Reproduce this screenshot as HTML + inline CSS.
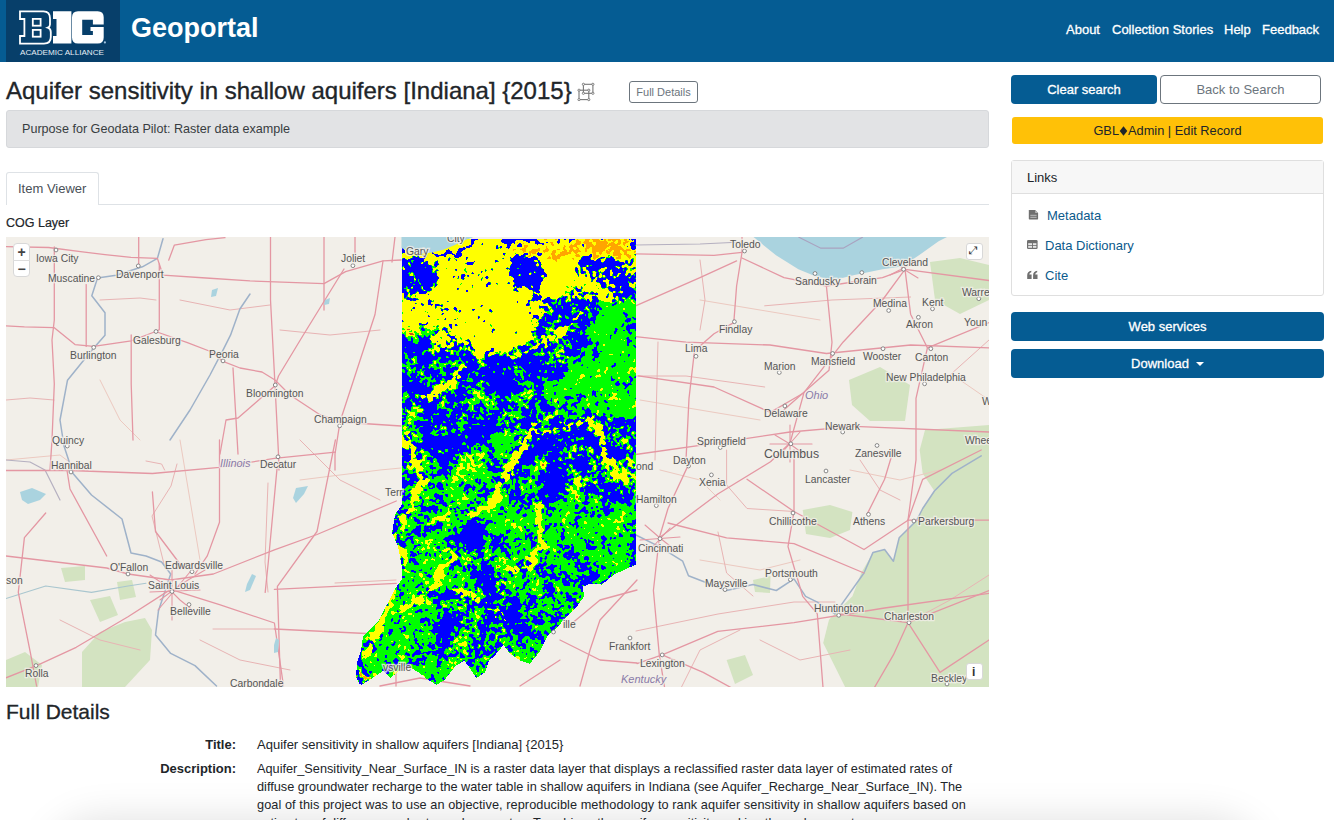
<!DOCTYPE html>
<html><head><meta charset="utf-8">
<style>
*{box-sizing:border-box;margin:0;padding:0}
html,body{width:1334px;height:820px;overflow:hidden;background:#fff}
body{font-family:"Liberation Sans",sans-serif;color:#212529;position:relative}
.abs{position:absolute;white-space:nowrap}
#hdr{position:absolute;left:0;top:0;width:1334px;height:62px;background:#055c93}
#logo{position:absolute;left:6px;top:0;width:114px;height:62px;background:#073f6a}
#brand{left:131px;top:13px;font-size:27px;font-weight:bold;color:#fff}
.nav{top:22px;font-size:13px;color:#fff}
#title{left:6px;top:77px;font-size:24px;color:#212529;-webkit-text-stroke:0.35px #212529}
#fdbtn{position:absolute;left:629px;top:81px;width:69px;height:22px;border:1px solid #6c757d;border-radius:3px;font-size:11px;color:#6c757d;text-align:center;line-height:20px}
#alert{position:absolute;left:6px;top:110px;width:983px;height:38px;background:#e2e3e5;border:1px solid #d6d8db;border-radius:3px}
#alert span{position:absolute;left:15px;top:11px;font-size:12.6px;color:#383d41}
#tab{position:absolute;left:6px;top:172px;width:93px;height:33px;border:1px solid #dee2e6;border-bottom:none;border-radius:3px 3px 0 0;background:#fff}
#tab span{position:absolute;left:11px;top:8px;font-size:13px;color:#495057}
#tabline{position:absolute;left:6px;top:204px;width:983px;height:1px;background:#dee2e6}
#cog{left:6px;top:216px;font-size:12.5px;color:#212529}
#map{position:absolute;left:6px;top:237px;width:983px;height:450px;background:#f2efe9;overflow:hidden}
#fd{left:6px;top:700px;font-size:21px;color:#212529;-webkit-text-stroke:0.3px #212529}
.dt{font-size:13px;font-weight:bold;text-align:right}
.dd{font-size:13px;color:#212529}
.btn{position:absolute;border-radius:4px;font-size:13px;text-align:center}
.blue{background:#055c93;color:#fff}
#links{position:absolute;left:1011px;top:160px;width:313px;height:136px;border:1px solid #dfdfdf;border-radius:3px}
#linksh{position:absolute;left:0;top:0;width:311px;height:33px;background:#f7f7f7;border-bottom:1px solid #dfdfdf}
.lnk{font-size:13px;color:#0b5a8c}
.mctl{position:absolute;background:#fff;border:1px solid #d8d8d8;border-radius:3px}
#fade{position:absolute;left:70px;top:842px;width:1170px;height:60px;border-radius:30px;background:#ddd;box-shadow:0 0 40px 22px rgba(0,0,0,.13)}
.med{-webkit-text-stroke:0.3px currentColor}
</style></head>
<body>
<div id="hdr">
  <div id="logo"></div>
  <svg style="position:absolute;left:0;top:0" width="130" height="62" viewBox="0 0 130 62">
    <path d="M20,11.4H43.5Q50,11.4 50,18.5V24.5Q50,26.8 47.8,27.6Q50.8,28.6 50.8,32V37Q50.8,43.6 44,43.6H20V36H24.4V19H20Z" fill="#073f6a" stroke="#fff" stroke-width="1.8"/>
    <rect x="32.8" y="18.9" width="7.8" height="6.8" fill="#073f6a" stroke="#fff" stroke-width="1.8"/>
    <rect x="32.8" y="29.9" width="7.8" height="6.8" fill="#073f6a" stroke="#fff" stroke-width="1.8"/>
    <path d="M53,11.2H71.4V43.6H53V36H56.5V19H53Z" fill="#fff"/>
    <path d="M78,11.2H97.7Q103.7,11.2 103.7,17.2V37.4Q103.7,43.4 97.7,43.4H78Q72,43.4 72,37.4V17.2Q72,11.2 78,11.2ZM82.2,19.7V35H92.9V31H90.5V27H103.7V24.6H92.9V19.7Z" fill="#fff" fill-rule="evenodd"/>
    <circle cx="104.9" cy="42.4" r="1.1" fill="#9fc3e0"/>
    <text x="20" y="54.6" font-size="7.4" fill="#e6eef5" textLength="84" lengthAdjust="spacingAndGlyphs" font-family="Liberation Sans, sans-serif">ACADEMIC ALLIANCE</text>
  </svg>
  <div class="abs" id="brand">Geoportal</div>
  <div class="abs nav med" style="left:1066px">About</div>
  <div class="abs nav med" style="left:1112px">Collection Stories</div>
  <div class="abs nav med" style="left:1224px">Help</div>
  <div class="abs nav med" style="left:1262px">Feedback</div>
</div>
<div class="abs" id="title">Aquifer sensitivity in shallow aquifers [Indiana] {2015}</div>
<svg style="position:absolute;left:576px;top:81px" width="20" height="22" viewBox="576 81 20 22">
  <g fill="none" stroke="#777" stroke-width="1.1">
    <rect x="583.4" y="84.3" width="9.5" height="9"/>
    <rect x="579" y="90.2" width="9.8" height="9.4"/>
  </g>
  <g fill="#fff" stroke="#777" stroke-width="0.9">
    <circle cx="583.4" cy="84.3" r="1.1"/><circle cx="592.9" cy="84.3" r="1.1"/><circle cx="592.9" cy="93.3" r="1.1"/><circle cx="583.4" cy="93.3" r="1.1"/>
    <circle cx="579" cy="90.2" r="1.1"/><circle cx="588.8" cy="90.2" r="1.1"/><circle cx="579" cy="99.6" r="1.1"/><circle cx="588.8" cy="99.6" r="1.1"/>
  </g>
</svg>
<div id="fdbtn">Full Details</div>
<div id="alert"><span>Purpose for Geodata Pilot: Raster data example</span></div>
<div id="tabline"></div>
<div id="tab"><span>Item Viewer</span></div>
<div class="abs" id="cog" style="-webkit-text-stroke:0.2px #212529">COG Layer</div>
<div id="map"><svg width="983" height="450" viewBox="6 237 983 450" style="position:absolute;left:0;top:0"><rect x="6" y="237" width="983" height="450" fill="#f2efe9"/><polygon points="846.6,690.0 834.9,666.6 823.2,643.0 829.0,619.7 852.4,596.3 861.2,573.0 873.0,552.4 884.6,549.5 893.4,561.2 899.2,537.8 916.8,520.2 922.7,508.5 934.4,491.0 922.7,473.4 919.7,450.0 925.0,430.0 989.0,425.0 989.0,690.0" fill="#d3e3c1"/><polygon points="802.7,510.0 830.0,505.0 852.4,512.0 850.0,530.0 830.0,538.0 806.0,534.0" fill="#d3e3c1"/><polygon points="753.0,580.0 770.5,576.0 770.0,593.0 755.0,592.0" fill="#d3e3c1"/><polygon points="726.6,660.0 745.0,655.0 753.0,675.0 735.0,684.0" fill="#d3e3c1"/><polygon points="849.0,380.0 880.0,367.0 910.0,385.0 905.0,421.0 870.0,421.0 852.0,405.0" fill="#d3e3c1"/><polygon points="930.0,262.0 960.0,258.0 989.0,265.0 989.0,300.0 960.0,314.0 935.0,300.0" fill="#d3e3c1"/><polygon points="6.0,660.0 25.0,652.0 42.0,665.0 38.0,687.0 6.0,687.0" fill="#d3e3c1"/><polygon points="82.0,652.0 100.0,632.0 125.0,622.0 145.0,618.0 152.0,630.0 150.0,660.0 125.0,687.0 82.0,687.0" fill="#d3e3c1"/><polygon points="90.0,600.0 110.0,596.0 118.0,615.0 100.0,622.0" fill="#d3e3c1"/><polygon points="61.0,568.0 85.0,566.0 85.0,580.0 65.0,582.0" fill="#d3e3c1"/><polygon points="117.0,582.0 132.0,580.0 136.0,597.0 120.0,600.0" fill="#d3e3c1"/><g fill="none" stroke-linejoin="round" stroke-linecap="round"><polyline points="6.0,460.0 60.0,455.0 80.0,470.0" stroke="#ecc9c0" stroke-width="1"/><polyline points="100.0,380.0 120.0,420.0 140.0,440.0" stroke="#ecc9c0" stroke-width="1"/><polyline points="180.0,440.0 190.0,500.0 200.0,560.0" stroke="#ecc9c0" stroke-width="1"/><polyline points="300.0,480.0 380.0,470.0 401.0,468.0" stroke="#ecc9c0" stroke-width="1"/><polyline points="640.0,400.0 700.0,410.0 760.0,420.0" stroke="#ecc9c0" stroke-width="1"/><polyline points="700.0,300.0 760.0,310.0 820.0,320.0" stroke="#ecc9c0" stroke-width="1"/><polyline points="660.0,470.0 700.0,480.0 720.0,500.0" stroke="#ecc9c0" stroke-width="1"/><polyline points="850.0,470.0 900.0,480.0 940.0,470.0" stroke="#ecc9c0" stroke-width="1"/><polyline points="700.0,560.0 760.0,570.0 800.0,560.0" stroke="#ecc9c0" stroke-width="1"/><polyline points="960.0,380.0 989.0,400.0" stroke="#ecc9c0" stroke-width="1"/><polyline points="635.6,376.0 686.0,376.0 764.7,387.0" stroke="#e8b4b4" stroke-width="1"/><polyline points="658.0,342.0 655.0,460.0" stroke="#e8b4b4" stroke-width="1"/><polyline points="764.7,305.8 832.0,300.0 910.6,297.0" stroke="#e8b4b4" stroke-width="1"/><polyline points="950.0,375.0 989.0,340.0" stroke="#e8b4b4" stroke-width="1"/><polyline points="726.6,450.0 726.6,485.0 747.0,508.5 794.0,511.5" stroke="#e8b4b4" stroke-width="1"/><polyline points="636.0,631.0 718.0,614.0 794.0,602.0 835.0,602.0" stroke="#e8b4b4" stroke-width="1"/><polyline points="718.0,532.0 726.6,573.0 753.0,596.0" stroke="#e8b4b4" stroke-width="1"/><polyline points="908.0,622.7 950.0,600.0 989.0,575.0" stroke="#e8b4b4" stroke-width="1"/><polyline points="146.0,461.0 161.6,464.0 164.6,470.0" stroke="#e8b4b4" stroke-width="1"/><polyline points="177.0,464.0 171.0,486.0 152.0,516.0 165.0,568.0" stroke="#e8b4b4" stroke-width="1"/><polyline points="268.0,483.0 265.0,562.0 268.0,592.0" stroke="#e8b4b4" stroke-width="1"/><polyline points="213.0,629.0 274.0,629.0" stroke="#e8b4b4" stroke-width="1"/><polyline points="335.0,583.0 396.0,580.0" stroke="#e8b4b4" stroke-width="1"/><polyline points="6.0,400.0 30.0,398.0 54.0,400.0" stroke="#e8b4b4" stroke-width="1"/><polyline points="100.0,300.0 140.0,298.0 156.0,300.0" stroke="#e8b4b4" stroke-width="1"/><polyline points="180.0,300.0 230.0,310.0 270.0,305.0" stroke="#e8b4b4" stroke-width="1"/><polyline points="280.0,330.0 330.0,335.0 380.0,330.0" stroke="#e8b4b4" stroke-width="1"/><polyline points="300.0,440.0 340.0,480.0 380.0,500.0" stroke="#e8b4b4" stroke-width="1"/><polyline points="60.0,620.0 100.0,640.0 140.0,650.0" stroke="#e8b4b4" stroke-width="1"/><polyline points="200.0,640.0 240.0,660.0 290.0,670.0" stroke="#e8b4b4" stroke-width="1"/><polyline points="700.0,260.0 705.0,300.0 700.0,330.0" stroke="#e8b4b4" stroke-width="1"/><polyline points="860.0,460.0 880.0,490.0 900.0,500.0" stroke="#e8b4b4" stroke-width="1"/><polyline points="760.0,640.0 800.0,660.0 850.0,650.0" stroke="#e8b4b4" stroke-width="1"/><polyline points="680.0,690.0 700.0,650.0 740.0,630.0" stroke="#e8b4b4" stroke-width="1"/><polyline points="6.0,460.0 30.0,462.0 45.0,470.0 60.0,500.0" stroke="#b5b0c0" stroke-width="1.2"/><polyline points="798.4,237.0 820.8,248.2 843.2,248.2 862.9,237.0" stroke="#b5b0c0" stroke-width="1.2"/><polyline points="635.6,245.0 700.0,244.0 742.0,242.0" stroke="#b5b0c0" stroke-width="1.2"/><polyline points="163.0,238.7 157.4,258.4 142.4,266.8 116.2,275.2 97.5,278.0 91.8,295.8 105.0,312.7 105.0,335.2 91.8,350.2 67.5,380.2 60.0,420.0 64.0,446.0 73.0,473.5 91.5,495.0 122.0,519.0 131.0,553.0 146.0,556.0 161.6,562.0 170.7,574.0 158.5,610.7 155.5,635.0 170.7,653.4 195.0,665.6 216.5,686.0" stroke="#9fb2c9" stroke-width="1.5"/><polyline points="6.0,598.5 45.7,586.0 91.5,592.4 128.0,586.0 146.0,583.3" stroke="#a9c6cf" stroke-width="1.1"/><polyline points="250.0,294.0 239.9,309.0 230.5,335.2 223.0,350.2 210.0,375.0 190.0,410.0 170.0,440.0" stroke="#9fb2c9" stroke-width="1.5"/><polyline points="635.9,535.0 659.3,546.6 682.7,561.2 688.5,575.8 726.6,590.5 753.0,584.6 776.3,590.5 794.0,578.8 805.6,596.3 817.3,602.2 834.9,613.9 864.0,573.0 873.0,552.4 884.6,549.5 893.4,561.2 899.2,537.8 916.8,520.2 922.7,508.5 934.4,491.0 952.0,473.4 981.2,455.9" stroke="#9fb2c9" stroke-width="1.5"/><polyline points="6.0,246.6 48.7,247.5 82.5,251.8 105.0,254.6 131.0,257.4 157.4,258.4 159.3,264.0 163.0,275.2 206.0,278.0 250.0,280.9 324.0,283.6 345.6,271.6 383.0,260.8 401.0,260.0" stroke="#e497a3" stroke-width="1.3"/><polyline points="168.7,260.2 174.3,245.2 206.0,239.6 225.0,237.7" stroke="#e497a3" stroke-width="1.3"/><polyline points="54.3,247.0 54.3,320.0 52.0,340.0 54.3,384.0 52.0,440.0 50.0,470.0" stroke="#e497a3" stroke-width="1.3"/><polyline points="138.7,237.0 138.7,266.0" stroke="#e497a3" stroke-width="1.3"/><polyline points="159.3,264.0 159.3,329.6 156.0,331.5" stroke="#e497a3" stroke-width="1.3"/><polyline points="6.0,325.8 24.4,326.8 54.3,327.7 75.0,344.6 93.7,346.4 131.2,340.8 155.6,331.5 187.4,342.7 211.8,352.0 223.0,361.4 240.0,368.0 262.0,372.0 275.0,380.0 290.0,395.0 318.8,414.0 340.0,422.0 401.0,426.0" stroke="#e497a3" stroke-width="1.3"/><polyline points="86.2,284.6 86.2,346.4" stroke="#e497a3" stroke-width="1.3"/><polyline points="131.2,335.0 131.2,384.0 133.0,440.0" stroke="#e497a3" stroke-width="1.3"/><polyline points="344.0,269.0 302.7,336.0 278.5,376.0 275.3,385.6 238.0,418.0 226.0,420.0 220.0,454.0" stroke="#e497a3" stroke-width="1.3"/><polyline points="270.5,237.0 270.5,300.0 275.0,385.0 278.5,454.0 279.0,470.0" stroke="#e497a3" stroke-width="1.3"/><polyline points="383.0,261.0 375.0,314.5 340.0,421.8 335.0,454.0 335.0,470.0" stroke="#e497a3" stroke-width="1.3"/><polyline points="233.0,368.0 238.0,454.0" stroke="#e497a3" stroke-width="1.3"/><polyline points="324.0,237.0 324.0,310.0" stroke="#e497a3" stroke-width="1.3"/><polyline points="355.0,237.0 355.0,262.0" stroke="#e497a3" stroke-width="1.3"/><polyline points="395.0,237.0 392.0,262.0" stroke="#e497a3" stroke-width="1.3"/><polyline points="6.0,470.5 70.0,470.5 152.4,473.5 219.5,467.4 274.4,458.3 335.4,452.2" stroke="#e497a3" stroke-width="1.3"/><polyline points="6.0,556.0 106.7,568.0 128.0,574.0 170.7,580.0 213.4,574.0 274.4,549.8 317.0,534.5 396.3,501.0" stroke="#e497a3" stroke-width="1.3"/><polyline points="170.7,589.4 219.5,604.6 274.4,623.0 283.5,686.0" stroke="#e497a3" stroke-width="1.3"/><polyline points="170.7,589.4 128.0,616.8 76.2,647.3 36.6,665.6 6.0,677.8" stroke="#e497a3" stroke-width="1.3"/><polyline points="219.5,440.0 219.5,522.3 207.3,555.9 195.0,574.0" stroke="#e497a3" stroke-width="1.3"/><polyline points="335.4,440.0 317.0,531.5 277.4,586.3 280.5,686.0" stroke="#e497a3" stroke-width="1.3"/><polyline points="274.4,629.0 396.3,635.0" stroke="#e497a3" stroke-width="1.3"/><polyline points="396.3,583.3 274.4,589.4" stroke="#e497a3" stroke-width="1.3"/><polyline points="277.4,464.4 268.3,562.0 265.2,592.4" stroke="#e497a3" stroke-width="1.3"/><polyline points="67.0,470.5 70.0,489.0 106.7,556.0" stroke="#e497a3" stroke-width="1.3"/><polyline points="45.7,513.0 24.4,537.6 18.3,592.4 30.5,653.4 36.6,686.0" stroke="#e497a3" stroke-width="1.3"/><polyline points="152.4,492.0 155.5,531.5 183.0,568.0" stroke="#e497a3" stroke-width="1.3"/><polyline points="635.6,253.8 714.0,255.3 742.0,252.4" stroke="#e497a3" stroke-width="1.3"/><polyline points="742.0,258.0 784.0,277.7 826.4,286.0 882.5,277.7 905.0,269.3" stroke="#e497a3" stroke-width="1.3"/><polyline points="742.0,237.0 742.0,252.4 736.6,286.0 733.8,322.6 714.0,333.8 694.5,350.7 689.0,398.4 686.0,460.0 688.5,464.6 668.0,508.5 659.3,537.8" stroke="#e497a3" stroke-width="1.3"/><polyline points="635.6,305.8 700.0,277.7 736.6,260.9" stroke="#e497a3" stroke-width="1.3"/><polyline points="635.6,336.6 686.0,342.2 770.0,345.0 826.4,353.5 910.6,345.0 989.0,347.8" stroke="#e497a3" stroke-width="1.3"/><polyline points="905.0,269.3 882.5,300.0 843.0,342.2 804.0,392.7 790.0,443.0 770.5,461.7 717.8,494.0 659.3,537.8" stroke="#e497a3" stroke-width="1.3"/><polyline points="905.0,269.3 910.6,314.2 927.4,347.8 916.0,398.4 916.0,460.0 908.0,520.2 908.0,622.7 893.4,654.9 873.0,690.0" stroke="#e497a3" stroke-width="1.3"/><polyline points="804.0,392.7 770.3,412.4 714.0,387.0 638.4,375.9" stroke="#e497a3" stroke-width="1.3"/><polyline points="989.0,432.0 854.5,426.4 790.0,432.0 714.0,443.3 635.6,454.5" stroke="#e497a3" stroke-width="1.3"/><polyline points="877.0,252.4 938.6,237.0" stroke="#e497a3" stroke-width="1.3"/><polyline points="905.0,269.3 989.0,280.5" stroke="#e497a3" stroke-width="1.3"/><polyline points="826.4,286.0 832.0,342.2 829.0,370.3 784.3,409.6" stroke="#e497a3" stroke-width="1.3"/><polyline points="927.4,347.8 989.0,322.6" stroke="#e497a3" stroke-width="1.3"/><polyline points="659.3,537.8 653.4,590.5 659.3,654.9 665.0,690.0" stroke="#e497a3" stroke-width="1.3"/><polyline points="668.0,523.0 726.6,537.8 794.0,543.6 864.0,573.0" stroke="#e497a3" stroke-width="1.3"/><polyline points="662.2,654.9 717.8,631.4 794.0,622.7 884.6,608.0 989.0,593.4" stroke="#e497a3" stroke-width="1.3"/><polyline points="637.0,663.6 662.2,654.9 703.2,672.4 735.4,690.0" stroke="#e497a3" stroke-width="1.3"/><polyline points="794.0,450.0 794.0,511.5 788.0,546.6 794.0,567.0 802.7,596.3 817.3,613.9 823.2,690.0" stroke="#e497a3" stroke-width="1.3"/><polyline points="867.0,514.4 884.6,479.3 893.4,450.0" stroke="#e497a3" stroke-width="1.3"/><polyline points="747.0,479.3 794.0,511.5 864.0,549.5 908.0,520.2 989.0,520.2" stroke="#e497a3" stroke-width="1.3"/><polyline points="908.0,520.2 922.7,479.3 981.2,450.0" stroke="#e497a3" stroke-width="1.3"/><polyline points="840.7,614.0 908.0,622.7 989.0,590.5" stroke="#e497a3" stroke-width="1.3"/><polyline points="908.0,622.7 940.0,672.4 989.0,640.0" stroke="#e497a3" stroke-width="1.3"/><polyline points="637.0,580.0 600.0,620.0 590.0,650.0 580.0,686.0" stroke="#e497a3" stroke-width="1.3"/><polyline points="560.0,640.0 600.0,660.0 637.0,663.0" stroke="#e497a3" stroke-width="1.3"/><polyline points="570.0,625.0 600.0,600.0 637.0,590.0" stroke="#e497a3" stroke-width="1.3"/><polyline points="400.0,600.0 396.0,640.0 396.0,686.0" stroke="#e497a3" stroke-width="1.3"/><polyline points="380.0,686.0 420.0,678.0 470.0,686.0" stroke="#e497a3" stroke-width="1.3"/><polyline points="520.0,686.0 560.0,660.0" stroke="#e497a3" stroke-width="1.3"/><polyline points="150.0,575.0 165.0,585.0 180.0,600.0 195.0,612.0" stroke="#e497a3" stroke-width="1.1"/><polyline points="160.0,600.0 172.0,591.0 188.0,580.0 205.0,570.0" stroke="#e497a3" stroke-width="1.1"/><polyline points="172.0,570.0 172.0,620.0" stroke="#e497a3" stroke-width="1.1"/><polyline points="150.0,592.0 200.0,590.0" stroke="#e497a3" stroke-width="1.1"/><polyline points="158.0,610.0 190.0,572.0" stroke="#e497a3" stroke-width="1.1"/><polyline points="645.0,525.0 660.0,538.0 675.0,550.0" stroke="#e497a3" stroke-width="1.1"/><polyline points="650.0,550.0 670.0,528.0" stroke="#e497a3" stroke-width="1.1"/><polyline points="640.0,540.0 680.0,537.0" stroke="#e497a3" stroke-width="1.1"/><polyline points="775.0,435.0 790.0,444.0 805.0,455.0" stroke="#e497a3" stroke-width="1.1"/><polyline points="780.0,455.0 800.0,432.0" stroke="#e497a3" stroke-width="1.1"/><polyline points="770.0,444.0 812.0,444.0" stroke="#e497a3" stroke-width="1.1"/><polyline points="790.0,425.0 790.0,462.0" stroke="#e497a3" stroke-width="1.1"/><polyline points="895.0,262.0 905.0,270.0 918.0,278.0" stroke="#e497a3" stroke-width="1.1"/><polyline points="890.0,275.0 915.0,262.0" stroke="#e497a3" stroke-width="1.1"/></g><polygon points="753.5,237.0 776.0,255.3 798.4,269.3 812.4,275.0 832.0,280.5 854.5,275.0 882.5,269.3 902.0,266.5 919.0,255.3 938.6,241.2 947.0,237.0" fill="#aad3df"/><polygon points="401.7,237.0 401.7,248.0 410.0,252.0 419.0,254.0 432.0,252.5 444.0,249.4 455.0,245.0 463.0,241.0 473.0,237.0" fill="#aad3df"/><polygon points="20.0,492.0 32.0,488.0 46.0,494.0 40.0,500.0 28.0,504.0 22.0,500.0" fill="#aad3df"/><polygon points="252.0,574.0 256.0,576.0 250.0,590.0 245.0,592.0 247.0,584.0" fill="#aad3df"/><polygon points="276.0,638.0 279.0,640.0 278.0,652.0 274.0,653.0 274.0,645.0" fill="#aad3df"/><polygon points="296.0,488.0 308.0,486.0 304.0,494.0 296.0,503.0 293.0,498.0" fill="#aad3df"/><polygon points="212.0,290.0 218.0,288.0 216.0,296.0 211.0,297.0" fill="#aad3df"/><polygon points="325.0,300.0 330.0,298.0 329.0,304.0 324.0,305.0" fill="#aad3df"/><g shape-rendering="crispEdges" fill="none"><path stroke="#0000ff" stroke-width="1" d="M471 239.5h7m24 0h35m21 0h2m4 0h2m3 0h6m26 0h2m26 0h1m1 0h5m-224 1h1m58 0h4m26 0h15m7 0h15m20 0h2m9 0h3m60 0h1m1 0h2m-225 1h2m58 0h3m27 0h14m11 0h4m5 0h4m18 0h3m9 0h2m63 0h2m-225 1h1m59 0h3m28 0h13m13 0h2m5 0h5m6 0h2m9 0h3m9 0h1m61 0h5m-234 1h1m8 0h1m59 0h3m8 0h1m21 0h8m2 0h1m4 0h2m14 0h9m14 0h1m71 0h6m-234 1h2m67 0h2m9 0h1m24 0h4m7 0h4m15 0h1m4 0h2m38 0h2m46 0h6m-234 1h2m65 0h3m25 0h1m9 0h4m6 0h5m60 0h2m46 0h5m-233 1h2m62 0h6m24 0h2m2 0h2m5 0h3m7 0h5m61 0h1m43 0h1m3 0h5m-234 1h1m60 0h2m1 0h4m26 0h2m2 0h2m4 0h4m121 0h5m-234 1h1m56 0h7m30 0h2m10 0h1m122 0h5m-234 1h2m44 0h1m9 0h7m167 0h3m-233 1h3m4 0h1m36 0h4m8 0h5m-61 1h3m41 0h6m5 0h5m-60 1h3m27 0h1m12 0h7m5 0h4m77 0h1m-107 1h2m10 0h9m3 0h6m41 0h2m19 0h4m9 0h5m-125 1h2m15 0h4m3 0h6m5 0h3m1 0h6m41 0h2m11 0h2m5 0h5m9 0h5m48 0h2m43 0h1m-219 1h2m4 0h2m10 0h11m8 0h8m53 0h4m2 0h4m13 0h3m48 0h3m-179 1h2m3 0h1m5 0h2m10 0h3m5 0h2m8 0h7m53 0h11m8 0h2m48 0h9m19 0h1m-199 1h6m5 0h2m29 0h4m7 0h2m42 0h1m2 0h11m1 0h3m3 0h6m45 0h9m10 0h4m5 0h3m-210 1h2m6 0h14m24 0h1m16 0h1m36 0h1m7 0h27m43 0h9m9 0h3m4 0h8m-212 1h4m2 0h16m24 0h2m16 0h1m44 0h27m43 0h10m6 0h3m6 0h9m16 0h2m-231 1h9m3 0h10m24 0h1m7 0h1m38 0h2m13 0h24m4 0h1m40 0h15m2 0h5m4 0h10m11 0h1m4 0h2m-231 1h9m2 0h11m2 0h2m8 0h2m36 0h1m20 0h3m13 0h23m4 0h2m39 0h22m3 0h15m6 0h3m3 0h2m-231 1h6m2 0h2m1 0h8m3 0h4m7 0h3m29 0h7m38 0h25m1 0h3m37 0h24m1 0h21m1 0h3m2 0h3m-231 1h6m2 0h11m2 0h5m7 0h3m28 0h7m39 0h25m2 0h2m37 0h47m1 0h2m2 0h2m-230 1h6m3 0h17m6 0h5m28 0h6m38 0h9m1 0h15m3 0h2m38 0h45m4 0h4m-230 1h7m2 0h20m3 0h3m74 0h25m3 0h2m39 0h6m3 0h1m2 0h30m7 0h2m-229 1h1m1 0h6m1 0h21m3 0h2m73 0h27m1 0h3m39 0h6m3 0h26m4 0h2m-217 1h21m1 0h6m78 0h31m35 0h1m4 0h1m4 0h18m3 0h9m4 0h2m3 0h1m8 0h1m-230 1h27m74 0h3m1 0h7m2 0h23m33 0h3m3 0h1m4 0h15m6 0h11m2 0h7m5 0h3m-233 1h1m2 0h28m22 0h2m34 0h2m16 0h35m31 0h3m3 0h2m4 0h12m7 0h5m1 0h11m1 0h3m-225 1h30m4 0h2m18 0h1m28 0h1m24 0h34m31 0h3m3 0h2m5 0h10m7 0h5m2 0h11m1 0h2m-224 1h30m3 0h1m45 0h1m28 0h24m1 0h9m32 0h2m3 0h4m4 0h3m4 0h2m6 0h6m2 0h14m-224 1h7m1 0h1m2 0h19m3 0h1m36 0h1m8 0h1m27 0h21m1 0h3m2 0h9m31 0h2m3 0h5m3 0h3m5 0h2m1 0h1m2 0h7m3 0h13m9 0h1m-234 1h6m6 0h23m35 0h2m35 0h20m3 0h14m31 0h1m3 0h3m6 0h3m3 0h3m3 0h8m3 0h5m3 0h4m4 0h1m4 0h2m-234 1h7m5 0h23m25 0h3m44 0h10m2 0h8m2 0h16m31 0h1m11 0h2m4 0h3m3 0h8m3 0h4m3 0h5m3 0h3m4 0h1m-234 1h7m6 0h22m24 0h4m2 0h2m9 0h1m30 0h9m3 0h20m3 0h3m31 0h1m6 0h2m3 0h2m4 0h3m6 0h5m3 0h4m2 0h6m2 0h4m1 0h2m1 0h1m-234 1h12m1 0h23m15 0h2m3 0h1m2 0h4m3 0h1m17 0h2m24 0h29m3 0h3m39 0h1m3 0h3m3 0h2m8 0h7m6 0h11m1 0h5m-234 1h12m1 0h24m14 0h1m4 0h1m2 0h3m21 0h3m25 0h29m49 0h4m3 0h1m3 0h1m2 0h8m3 0h12m3 0h5m-234 1h12m2 0h23m22 0h3m22 0h2m26 0h29m48 0h4m2 0h9m1 0h7m1 0h14m1 0h5m-233 1h12m2 0h2m1 0h19m25 0h1m17 0h1m32 0h29m49 0h1m4 0h9m2 0h28m-234 1h12m2 0h2m1 0h18m76 0h30m49 0h1m3 0h7m7 0h26m-234 1h12m1 0h3m1 0h18m76 0h29m49 0h1m4 0h7m6 0h19m1 0h7m-234 1h8m2 0h7m1 0h16m52 0h2m18 0h1m5 0h27m58 0h6m4 0h19m3 0h3m-232 1h17m2 0h12m2 0h1m51 0h4m5 0h1m11 0h2m5 0h26m59 0h6m3 0h20m3 0h1m-231 1h11m2 0h5m1 0h12m2 0h2m49 0h4m24 0h27m60 0h5m8 0h15m-227 1h31m2 0h2m35 0h1m13 0h2m25 0h18m1 0h8m61 0h5m9 0h14m-227 1h4m1 0h5m1 0h8m2 0h9m3 0h1m50 0h2m25 0h2m1 0h6m3 0h6m2 0h7m61 0h5m3 0h1m6 0h4m2 0h7m-227 1h4m2 0h3m2 0h8m2 0h7m87 0h2m1 0h2m5 0h4m2 0h7m36 0h1m4 0h1m20 0h4m2 0h4m3 0h5m1 0h10m4 0h1m-234 1h2m4 0h3m2 0h8m2 0h8m26 0h2m56 0h2m11 0h12m35 0h3m3 0h1m26 0h12m1 0h12m-231 1h4m4 0h12m2 0h8m25 0h1m56 0h3m12 0h10m37 0h5m28 0h25m-232 1h4m4 0h13m3 0h5m35 0h2m46 0h4m15 0h6m33 0h1m3 0h5m28 0h11m1 0h14m-233 1h5m2 0h8m1 0h9m39 0h2m49 0h1m15 0h1m1 0h5m31 0h2m4 0h4m30 0h2m3 0h3m4 0h13m-234 1h6m2 0h6m3 0h8m109 0h4m31 0h2m10 0h5m3 0h3m22 0h2m5 0h13m-232 1h4m2 0h5m4 0h7m107 0h1m37 0h3m5 0h1m3 0h5m2 0h8m15 0h8m1 0h12m1 0h1m-232 1h4m2 0h2m16 0h1m104 0h4m33 0h4m4 0h4m1 0h3m6 0h1m2 0h3m10 0h1m4 0h22m-231 1h3m126 0h5m1 0h2m30 0h1m9 0h3m23 0h1m5 0h17m2 0h3m-231 1h3m126 0h9m21 0h1m1 0h2m4 0h1m3 0h2m5 0h2m8 0h4m10 0h2m5 0h3m2 0h11m3 0h3m-231 1h2m1 0h2m124 0h9m5 0h3m12 0h5m4 0h1m3 0h2m15 0h5m9 0h2m6 0h1m4 0h3m3 0h3m3 0h4m-229 1h6m1 0h3m116 0h9m5 0h4m8 0h8m5 0h2m2 0h3m14 0h6m21 0h3m4 0h1m4 0h5m-229 1h11m11 0h1m102 0h9m3 0h8m5 0h3m1 0h5m5 0h8m2 0h3m3 0h2m4 0h5m15 0h2m4 0h5m10 0h2m-226 1h2m1 0h3m12 0h3m97 0h2m1 0h4m1 0h2m4 0h13m2 0h2m2 0h4m6 0h15m1 0h2m3 0h7m13 0h4m4 0h4m11 0h1m-208 1h4m15 0h1m69 0h1m10 0h2m12 0h13m2 0h2m2 0h4m6 0h19m2 0h7m13 0h3m7 0h2m-196 1h3m86 0h1m10 0h1m14 0h8m6 0h1m3 0h5m1 0h29m1 0h1m17 0h2m6 0h1m-209 1h1m5 0h1m6 0h3m96 0h2m15 0h1m3 0h4m4 0h2m3 0h11m2 0h22m18 0h3m-196 1h3m4 0h5m2 0h4m87 0h4m19 0h4m1 0h4m3 0h9m1 0h1m2 0h1m3 0h11m1 0h6m1 0h1m14 0h4m-194 1h1m8 0h1m3 0h8m38 0h2m43 0h3m20 0h7m1 0h13m2 0h4m2 0h11m1 0h9m13 0h2m-179 1h1m5 0h1m39 0h1m57 0h8m4 0h5m1 0h4m2 0h23m2 0h12m-187 1h2m20 0h1m18 0h2m83 0h9m4 0h4m1 0h5m1 0h9m4 0h9m3 0h7m1 0h5m-188 1h2m30 0h3m6 0h3m87 0h4m4 0h10m1 0h9m4 0h9m4 0h2m1 0h2m2 0h1m2 0h3m-161 1h2m1 0h5m5 0h3m15 0h3m15 0h1m53 0h5m4 0h19m3 0h3m1 0h5m6 0h5m1 0h1m2 0h3m-191 1h1m29 0h2m4 0h1m8 0h1m2 0h2m12 0h1m15 0h3m53 0h4m5 0h18m4 0h1m2 0h8m3 0h7m-138 1h2m29 0h2m62 0h17m11 0h6m2 0h9m-70 1h2m22 0h18m5 0h3m5 0h5m2 0h8m24 0h2m-183 1h2m85 0h2m13 0h3m5 0h20m2 0h5m5 0h4m4 0h7m24 0h4m-185 1h1m101 0h5m3 0h7m1 0h12m1 0h5m4 0h3m1 0h2m4 0h6m26 0h4m-200 1h1m104 0h5m6 0h7m1 0h6m3 0h4m1 0h11m2 0h6m1 0h2m4 0h5m5 0h2m21 0h3m-200 1h2m48 0h1m54 0h6m4 0h15m4 0h3m3 0h9m2 0h9m5 0h3m29 0h2m-149 1h2m53 0h6m3 0h3m1 0h12m4 0h3m4 0h7m2 0h10m3 0h5m30 0h1m5 0h2m-189 1h1m32 0h1m53 0h1m3 0h3m3 0h3m1 0h12m1 0h7m3 0h4m5 0h11m1 0h6m31 0h4m2 0h3m-191 1h1m9 0h1m84 0h5m1 0h12m2 0h12m5 0h4m1 0h14m30 0h5m3 0h2m-234 1h1m81 0h1m54 0h6m1 0h8m7 0h12m1 0h7m1 0h13m30 0h6m-229 1h1m80 0h2m53 0h15m8 0h29m3 0h2m30 0h5m-203 1h1m111 0h8m4 0h2m6 0h31m3 0h2m32 0h1m-209 1h2m5 0h2m111 0h9m6 0h17m7 0h12m4 0h1m28 0h1m8 0h4m-217 1h8m22 0h3m3 0h2m82 0h11m1 0h1m2 0h16m7 0h14m31 0h2m4 0h1m1 0h6m-214 1h1m26 0h3m3 0h2m82 0h13m3 0h10m1 0h3m2 0h2m5 0h7m2 0h3m32 0h2m3 0h9m-199 1h1m12 0h2m86 0h4m2 0h7m4 0h4m3 0h2m6 0h4m5 0h8m1 0h2m31 0h2m3 0h10m-214 1h1m21 0h1m5 0h2m84 0h7m5 0h1m5 0h4m12 0h6m4 0h7m39 0h10m-215 1h3m19 0h4m4 0h1m84 0h9m9 0h3m13 0h17m28 0h2m9 0h10m-215 1h4m17 0h5m45 0h3m42 0h8m10 0h1m20 0h10m29 0h3m8 0h4m5 0h1m-214 1h3m12 0h2m6 0h2m45 0h2m42 0h10m29 0h6m1 0h3m30 0h2m6 0h2m2 0h3m5 0h1m-202 1h4m8 0h2m44 0h1m38 0h15m21 0h3m5 0h5m2 0h3m29 0h3m11 0h2m-195 1h3m8 0h2m44 0h1m22 0h2m15 0h2m2 0h9m5 0h3m14 0h11m1 0h1m3 0h3m28 0h2m12 0h4m-197 1h2m99 0h10m4 0h3m13 0h14m3 0h2m29 0h2m13 0h3m-230 1h2m28 0h2m14 0h1m84 0h1m2 0h11m4 0h3m12 0h14m2 0h3m45 0h1m-229 1h3m12 0h2m5 0h1m4 0h1m3 0h1m13 0h3m83 0h1m3 0h4m4 0h2m21 0h21m21 0h2m-210 1h3m13 0h3m3 0h2m2 0h2m19 0h6m19 0h1m63 0h3m15 0h1m6 0h25m22 0h1m-209 1h4m5 0h1m6 0h4m1 0h7m20 0h5m82 0h4m21 0h25m23 0h1m16 0h2m6 0h1m-234 1h5m4 0h2m6 0h10m22 0h5m82 0h2m23 0h9m1 0h14m3 0h1m19 0h1m15 0h3m6 0h1m-234 1h6m3 0h2m6 0h11m21 0h1m3 0h2m11 0h1m71 0h2m5 0h2m9 0h4m2 0h3m1 0h4m1 0h15m1 0h2m36 0h3m-228 1h6m3 0h2m6 0h12m20 0h1m14 0h4m61 0h2m7 0h2m5 0h2m10 0h3m7 0h7m1 0h11m1 0h2m36 0h5m-230 1h11m6 0h12m6 0h1m8 0h1m3 0h2m3 0h1m12 0h2m60 0h4m5 0h2m7 0h2m9 0h4m3 0h2m2 0h6m2 0h14m5 0h1m29 0h5m-230 1h11m5 0h13m15 0h2m6 0h3m12 0h2m58 0h5m5 0h2m6 0h5m7 0h4m3 0h3m1 0h23m3 0h3m28 0h3m-228 1h13m3 0h12m5 0h1m10 0h4m4 0h3m4 0h3m5 0h2m60 0h6m6 0h1m3 0h3m1 0h2m1 0h3m2 0h5m2 0h2m3 0h22m2 0h4m28 0h2m-227 1h29m3 0h2m11 0h3m4 0h3m2 0h5m4 0h3m61 0h4m4 0h5m2 0h2m2 0h7m4 0h2m7 0h21m4 0h3m28 0h2m-227 1h30m6 0h2m14 0h3m1 0h6m2 0h5m52 0h3m7 0h2m4 0h6m3 0h2m1 0h6m6 0h3m6 0h16m8 0h2m29 0h2m4 0h2m-233 1h30m6 0h2m14 0h6m1 0h2m3 0h2m2 0h2m46 0h13m7 0h6m4 0h9m7 0h2m6 0h15m9 0h1m37 0h2m-234 1h3m1 0h26m13 0h2m5 0h7m3 0h1m4 0h1m2 0h3m40 0h1m4 0h12m8 0h6m3 0h9m3 0h2m3 0h5m3 0h10m2 0h3m7 0h3m38 0h1m-234 1h26m12 0h7m4 0h8m11 0h3m18 0h3m19 0h1m4 0h11m8 0h4m2 0h2m1 0h9m4 0h1m4 0h6m2 0h9m13 0h3m-195 1h26m12 0h6m2 0h11m12 0h4m16 0h3m26 0h9m3 0h2m1 0h6m2 0h10m11 0h13m3 0h1m11 0h5m-195 1h22m16 0h5m11 0h2m3 0h3m2 0h2m6 0h1m15 0h4m18 0h1m1 0h2m5 0h6m2 0h12m2 0h11m10 0h17m11 0h5m-195 1h21m3 0h2m7 0h1m4 0h6m14 0h10m16 0h7m18 0h2m2 0h1m5 0h4m4 0h12m2 0h5m2 0h4m11 0h16m3 0h1m8 0h5m2 0h2m-200 1h2m1 0h8m2 0h7m3 0h6m4 0h2m2 0h11m4 0h2m3 0h12m14 0h4m20 0h4m9 0h1m5 0h8m2 0h2m4 0h3m4 0h1m13 0h16m1 0h3m8 0h5m-196 1h2m3 0h15m2 0h7m3 0h16m4 0h2m3 0h5m1 0h6m14 0h4m20 0h3m10 0h3m2 0h7m11 0h3m12 0h3m1 0h16m1 0h4m8 0h7m-198 1h3m2 0h15m2 0h8m3 0h15m4 0h2m3 0h4m3 0h6m13 0h3m7 0h4m5 0h2m3 0h4m9 0h11m12 0h4m4 0h2m6 0h19m1 0h4m7 0h7m21 0h1m7 0h2m-228 1h3m3 0h25m2 0h22m2 0h4m2 0h8m12 0h3m4 0h7m4 0h3m16 0h13m3 0h1m5 0h5m4 0h2m10 0h13m2 0h5m7 0h7m21 0h1m7 0h2m-228 1h3m3 0h6m3 0h29m2 0h27m10 0h3m2 0h17m1 0h1m12 0h29m4 0h2m13 0h2m2 0h3m4 0h3m11 0h5m29 0h1m-227 1h3m3 0h5m4 0h21m3 0h5m3 0h10m1 0h16m9 0h25m8 0h1m2 0h29m4 0h2m4 0h4m16 0h2m12 0h4m-196 1h3m4 0h2m6 0h21m3 0h18m2 0h15m9 0h26m6 0h32m5 0h10m14 0h3m12 0h2m-193 1h6m2 0h1m6 0h20m3 0h19m2 0h11m2 0h3m8 0h27m2 0h35m4 0h5m3 0h2m2 0h3m8 0h5m11 0h3m-193 1h6m1 0h3m5 0h16m6 0h10m2 0h4m7 0h11m1 0h4m4 0h58m2 0h7m4 0h2m1 0h1m8 0h2m7 0h7m12 0h2m-193 1h5m2 0h4m4 0h15m7 0h9m4 0h2m5 0h2m2 0h3m2 0h9m6 0h57m1 0h4m1 0h2m8 0h2m7 0h2m6 0h4m1 0h3m43 0h1m-223 1h4m4 0h3m4 0h16m7 0h6m1 0h1m10 0h4m2 0h2m2 0h9m7 0h30m1 0h14m2 0h14m11 0h3m14 0h3m23 0h1m-197 1h3m5 0h1m6 0h14m5 0h1m20 0h3m4 0h13m7 0h12m2 0h15m2 0h13m1 0h13m1 0h1m5 0h1m2 0h1m1 0h7m4 0h2m5 0h2m39 0h2m-211 1h2m8 0h14m7 0h3m9 0h2m15 0h15m7 0h10m2 0h43m2 0h3m2 0h6m1 0h12m14 0h1m31 0h2m-206 1h13m1 0h5m7 0h3m7 0h5m14 0h14m8 0h29m1 0h38m1 0h5m1 0h6m13 0h2m29 0h4m-206 1h12m2 0h5m8 0h2m7 0h5m4 0h1m11 0h12m6 0h23m1 0h4m5 0h1m2 0h30m2 0h1m2 0h4m2 0h5m44 0h4m-213 1h4m5 0h3m2 0h6m3 0h3m3 0h1m11 0h2m1 0h4m2 0h6m9 0h12m2 0h8m1 0h18m2 0h4m4 0h1m3 0h33m1 0h12m19 0h1m24 0h1m-211 1h4m5 0h2m3 0h6m1 0h6m1 0h4m9 0h15m5 0h15m2 0h23m3 0h2m3 0h3m4 0h3m2 0h45m-164 1h3m9 0h4m2 0h12m3 0h3m3 0h15m4 0h15m2 0h24m3 0h3m2 0h4m2 0h5m2 0h45m-164 1h3m7 0h5m2 0h2m1 0h15m3 0h11m8 0h42m1 0h9m11 0h14m2 0h4m2 0h21m-163 1h3m4 0h1m2 0h2m7 0h16m4 0h10m5 0h14m2 0h18m2 0h19m9 0h1m2 0h13m2 0h4m2 0h5m2 0h14m-166 1h1m2 0h2m5 0h1m2 0h2m7 0h16m6 0h7m5 0h14m2 0h1m3 0h15m2 0h8m1 0h10m9 0h2m1 0h18m3 0h5m2 0h9m-161 1h5m4 0h7m6 0h15m7 0h4m8 0h11m1 0h5m4 0h23m2 0h11m2 0h3m3 0h7m1 0h33m-162 1h5m3 0h7m2 0h1m4 0h6m1 0h11m4 0h4m9 0h9m2 0h6m2 0h25m1 0h11m3 0h2m3 0h6m1 0h34m-162 1h6m2 0h7m2 0h2m4 0h5m1 0h6m1 0h4m4 0h6m8 0h8m1 0h7m2 0h4m3 0h31m2 0h2m3 0h5m2 0h35m-163 1h7m2 0h5m1 0h8m1 0h4m2 0h5m1 0h15m3 0h1m4 0h7m1 0h13m1 0h38m3 0h5m1 0h7m3 0h25m25 0h2m19 0h1m17 0h2m4 0h1m-234 1h8m1 0h5m1 0h3m1 0h3m8 0h21m3 0h1m4 0h7m1 0h52m3 0h13m3 0h2m2 0h3m1 0h15m27 0h1m20 0h1m17 0h3m2 0h2m-234 1h18m11 0h3m1 0h7m2 0h8m4 0h1m3 0h7m5 0h42m1 0h7m2 0h14m2 0h2m6 0h15m48 0h2m17 0h3m-231 1h19m4 0h2m4 0h2m2 0h7m3 0h6m5 0h11m1 0h1m4 0h40m2 0h5m1 0h1m2 0h18m5 0h12m52 0h4m15 0h3m-231 1h7m4 0h7m3 0h5m8 0h4m5 0h2m10 0h5m3 0h1m7 0h7m3 0h32m2 0h10m1 0h14m5 0h6m4 0h2m52 0h3m16 0h3m-231 1h7m3 0h7m3 0h6m8 0h4m6 0h1m11 0h9m6 0h7m5 0h32m2 0h6m6 0h14m13 0h1m58 0h2m11 0h2m-230 1h18m2 0h5m3 0h2m1 0h7m20 0h18m6 0h2m2 0h30m2 0h3m10 0h12m71 0h3m4 0h2m5 0h1m-229 1h22m1 0h2m3 0h10m3 0h1m15 0h18m5 0h4m3 0h29m16 0h10m71 0h5m2 0h4m2 0h3m-229 1h22m1 0h2m3 0h5m8 0h1m15 0h17m6 0h5m2 0h29m16 0h9m13 0h2m57 0h5m3 0h9m-230 1h25m3 0h2m26 0h4m2 0h5m1 0h6m6 0h6m2 0h32m2 0h2m5 0h1m2 0h2m2 0h5m10 0h4m59 0h3m5 0h5m-226 1h24m2 0h3m26 0h4m3 0h2m4 0h7m4 0h45m4 0h1m2 0h2m2 0h6m9 0h1m71 0h3m-226 1h30m26 0h7m6 0h9m4 0h44m2 0h2m2 0h10m81 0h2m-225 1h31m25 0h8m2 0h3m4 0h6m4 0h39m2 0h6m2 0h10m26 0h2m52 0h2m-224 1h31m14 0h1m8 0h10m1 0h5m5 0h4m3 0h40m3 0h2m6 0h9m-142 1h30m15 0h1m6 0h14m15 0h41m12 0h6m51 0h1m23 0h1m10 0h1m-227 1h4m1 0h24m17 0h3m3 0h13m4 0h1m12 0h11m1 0h27m11 0h8m50 0h4m1 0h1m29 0h2m-227 1h2m3 0h5m1 0h18m11 0h4m2 0h3m4 0h12m4 0h1m13 0h9m2 0h15m1 0h8m14 0h10m10 0h2m36 0h4m31 0h2m-227 1h1m5 0h22m12 0h9m2 0h1m1 0h13m17 0h7m4 0h15m2 0h6m15 0h1m2 0h7m10 0h2m24 0h1m11 0h4m32 0h1m-227 1h1m6 0h6m4 0h8m7 0h1m3 0h2m2 0h13m1 0h7m2 0h7m13 0h4m6 0h16m3 0h2m21 0h4m13 0h2m20 0h6m10 0h4m4 0h2m7 0h1m-208 1h1m6 0h6m10 0h2m12 0h1m1 0h3m2 0h9m2 0h7m2 0h7m13 0h5m4 0h2m2 0h12m23 0h7m35 0h2m1 0h6m7 0h1m1 0h2m5 0h1m7 0h1m19 0h1m-228 1h1m7 0h5m4 0h1m19 0h1m1 0h1m4 0h9m1 0h18m15 0h3m8 0h5m3 0h3m7 0h2m13 0h11m21 0h6m8 0h7m9 0h2m-188 1h6m4 0h2m5 0h1m6 0h3m3 0h3m4 0h20m1 0h6m16 0h3m8 0h5m4 0h2m8 0h4m9 0h12m20 0h9m4 0h5m2 0h2m-179 1h10m1 0h4m2 0h3m6 0h3m3 0h3m4 0h19m2 0h3m20 0h2m4 0h10m4 0h1m10 0h3m8 0h3m2 0h8m6 0h1m13 0h9m3 0h4m54 0h1m-234 1h1m3 0h5m1 0h16m5 0h10m4 0h18m31 0h5m2 0h4m19 0h1m4 0h4m2 0h9m5 0h1m14 0h3m8 0h4m-179 1h1m2 0h5m2 0h16m5 0h9m5 0h17m16 0h1m14 0h6m3 0h3m16 0h5m2 0h8m3 0h7m2 0h2m26 0h3m23 0h2m-201 1h6m2 0h6m2 0h7m4 0h9m7 0h12m20 0h2m13 0h1m1 0h5m1 0h6m3 0h2m9 0h4m2 0h9m3 0h6m4 0h1m5 0h2m7 0h1m11 0h2m17 0h1m6 0h3m-202 1h7m3 0h13m2 0h9m11 0h4m2 0h3m21 0h2m7 0h1m7 0h13m1 0h4m9 0h2m3 0h7m4 0h7m10 0h2m6 0h2m7 0h6m16 0h3m6 0h3m-206 1h10m3 0h24m6 0h2m2 0h5m4 0h3m5 0h2m11 0h4m6 0h1m8 0h20m10 0h7m4 0h8m4 0h1m6 0h1m6 0h3m4 0h6m17 0h3m-196 1h10m4 0h21m8 0h9m3 0h5m1 0h6m7 0h8m13 0h21m9 0h8m3 0h11m14 0h5m3 0h5m19 0h3m-196 1h11m3 0h2m3 0h16m2 0h1m5 0h8m4 0h5m1 0h6m5 0h10m12 0h12m2 0h4m1 0h2m12 0h6m4 0h11m12 0h5m4 0h5m20 0h2m-196 1h10m9 0h16m8 0h8m2 0h2m1 0h11m5 0h11m8 0h2m2 0h11m3 0h3m1 0h4m4 0h1m5 0h6m5 0h14m7 0h5m5 0h1m2 0h3m-175 1h3m1 0h5m9 0h17m9 0h7m2 0h13m6 0h3m1 0h2m2 0h4m7 0h1m4 0h10m4 0h7m2 0h4m4 0h7m4 0h15m5 0h7m8 0h2m5 0h2m23 0h2m-206 1h2m1 0h5m12 0h14m2 0h2m9 0h11m1 0h6m6 0h6m3 0h4m12 0h4m1 0h4m6 0h4m3 0h5m3 0h7m4 0h16m2 0h4m1 0h4m9 0h1m5 0h2m3 0h2m18 0h3m-206 1h1m3 0h3m13 0h13m1 0h9m5 0h9m1 0h5m7 0h6m4 0h2m3 0h1m9 0h4m2 0h6m2 0h5m3 0h11m1 0h3m5 0h14m4 0h2m3 0h4m14 0h3m1 0h4m17 0h2m-206 1h2m5 0h1m13 0h23m6 0h13m2 0h2m5 0h5m3 0h3m3 0h14m2 0h7m1 0h5m3 0h10m1 0h5m4 0h14m10 0h8m11 0h7m-188 1h2m18 0h26m3 0h18m2 0h1m4 0h3m3 0h4m2 0h14m4 0h4m11 0h9m1 0h5m6 0h11m11 0h1m2 0h4m13 0h6m-188 1h4m16 0h26m2 0h11m1 0h18m3 0h4m1 0h11m2 0h2m18 0h8m2 0h5m9 0h2m3 0h2m15 0h4m2 0h2m9 0h6m-186 1h3m10 0h5m1 0h10m1 0h2m2 0h10m2 0h11m3 0h17m2 0h4m4 0h1m1 0h6m1 0h3m17 0h10m1 0h5m2 0h2m4 0h3m2 0h3m15 0h9m8 0h7m1 0h3m7 0h2m-199 1h1m10 0h16m6 0h7m5 0h5m2 0h4m5 0h6m2 0h4m1 0h6m6 0h10m19 0h9m1 0h5m3 0h3m3 0h3m4 0h1m15 0h9m6 0h9m1 0h3m7 0h3m4 0h2m-210 1h5m10 0h29m4 0h6m1 0h5m6 0h5m1 0h5m2 0h5m2 0h14m5 0h1m14 0h7m2 0h5m2 0h5m2 0h2m10 0h6m5 0h1m13 0h10m3 0h2m6 0h2m5 0h3m-211 1h4m13 0h12m1 0h15m3 0h11m7 0h4m2 0h5m3 0h16m2 0h2m4 0h2m17 0h5m1 0h5m2 0h5m12 0h4m1 0h3m5 0h1m12 0h6m2 0h3m3 0h4m2 0h5m4 0h2m23 0h1m-232 1h2m17 0h8m1 0h16m1 0h7m1 0h3m3 0h4m1 0h4m2 0h2m7 0h15m2 0h2m3 0h5m14 0h1m1 0h10m2 0h5m11 0h5m1 0h4m13 0h2m6 0h2m3 0h1m4 0h12m7 0h1m4 0h5m10 0h2m-234 1h4m17 0h8m2 0h23m1 0h2m4 0h4m1 0h8m8 0h4m2 0h8m7 0h5m3 0h3m6 0h15m1 0h5m10 0h12m4 0h1m7 0h2m6 0h1m8 0h13m6 0h12m8 0h3m-234 1h4m18 0h1m3 0h4m1 0h25m6 0h3m1 0h9m2 0h2m3 0h4m1 0h8m7 0h6m3 0h4m2 0h18m3 0h3m6 0h15m3 0h6m2 0h10m8 0h3m1 0h10m6 0h12m2 0h9m-234 1h2m13 0h3m8 0h3m2 0h16m1 0h11m3 0h34m4 0h2m5 0h2m3 0h23m5 0h1m6 0h15m2 0h12m3 0h4m9 0h2m2 0h1m1 0h8m5 0h21m1 0h1m-234 1h1m11 0h17m2 0h10m2 0h13m1 0h2m6 0h31m3 0h3m5 0h2m4 0h23m11 0h10m2 0h3m2 0h11m4 0h3m17 0h4m1 0h3m3 0h22m1 0h1m-234 1h3m9 0h18m1 0h10m3 0h10m12 0h30m2 0h2m1 0h2m5 0h2m3 0h16m2 0h1m1 0h3m2 0h1m8 0h10m3 0h1m2 0h6m3 0h2m8 0h4m13 0h4m2 0h18m1 0h10m-234 1h3m9 0h37m1 0h4m12 0h9m2 0h18m7 0h1m4 0h9m3 0h10m7 0h4m7 0h11m1 0h3m1 0h4m5 0h1m8 0h5m13 0h4m3 0h28m-234 1h2m3 0h1m6 0h27m1 0h9m2 0h4m7 0h8m8 0h16m6 0h4m3 0h8m4 0h10m6 0h4m10 0h13m2 0h2m5 0h3m6 0h6m15 0h2m3 0h6m1 0h21m-229 1h2m1 0h2m4 0h15m1 0h3m2 0h3m2 0h16m5 0h20m2 0h11m5 0h5m3 0h7m5 0h11m4 0h6m3 0h3m2 0h15m6 0h5m4 0h9m15 0h2m2 0h19m2 0h7m-227 1h3m4 0h4m3 0h11m3 0h3m6 0h12m5 0h44m2 0h5m6 0h12m3 0h6m3 0h24m2 0h7m2 0h9m15 0h4m1 0h2m1 0h10m3 0h3m2 0h1m1 0h5m-227 1h1m1 0h1m3 0h4m1 0h15m2 0h3m7 0h13m3 0h6m2 0h44m5 0h11m3 0h7m3 0h4m1 0h5m2 0h7m3 0h2m3 0h6m1 0h9m16 0h5m3 0h2m2 0h5m4 0h4m3 0h5m-228 1h1m6 0h2m2 0h21m7 0h6m1 0h4m6 0h6m1 0h30m1 0h2m2 0h2m2 0h6m5 0h9m5 0h3m12 0h3m6 0h3m4 0h3m2 0h16m16 0h5m3 0h2m10 0h5m2 0h6m-217 1h14m1 0h5m8 0h5m4 0h2m7 0h39m7 0h8m7 0h3m9 0h1m10 0h4m4 0h6m3 0h2m3 0h7m1 0h7m17 0h5m2 0h6m3 0h8m3 0h6m-234 1h1m16 0h14m2 0h1m3 0h2m1 0h3m1 0h5m5 0h4m4 0h39m7 0h4m3 0h2m8 0h2m4 0h1m3 0h3m11 0h1m8 0h3m8 0h16m6 0h2m7 0h6m1 0h8m2 0h8m3 0h6m-225 1h5m3 0h13m6 0h7m2 0h4m4 0h5m2 0h42m6 0h4m17 0h4m2 0h4m11 0h1m7 0h5m5 0h20m2 0h3m9 0h12m3 0h8m2 0h3m3 0h1m-226 1h1m3 0h3m3 0h11m6 0h8m3 0h4m3 0h6m1 0h34m2 0h1m3 0h2m7 0h2m18 0h4m3 0h5m3 0h3m3 0h1m6 0h35m10 0h6m1 0h4m4 0h12m-222 1h2m4 0h2m4 0h9m6 0h5m7 0h46m37 0h5m4 0h2m2 0h5m2 0h2m4 0h36m11 0h5m1 0h3m7 0h11m-223 1h3m12 0h9m7 0h3m6 0h10m3 0h30m29 0h2m9 0h10m3 0h10m1 0h3m2 0h13m1 0h20m10 0h4m2 0h2m9 0h10m4 0h1m-232 1h2m2 0h4m11 0h11m4 0h4m3 0h13m2 0h5m2 0h15m1 0h7m26 0h7m1 0h3m5 0h10m1 0h51m11 0h2m3 0h2m4 0h1m5 0h4m1 0h5m2 0h2m-232 1h2m3 0h3m11 0h42m3 0h14m2 0h6m25 0h4m4 0h2m7 0h36m2 0h25m3 0h3m5 0h1m2 0h4m7 0h6m4 0h3m2 0h1m-232 1h3m3 0h2m10 0h43m3 0h15m1 0h6m24 0h5m4 0h1m8 0h36m2 0h6m2 0h3m3 0h16m6 0h1m3 0h4m5 0h3m2 0h2m5 0h2m-228 1h3m2 0h2m6 0h1m2 0h45m1 0h24m23 0h5m3 0h2m8 0h5m3 0h7m1 0h8m1 0h5m1 0h13m8 0h16m11 0h2m3 0h5m10 0h3m-229 1h4m2 0h1m6 0h1m3 0h68m24 0h4m4 0h2m3 0h1m4 0h5m3 0h18m5 0h8m3 0h2m8 0h15m7 0h2m2 0h3m3 0h4m9 0h7m-230 1h2m15 0h64m27 0h2m6 0h1m4 0h2m3 0h5m1 0h20m4 0h9m3 0h2m2 0h21m6 0h4m1 0h4m3 0h2m10 0h7m-223 1h2m8 0h64m34 0h2m4 0h2m2 0h29m1 0h11m2 0h25m6 0h3m2 0h1m2 0h2m2 0h2m10 0h7m-225 1h5m1 0h1m4 0h41m2 0h22m35 0h1m4 0h38m1 0h33m7 0h5m2 0h3m13 0h7m-224 1h50m4 0h10m3 0h9m1 0h3m18 0h2m15 0h1m1 0h36m1 0h33m7 0h5m1 0h5m3 0h1m8 0h7m-223 1h49m4 0h10m4 0h3m1 0h8m9 0h2m27 0h2m1 0h21m1 0h11m1 0h7m3 0h22m2 0h1m4 0h5m1 0h5m3 0h1m3 0h3m3 0h6m-222 1h53m1 0h6m3 0h2m1 0h2m3 0h7m27 0h3m8 0h1m3 0h19m2 0h11m1 0h5m5 0h4m2 0h16m2 0h10m2 0h2m5 0h2m1 0h4m4 0h4m-219 1h51m2 0h4m13 0h6m23 0h5m9 0h3m2 0h36m7 0h3m3 0h2m2 0h3m1 0h9m2 0h13m2 0h5m1 0h4m5 0h3m-218 1h50m2 0h2m3 0h1m3 0h3m7 0h6m17 0h2m2 0h4m9 0h4m1 0h24m1 0h6m2 0h4m7 0h2m4 0h2m2 0h1m4 0h9m5 0h14m2 0h4m7 0h3m-234 1h2m5 0h1m7 0h4m1 0h9m2 0h19m1 0h15m1 0h2m3 0h2m2 0h3m8 0h5m18 0h1m1 0h5m9 0h36m3 0h3m8 0h1m5 0h3m6 0h9m4 0h14m3 0h3m7 0h3m-234 1h4m3 0h2m5 0h5m3 0h8m1 0h12m3 0h10m1 0h12m3 0h2m1 0h4m8 0h6m17 0h7m9 0h35m4 0h3m7 0h2m6 0h1m8 0h8m5 0h19m7 0h3m-234 1h9m5 0h4m4 0h14m3 0h4m3 0h10m1 0h12m8 0h3m10 0h3m11 0h1m5 0h2m3 0h2m5 0h39m4 0h2m8 0h2m3 0h1m1 0h2m8 0h8m5 0h23m3 0h3m-234 1h9m4 0h2m1 0h1m9 0h10m4 0h3m3 0h23m9 0h1m7 0h1m3 0h3m11 0h1m3 0h3m10 0h24m5 0h8m2 0h1m14 0h10m7 0h8m3 0h24m3 0h4m-234 1h9m4 0h1m13 0h9m6 0h19m5 0h3m16 0h4m1 0h2m11 0h2m2 0h4m10 0h24m1 0h11m4 0h2m6 0h4m1 0h11m7 0h7m6 0h23m1 0h3m1 0h1m-234 1h9m4 0h1m2 0h3m9 0h12m2 0h15m1 0h3m6 0h2m16 0h5m17 0h3m11 0h24m1 0h12m3 0h5m4 0h15m2 0h2m3 0h7m7 0h19m1 0h6m-232 1h7m9 0h4m8 0h25m6 0h3m24 0h5m29 0h21m1 0h2m2 0h13m1 0h6m4 0h6m4 0h5m2 0h3m1 0h7m8 0h18m3 0h5m-232 1h9m5 0h6m9 0h24m34 0h4m28 0h16m1 0h5m5 0h20m4 0h5m4 0h1m1 0h4m3 0h6m2 0h2m6 0h20m3 0h4m-230 1h8m5 0h6m11 0h23m1 0h2m30 0h5m27 0h14m4 0h4m1 0h24m4 0h11m1 0h4m3 0h5m4 0h2m4 0h20m3 0h4m-231 1h9m5 0h6m5 0h5m1 0h20m2 0h4m14 0h1m14 0h6m27 0h14m3 0h4m3 0h14m2 0h4m8 0h18m1 0h4m4 0h3m4 0h5m1 0h13m4 0h3m-231 1h9m6 0h5m5 0h7m2 0h17m3 0h3m14 0h1m16 0h3m1 0h3m4 0h2m17 0h15m3 0h4m3 0h13m4 0h3m10 0h16m2 0h4m3 0h3m6 0h2m3 0h11m6 0h2m-231 1h9m6 0h3m7 0h6m4 0h16m3 0h2m24 0h3m7 0h5m6 0h5m10 0h17m4 0h2m4 0h13m4 0h3m1 0h6m2 0h16m4 0h4m1 0h3m14 0h6m-220 1h8m20 0h3m4 0h20m24 0h4m6 0h9m3 0h5m10 0h16m12 0h7m2 0h4m4 0h25m1 0h1m6 0h2m1 0h3m14 0h3m7 0h2m-226 1h2m2 0h3m21 0h3m4 0h12m1 0h8m25 0h2m3 0h1m3 0h8m3 0h4m12 0h15m13 0h6m2 0h35m6 0h5m16 0h1m7 0h3m-226 1h2m27 0h2m5 0h11m2 0h7m17 0h1m11 0h2m4 0h6m4 0h4m12 0h16m13 0h41m7 0h5m23 0h4m-226 1h5m2 0h2m10 0h1m17 0h10m4 0h5m28 0h4m4 0h5m20 0h17m14 0h13m3 0h22m8 0h2m18 0h1m6 0h4m-225 1h5m2 0h3m8 0h2m17 0h10m37 0h4m4 0h6m1 0h1m14 0h15m1 0h4m11 0h17m2 0h3m3 0h17m7 0h2m2 0h1m15 0h1m6 0h4m6 0h2m-233 1h5m3 0h1m19 0h3m6 0h9m7 0h1m31 0h4m2 0h10m12 0h7m4 0h3m4 0h2m12 0h22m4 0h20m4 0h5m17 0h1m3 0h4m6 0h2m-232 1h3m23 0h4m7 0h12m2 0h2m31 0h8m5 0h2m12 0h8m25 0h22m4 0h20m5 0h4m7 0h2m8 0h2m3 0h3m-224 1h3m24 0h6m6 0h11m35 0h8m4 0h1m13 0h8m24 0h12m3 0h9m3 0h19m5 0h4m9 0h2m7 0h2m4 0h1m2 0h3m-227 1h2m24 0h6m6 0h11m35 0h14m12 0h8m24 0h13m3 0h5m2 0h2m2 0h19m5 0h4m9 0h2m16 0h3m-217 1h1m17 0h1m6 0h8m2 0h3m35 0h16m10 0h4m2 0h3m1 0h7m16 0h20m3 0h2m5 0h16m5 0h4m2 0h4m3 0h2m17 0h7m-231 1h3m5 0h2m11 0h1m11 0h9m2 0h2m37 0h16m9 0h4m2 0h3m1 0h7m9 0h5m2 0h20m4 0h1m5 0h11m2 0h2m5 0h11m22 0h7m-232 1h4m5 0h1m12 0h2m4 0h1m4 0h11m2 0h1m41 0h11m7 0h1m3 0h8m2 0h6m9 0h6m2 0h20m10 0h2m3 0h5m8 0h2m4 0h3m1 0h2m24 0h4m-232 1h5m11 0h5m2 0h2m4 0h1m4 0h12m1 0h1m42 0h5m9 0h4m3 0h3m1 0h12m10 0h5m1 0h3m1 0h18m13 0h6m4 0h5m3 0h4m28 0h3m-232 1h7m4 0h3m3 0h6m6 0h2m4 0h14m57 0h3m3 0h2m2 0h7m1 0h4m10 0h28m4 0h1m7 0h16m3 0h2m-199 1h2m3 0h9m6 0h3m4 0h13m1 0h5m1 0h2m17 0h2m40 0h1m4 0h15m10 0h27m3 0h3m6 0h12m1 0h2m4 0h3m-194 1h10m5 0h5m3 0h11m3 0h3m3 0h1m59 0h2m3 0h15m2 0h2m4 0h24m1 0h4m2 0h4m4 0h1m3 0h5m1 0h3m2 0h2m4 0h4m3 0h2m21 0h2m-223 1h10m6 0h5m4 0h4m9 0h2m45 0h2m3 0h3m10 0h9m1 0h8m1 0h1m1 0h4m3 0h25m1 0h10m2 0h1m5 0h3m3 0h2m2 0h2m3 0h5m3 0h2m3 0h1m17 0h3m-229 1h3m2 0h10m7 0h4m4 0h2m11 0h3m44 0h8m10 0h8m6 0h3m5 0h3m3 0h36m8 0h2m13 0h8m5 0h3m-211 1h3m5 0h8m5 0h2m7 0h2m12 0h2m29 0h1m15 0h8m2 0h1m6 0h4m1 0h4m13 0h3m3 0h33m21 0h13m5 0h3m-211 1h3m5 0h9m4 0h2m22 0h1m27 0h3m1 0h2m10 0h2m1 0h11m6 0h2m3 0h3m19 0h30m24 0h4m2 0h7m25 0h3m-231 1h5m2 0h10m56 0h3m1 0h2m10 0h2m2 0h10m7 0h1m3 0h2m4 0h6m10 0h30m3 0h2m8 0h2m10 0h2m3 0h8m14 0h1m9 0h2m-230 1h12m2 0h2m44 0h1m12 0h3m1 0h2m10 0h3m2 0h2m2 0h5m7 0h1m3 0h2m4 0h6m7 0h9m1 0h24m1 0h3m7 0h3m6 0h1m8 0h7m14 0h3m8 0h1m-229 1h12m15 0h2m7 0h3m20 0h3m12 0h5m2 0h2m7 0h2m2 0h1m4 0h3m8 0h1m3 0h2m4 0h5m8 0h38m8 0h1m4 0h5m7 0h6m4 0h3m2 0h2m4 0h4m-221 1h14m12 0h6m3 0h5m4 0h1m14 0h3m14 0h3m2 0h4m15 0h1m9 0h1m2 0h4m5 0h2m9 0h6m2 0h22m4 0h4m13 0h7m5 0h3m1 0h21m10 0h2m-233 1h11m15 0h7m2 0h6m3 0h2m11 0h4m3 0h4m9 0h1m4 0h3m17 0h3m1 0h2m2 0h1m2 0h5m16 0h5m3 0h21m4 0h4m14 0h8m1 0h27m10 0h2m-233 1h6m2 0h3m15 0h3m2 0h2m1 0h7m3 0h2m11 0h3m3 0h6m2 0h1m9 0h3m17 0h7m5 0h5m10 0h2m5 0h3m4 0h22m20 0h2m2 0h6m2 0h21m1 0h3m6 0h2m1 0h3m-233 1h5m14 0h1m6 0h1m4 0h2m1 0h7m16 0h2m4 0h7m1 0h2m8 0h3m17 0h7m5 0h4m11 0h2m5 0h1m5 0h25m17 0h11m3 0h20m1 0h5m4 0h5m-232 1h4m23 0h1m2 0h3m2 0h6m21 0h12m6 0h4m16 0h8m5 0h4m11 0h2m11 0h22m2 0h2m12 0h2m1 0h13m2 0h18m3 0h6m5 0h4m-232 1h2m24 0h4m5 0h6m20 0h5m3 0h3m6 0h7m3 0h4m7 0h1m3 0h3m6 0h5m6 0h1m3 0h2m9 0h24m15 0h18m2 0h17m3 0h8m3 0h4m-226 1h2m13 0h3m12 0h5m20 0h4m4 0h3m5 0h9m1 0h5m11 0h2m3 0h2m2 0h5m6 0h1m13 0h25m15 0h4m1 0h14m5 0h11m2 0h12m1 0h3m-231 1h3m3 0h2m14 0h3m36 0h3m1 0h1m5 0h1m4 0h5m2 0h9m13 0h1m3 0h10m17 0h28m14 0h4m1 0h14m5 0h11m2 0h3m3 0h5m2 0h2m-230 1h4m58 0h1m2 0h2m9 0h4m3 0h8m14 0h1m2 0h11m17 0h29m13 0h4m1 0h14m5 0h16m3 0h5m2 0h2m-230 1h3m37 0h2m22 0h3m16 0h4m13 0h1m3 0h2m2 0h11m12 0h1m4 0h21m1 0h9m15 0h24m3 0h9m3 0h5m2 0h3m-231 1h3m4 0h1m25 0h2m29 0h2m15 0h7m17 0h1m2 0h4m1 0h6m4 0h3m3 0h4m2 0h21m5 0h6m15 0h4m3 0h1m1 0h15m2 0h10m3 0h6m1 0h4m-232 1h3m3 0h3m23 0h5m6 0h3m19 0h1m9 0h13m18 0h6m1 0h6m3 0h2m2 0h7m1 0h11m1 0h11m5 0h4m16 0h4m7 0h13m2 0h12m1 0h11m-230 1h1m2 0h4m23 0h9m2 0h3m29 0h11m21 0h5m2 0h4m2 0h3m4 0h7m1 0h8m3 0h14m24 0h2m10 0h1m3 0h32m-231 1h7m10 0h1m13 0h9m3 0h2m30 0h9m22 0h16m3 0h7m3 0h7m4 0h15m21 0h4m2 0h2m5 0h1m4 0h30m2 0h1m-233 1h6m10 0h3m13 0h8m37 0h1m3 0h3m22 0h16m2 0h8m4 0h7m1 0h9m1 0h7m21 0h4m2 0h2m10 0h19m2 0h9m2 0h1m-234 1h8m10 0h2m14 0h7m32 0h1m9 0h2m22 0h15m3 0h5m3 0h1m3 0h28m13 0h1m4 0h4m13 0h21m1 0h9m-231 1h5m1 0h2m12 0h1m7 0h3m2 0h2m2 0h4m31 0h2m9 0h2m22 0h14m4 0h4m4 0h2m2 0h21m3 0h4m18 0h3m12 0h7m2 0h23m-230 1h4m16 0h2m5 0h7m4 0h4m8 0h1m21 0h2m9 0h2m22 0h3m4 0h2m1 0h6m3 0h4m2 0h7m1 0h16m5 0h4m7 0h1m10 0h2m12 0h8m2 0h21m-226 1h1m17 0h2m8 0h4m3 0h5m7 0h4m15 0h2m4 0h5m28 0h2m5 0h2m2 0h6m3 0h3m3 0h3m4 0h14m8 0h3m7 0h1m9 0h4m13 0h6m3 0h6m2 0h12m-216 1h1m7 0h2m11 0h1m3 0h7m4 0h3m17 0h4m2 0h5m28 0h2m4 0h3m3 0h6m1 0h4m10 0h12m28 0h8m12 0h4m2 0h2m2 0h4m3 0h12m-210 1h2m13 0h11m23 0h4m3 0h3m2 0h1m26 0h2m3 0h3m5 0h10m10 0h7m33 0h7m13 0h3m3 0h3m3 0h2m5 0h3m2 0h6m3 0h1m-234 1h1m5 0h2m11 0h2m19 0h5m20 0h3m8 0h1m3 0h1m31 0h2m5 0h2m2 0h7m12 0h5m9 0h1m17 0h2m6 0h4m14 0h3m3 0h3m16 0h5m3 0h1m-235 1h3m4 0h1m9 0h5m9 0h3m8 0h5m19 0h3m7 0h1m30 0h1m3 0h3m4 0h5m3 0h3m15 0h4m18 0h1m7 0h4m23 0h3m2 0h3m17 0h4m3 0h2m-235 1h3m10 0h4m2 0h6m3 0h9m7 0h2m10 0h1m9 0h2m32 0h2m9 0h3m4 0h5m4 0h2m15 0h4m1 0h1m24 0h4m5 0h1m11 0h2m5 0h7m19 0h1m4 0h2m-236 1h3m18 0h17m18 0h3m11 0h5m25 0h4m16 0h3m1 0h2m1 0h3m16 0h9m20 0h3m5 0h3m5 0h2m3 0h2m5 0h7m24 0h2m-237 1h3m19 0h17m12 0h2m1 0h3m2 0h2m10 0h5m25 0h4m16 0h2m2 0h6m17 0h9m19 0h3m4 0h4m5 0h2m7 0h9m2 0h3m20 0h2m-237 1h2m3 0h4m13 0h18m1 0h2m8 0h2m2 0h2m9 0h3m2 0h2m2 0h2m24 0h4m14 0h4m3 0h2m15 0h2m3 0h9m4 0h2m19 0h5m14 0h14m5 0h2m14 0h1m-238 1h1m1 0h8m13 0h10m2 0h5m2 0h2m13 0h1m4 0h8m6 0h2m28 0h1m12 0h4m11 0h1m9 0h2m2 0h2m4 0h2m5 0h2m19 0h8m9 0h2m4 0h11m20 0h2m-239 1h10m13 0h6m2 0h3m2 0h4m3 0h2m12 0h3m4 0h3m2 0h3m35 0h3m9 0h4m12 0h2m8 0h2m2 0h2m5 0h1m5 0h1m19 0h9m4 0h3m2 0h2m4 0h11m-217 1h9m23 0h2m3 0h3m18 0h1m5 0h3m3 0h2m36 0h2m9 0h4m22 0h2m2 0h2m26 0h7m3 0h5m1 0h1m1 0h3m9 0h6m20 0h1m-233 1h3m3 0h2m4 0h1m4 0h1m5 0h1m13 0h2m24 0h3m18 0h1m15 0h5m14 0h2m6 0h1m20 0h2m2 0h2m23 0h5m5 0h3m2 0h1m1 0h3m9 0h6m19 0h3m-233 1h1m6 0h6m6 0h5m32 0h3m40 0h5m20 0h4m19 0h6m39 0h4m3 0h3m4 0h4m22 0h1m-236 1h2m9 0h4m7 0h5m1 0h4m27 0h3m7 0h2m55 0h5m21 0h4m8 0h1m17 0h1m7 0h1m3 0h4m3 0h5m3 0h3m-213 1h2m10 0h3m14 0h5m19 0h2m6 0h1m48 0h1m17 0h3m23 0h2m9 0h1m15 0h5m4 0h2m3 0h4m3 0h4m25 0h1m-232 1h2m10 0h2m4 0h3m8 0h5m45 0h5m26 0h1m69 0h7m9 0h1m6 0h2m-206 1h5m9 0h1m5 0h3m7 0h2m1 0h3m27 0h2m13 0h9m2 0h2m90 0h5m-183 1h2m15 0h5m8 0h3m27 0h2m12 0h13m61 0h2m27 0h4m57 0h1m-242 1h5m15 0h6m7 0h2m31 0h3m4 0h9m2 0h6m2 0h6m21 0h1m31 0h1m28 0h3m55 0h4m-242 1h6m15 0h5m7 0h2m8 0h2m21 0h3m4 0h10m9 0h7m20 0h1m61 0h2m55 0h4m-242 1h6m17 0h7m13 0h5m25 0h10m2 0h1m5 0h8m1 0h2m73 0h2m4 0h3m54 0h4m-242 1h2m2 0h2m17 0h7m12 0h7m8 0h1m14 0h15m4 0h4m5 0h2m53 0h3m2 0h3m3 0h2m7 0h2m3 0h4m20 0h1m28 0h9m-243 1h3m2 0h3m35 0h7m8 0h1m10 0h1m3 0h22m45 0h1m15 0h3m2 0h3m3 0h2m8 0h8m20 0h1m24 0h2m2 0h8m-242 1h4m1 0h3m18 0h2m4 0h1m4 0h2m2 0h9m19 0h25m47 0h4m7 0h6m3 0h3m3 0h3m9 0h2m2 0h3m44 0h2m5 0h3m-240 1h6m17 0h5m3 0h18m13 0h1m4 0h26m38 0h2m8 0h2m9 0h5m3 0h3m17 0h1m2 0h3m44 0h3m6 0h1m-240 1h5m18 0h5m3 0h18m12 0h2m3 0h27m38 0h2m19 0h5m26 0h2m3 0h1m11 0h1m30 0h2m-233 1h5m17 0h6m3 0h5m1 0h12m11 0h4m6 0h22m40 0h1m19 0h4m13 0h2m12 0h1m48 0h2m-234 1h5m7 0h3m5 0h8m3 0h12m5 0h1m6 0h3m2 0h4m5 0h23m24 0h1m16 0h4m15 0h3m8 0h1m5 0h3m60 0h5m2 0h4m-243 1h4m8 0h3m4 0h9m2 0h8m1 0h3m6 0h1m6 0h3m2 0h4m5 0h25m19 0h5m15 0h4m15 0h2m9 0h1m6 0h2m61 0h3m3 0h4m-243 1h4m14 0h10m3 0h7m17 0h2m4 0h3m4 0h27m18 0h4m17 0h2m15 0h2m11 0h1m5 0h2m62 0h1m5 0h2m-243 1h3m5 0h2m9 0h9m4 0h2m4 0h1m6 0h2m16 0h2m3 0h28m18 0h4m21 0h2m10 0h2m12 0h1m3 0h3m31 0h3m-206 1h2m7 0h1m5 0h5m2 0h7m1 0h4m11 0h2m16 0h3m2 0h29m1 0h2m8 0h1m5 0h2m7 0h1m9 0h1m3 0h5m9 0h2m16 0h3m13 0h2m16 0h2m22 0h2m13 0h1m-238 1h2m7 0h5m4 0h6m1 0h5m25 0h1m2 0h38m7 0h4m21 0h1m2 0h5m28 0h3m13 0h2m40 0h3m8 0h6m-239 1h3m6 0h1m1 0h2m7 0h4m1 0h5m22 0h34m2 0h3m2 0h6m3 0h5m21 0h7m29 0h3m13 0h1m25 0h1m15 0h4m7 0h6m-239 1h2m11 0h4m4 0h3m2 0h3m22 0h35m3 0h2m2 0h14m1 0h3m17 0h7m3 0h2m23 0h5m36 0h4m14 0h4m7 0h6m-239 1h3m7 0h6m11 0h1m20 0h38m8 0h2m1 0h8m1 0h5m10 0h1m6 0h3m1 0h4m1 0h3m24 0h4m16 0h1m19 0h5m4 0h2m2 0h2m17 0h3m-239 1h3m6 0h7m31 0h39m8 0h2m1 0h7m2 0h5m7 0h5m5 0h2m2 0h4m1 0h3m5 0h2m17 0h4m15 0h3m18 0h6m3 0h2m1 0h3m18 0h2m-239 1h3m5 0h3m2 0h3m22 0h1m7 0h41m8 0h9m2 0h3m8 0h8m3 0h2m3 0h2m2 0h1m26 0h3m20 0h2m2 0h1m13 0h5m3 0h1m23 0h2m-240 1h6m3 0h2m4 0h2m32 0h5m3 0h33m6 0h9m2 0h2m9 0h2m14 0h3m24 0h2m3 0h1m21 0h3m1 0h3m12 0h3m27 0h3m-240 1h10m5 0h3m32 0h3m5 0h33m4 0h10m2 0h1m9 0h3m15 0h4m10 0h2m10 0h2m26 0h2m1 0h6m8 0h3m27 0h4m-240 1h9m6 0h3m28 0h1m4 0h2m6 0h5m1 0h25m5 0h9m2 0h3m26 0h6m9 0h1m10 0h1m27 0h2m1 0h2m1 0h3m7 0h4m27 0h4m-237 1h7m6 0h2m28 0h2m3 0h3m5 0h4m3 0h23m5 0h9m1 0h9m10 0h2m10 0h6m49 0h3m3 0h2m7 0h3m5 0h1m17 0h2m1 0h6m-239 1h1m1 0h7m12 0h2m14 0h2m11 0h4m4 0h4m4 0h2m1 0h19m5 0h14m1 0h4m10 0h2m10 0h5m21 0h5m9 0h2m13 0h4m12 0h2m3 0h4m8 0h1m7 0h9m-236 1h7m7 0h7m26 0h7m2 0h3m4 0h2m1 0h18m5 0h14m3 0h3m9 0h2m11 0h5m21 0h6m1 0h5m2 0h2m13 0h5m12 0h2m2 0h4m7 0h3m6 0h2m1 0h6m-235 1h5m8 0h3m20 0h3m7 0h12m4 0h20m6 0h1m3 0h11m3 0h4m4 0h4m12 0h4m24 0h4m2 0h5m2 0h2m12 0h11m6 0h2m13 0h3m9 0h6m-233 1h2m9 0h2m20 0h4m4 0h1m5 0h6m1 0h7m2 0h19m4 0h2m2 0h5m2 0h4m4 0h3m4 0h1m15 0h2m27 0h3m1 0h6m1 0h3m12 0h11m5 0h3m3 0h1m21 0h6m-223 1h2m22 0h3m11 0h2m4 0h4m1 0h3m1 0h19m4 0h2m1 0h5m3 0h7m2 0h2m12 0h2m6 0h1m30 0h7m2 0h3m12 0h10m6 0h3m3 0h1m20 0h7m-223 1h1m38 0h1m4 0h3m3 0h11m3 0h5m10 0h4m5 0h6m16 0h3m16 0h1m19 0h3m6 0h3m14 0h7m13 0h2m19 0h3m1 0h3m-180 1h3m4 0h3m2 0h6m2 0h5m11 0h3m6 0h6m11 0h2m4 0h1m16 0h2m5 0h1m10 0h1m3 0h1m5 0h5m8 0h2m24 0h2m17 0h1m6 0h2m-226 1h3m4 0h2m20 0h2m7 0h1m6 0h3m6 0h2m2 0h4m3 0h6m11 0h2m7 0h7m9 0h3m18 0h4m5 0h3m7 0h4m7 0h6m34 0h3m22 0h3m-226 1h4m3 0h2m7 0h2m12 0h1m6 0h1m7 0h4m8 0h3m6 0h8m8 0h2m7 0h1m3 0h4m3 0h1m4 0h3m19 0h3m4 0h4m7 0h4m4 0h9m2 0h3m30 0h3m20 0h4m-225 1h5m2 0h4m3 0h3m1 0h1m4 0h2m20 0h4m7 0h3m8 0h6m21 0h4m3 0h1m4 0h2m26 0h4m10 0h1m4 0h16m29 0h4m13 0h3m3 0h4m-226 1h7m1 0h1m6 0h2m2 0h2m3 0h2m21 0h4m17 0h6m22 0h5m1 0h1m5 0h1m27 0h2m15 0h17m30 0h2m14 0h4m2 0h3m-225 1h7m8 0h2m2 0h2m3 0h2m22 0h3m9 0h1m7 0h6m11 0h2m9 0h5m17 0h1m25 0h2m7 0h4m1 0h11m24 0h1m24 0h2m1 0h3m-224 1h1m1 0h3m15 0h1m4 0h1m14 0h2m7 0h2m10 0h3m3 0h7m8 0h6m8 0h4m19 0h1m15 0h2m7 0h2m1 0h2m4 0h9m2 0h4m7 0h3m15 0h1m27 0h3m-185 1h3m21 0h3m1 0h6m7 0h5m13 0h2m30 0h2m3 0h2m11 0h1m5 0h14m6 0h5m44 0h2m-234 1h2m7 0h5m27 0h1m6 0h2m22 0h6m3 0h1m7 0h4m15 0h2m29 0h3m1 0h3m19 0h5m1 0h6m6 0h5m24 0h1m13 0h1m5 0h2m-234 1h2m6 0h7m4 0h1m21 0h1m15 0h1m15 0h2m6 0h2m5 0h5m16 0h1m11 0h2m16 0h2m3 0h1m8 0h1m12 0h3m2 0h2m3 0h3m4 0h5m38 0h1m2 0h5m-234 1h2m6 0h7m41 0h3m22 0h2m3 0h3m1 0h3m26 0h4m3 0h1m12 0h2m31 0h1m3 0h3m7 0h1m42 0h5m-234 1h2m6 0h2m1 0h5m37 0h6m11 0h2m8 0h8m30 0h4m3 0h3m11 0h2m3 0h1m31 0h3m7 0h1m8 0h2m27 0h1m5 0h5m-235 1h2m6 0h2m2 0h5m35 0h7m11 0h2m8 0h8m29 0h5m3 0h5m13 0h2m28 0h7m4 0h6m3 0h2m34 0h6m-235 1h2m11 0h5m32 0h10m19 0h8m28 0h7m3 0h6m7 0h2m2 0h4m21 0h2m5 0h15m3 0h3m33 0h7m-222 1h5m31 0h11m7 0h2m2 0h2m7 0h6m3 0h1m25 0h4m1 0h3m2 0h5m7 0h9m4 0h2m15 0h2m5 0h15m3 0h3m34 0h6m-185 1h5m2 0h4m5 0h4m1 0h3m6 0h11m25 0h2m2 0h3m3 0h2m7 0h10m4 0h7m3 0h1m14 0h3m2 0h7m7 0h5m2 0h2m9 0h2m16 0h2m1 0h1m-232 1h2m46 0h4m5 0h3m1 0h2m2 0h10m4 0h11m26 0h4m13 0h9m4 0h9m3 0h1m13 0h4m2 0h7m3 0h1m5 0h3m2 0h4m24 0h3m-230 1h3m26 0h1m17 0h5m9 0h2m2 0h3m1 0h6m4 0h13m25 0h2m14 0h4m1 0h3m3 0h9m5 0h1m14 0h4m1 0h8m1 0h3m5 0h2m2 0h5m-204 1h3m25 0h2m17 0h5m9 0h3m2 0h2m2 0h5m4 0h13m26 0h1m5 0h1m7 0h10m2 0h8m5 0h2m16 0h2m2 0h11m9 0h5m-185 1h1m8 0h1m18 0h2m1 0h2m9 0h4m1 0h2m3 0h3m5 0h13m5 0h1m20 0h7m7 0h5m2 0h2m7 0h4m6 0h1m16 0h14m6 0h1m4 0h2m-193 1h3m5 0h3m30 0h1m9 0h4m2 0h2m2 0h5m2 0h2m1 0h12m21 0h1m4 0h8m8 0h3m2 0h2m1 0h2m5 0h3m23 0h9m3 0h3m4 0h2m-187 1h5m47 0h3m5 0h24m14 0h2m4 0h1m4 0h7m9 0h3m2 0h6m4 0h2m7 0h6m12 0h6m5 0h5m2 0h2m16 0h1m-201 1h2m8 0h3m21 0h1m21 0h25m2 0h3m8 0h4m10 0h4m10 0h11m5 0h2m6 0h7m22 0h9m12 0h2m2 0h1m-190 1h2m20 0h2m21 0h24m3 0h4m8 0h3m11 0h3m11 0h3m2 0h6m4 0h3m3 0h4m1 0h4m4 0h2m16 0h9m12 0h2m-184 1h2m17 0h2m6 0h2m13 0h14m1 0h4m2 0h3m3 0h4m10 0h2m10 0h3m12 0h2m2 0h14m2 0h4m2 0h4m4 0h1m9 0h2m6 0h10m10 0h1m2 0h1m-188 1h6m19 0h1m3 0h3m13 0h23m4 0h2m11 0h3m8 0h4m2 0h1m10 0h17m3 0h2m4 0h5m6 0h3m3 0h4m3 0h11m9 0h2m-209 1h3m9 0h1m12 0h5m22 0h3m13 0h24m5 0h2m10 0h2m9 0h4m2 0h1m10 0h7m3 0h8m8 0h5m7 0h23m8 0h3m-209 1h3m24 0h2m22 0h4m13 0h25m4 0h3m2 0h1m17 0h3m10 0h1m6 0h3m5 0h11m4 0h5m8 0h21m9 0h2m-140 1h5m2 0h13m1 0h16m15 0h2m7 0h1m2 0h2m14 0h10m2 0h5m1 0h3m7 0h5m1 0h14m-185 1h1m63 0h13m1 0h9m3 0h4m20 0h2m5 0h1m12 0h1m2 0h2m3 0h5m2 0h4m3 0h4m2 0h8m1 0h13m9 0h2m-200 1h1m3 0h2m62 0h23m5 0h3m20 0h3m14 0h4m7 0h3m4 0h5m1 0h11m2 0h9m1 0h4m9 0h3m-199 1h1m4 0h1m62 0h20m17 0h1m12 0h4m14 0h4m14 0h7m1 0h9m1 0h13m9 0h4m-185 1h1m43 0h2m9 0h20m28 0h5m15 0h3m1 0h4m10 0h8m4 0h3m3 0h12m9 0h3m-184 1h3m42 0h3m7 0h7m1 0h13m5 0h1m22 0h3m17 0h1m3 0h5m10 0h7m4 0h2m4 0h13m2 0h2m3 0h2m-204 1h1m4 0h2m13 0h5m42 0h3m6 0h7m2 0h13m5 0h3m19 0h4m15 0h11m10 0h7m3 0h2m4 0h9m-191 1h2m3 0h3m12 0h3m34 0h2m9 0h3m6 0h7m2 0h12m6 0h4m18 0h3m2 0h1m15 0h9m11 0h6m3 0h2m3 0h4m2 0h2m-189 1h2m4 0h2m11 0h3m3 0h1m23 0h1m6 0h5m6 0h4m7 0h20m4 0h7m17 0h2m19 0h9m20 0h2m3 0h5m-186 1h2m16 0h3m4 0h2m3 0h1m11 0h1m6 0h1m5 0h2m1 0h3m6 0h3m7 0h3m2 0h17m3 0h7m10 0h3m4 0h2m18 0h11m24 0h5m-186 1h2m27 0h3m10 0h1m6 0h2m27 0h2m4 0h16m3 0h5m11 0h3m3 0h3m4 0h1m12 0h13m25 0h3m-186 1h4m6 0h1m18 0h3m9 0h2m6 0h3m20 0h2m4 0h2m5 0h15m3 0h9m6 0h2m3 0h3m6 0h2m12 0h2m1 0h9m26 0h2m-184 1h2m6 0h1m18 0h2m6 0h1m3 0h2m5 0h8m16 0h2m11 0h15m3 0h3m2 0h5m6 0h1m13 0h1m12 0h1m3 0h8m26 0h2m-164 1h2m8 0h7m9 0h10m20 0h2m6 0h13m3 0h3m3 0h6m32 0h2m2 0h8m6 0h1m19 0h2m-183 1h4m14 0h4m7 0h9m6 0h12m4 0h2m13 0h2m6 0h13m2 0h3m5 0h6m5 0h1m9 0h1m21 0h5m1 0h2m3 0h3m3 0h2m6 0h3m-177 1h4m13 0h5m2 0h1m3 0h11m2 0h15m4 0h3m20 0h6m1 0h9m7 0h6m4 0h3m7 0h4m15 0h2m1 0h5m2 0h2m3 0h3m2 0h4m3 0h6m-179 1h5m13 0h3m7 0h28m3 0h5m21 0h5m2 0h9m9 0h2m5 0h3m7 0h5m13 0h9m8 0h1m4 0h3m4 0h4m-178 1h4m24 0h6m1 0h27m25 0h4m1 0h11m7 0h1m6 0h3m9 0h8m7 0h11m12 0h5m9 0h1m-185 1h2m1 0h2m27 0h8m2 0h22m7 0h1m18 0h18m2 0h3m4 0h4m11 0h9m5 0h3m2 0h7m12 0h6m7 0h2m-181 1h1m7 0h1m20 0h2m7 0h22m4 0h5m16 0h19m1 0h13m1 0h1m7 0h10m4 0h4m2 0h2m3 0h3m8 0h2m1 0h6m7 0h2m-181 1h1m37 0h23m4 0h6m3 0h2m7 0h19m4 0h13m8 0h1m2 0h8m1 0h5m8 0h4m11 0h9m-143 1h17m9 0h3m4 0h5m10 0h19m5 0h15m5 0h1m4 0h6m3 0h1m13 0h2m2 0h1m8 0h10m-180 1h2m35 0h8m3 0h2m13 0h2m5 0h3m12 0h14m2 0h1m6 0h16m5 0h1m3 0h7m17 0h2m2 0h2m7 0h10m-173 1h2m28 0h7m25 0h4m3 0h3m5 0h14m9 0h17m4 0h2m3 0h7m6 0h1m11 0h1m3 0h2m5 0h1m3 0h3m1 0h3m-173 1h2m19 0h1m8 0h7m5 0h1m4 0h3m11 0h5m3 0h4m4 0h5m2 0h6m10 0h5m1 0h11m3 0h3m2 0h8m6 0h1m15 0h3m13 0h3m-174 1h2m28 0h7m6 0h1m4 0h2m4 0h2m8 0h2m3 0h5m2 0h7m1 0h3m1 0h2m4 0h2m3 0h5m4 0h10m2 0h3m2 0h5m1 0h4m20 0h3m12 0h6m-192 1h1m15 0h1m10 0h1m22 0h3m17 0h5m6 0h2m2 0h28m3 0h3m6 0h15m1 0h5m2 0h3m6 0h3m4 0h3m19 0h5m-191 1h1m25 0h4m20 0h4m16 0h6m4 0h34m4 0h1m4 0h12m3 0h7m2 0h3m5 0h4m6 0h2m7 0h3m4 0h2m4 0h4m-165 1h3m21 0h5m8 0h2m15 0h7m4 0h5m1 0h12m3 0h8m1 0h14m4 0h4m4 0h3m6 0h1m9 0h1m6 0h4m4 0h3m2 0h4m-141 1h6m8 0h3m14 0h7m4 0h4m2 0h13m2 0h7m2 0h13m4 0h5m3 0h4m16 0h1m5 0h2m7 0h3m2 0h3m-140 1h5m2 0h5m1 0h1m2 0h2m13 0h3m1 0h4m10 0h2m4 0h5m3 0h7m2 0h13m5 0h8m18 0h8m9 0h1m4 0h1m-156 1h3m3 0h3m8 0h1m6 0h7m2 0h2m13 0h3m2 0h3m10 0h2m13 0h6m1 0h13m6 0h4m22 0h7m-162 1h1m19 0h5m3 0h3m15 0h6m8 0h2m7 0h4m2 0h2m10 0h8m8 0h18m6 0h5m11 0h3m10 0h1m3 0h1m-161 1h2m16 0h8m21 0h4m4 0h8m5 0h3m4 0h2m10 0h10m4 0h20m6 0h4m12 0h5m13 0h2m-145 1h3m3 0h1m16 0h3m3 0h5m3 0h12m2 0h3m4 0h1m10 0h10m3 0h4m2 0h17m7 0h1m10 0h9m8 0h7m-132 1h2m6 0h2m4 0h7m1 0h13m1 0h3m17 0h8m2 0h6m1 0h19m5 0h1m10 0h3m1 0h1m2 0h3m7 0h2m1 0h4m5 0h2m-131 1h2m3 0h13m2 0h2m1 0h8m13 0h1m2 0h2m1 0h14m2 0h19m4 0h1m2 0h2m6 0h3m4 0h6m3 0h3m2 0h4m2 0h4m-170 1h3m35 0h3m3 0h13m2 0h11m12 0h18m1 0h3m1 0h19m3 0h1m3 0h5m3 0h4m4 0h7m2 0h2m2 0h2m4 0h3m-169 1h2m36 0h3m3 0h13m1 0h6m3 0h3m12 0h4m2 0h8m2 0h2m2 0h21m3 0h3m3 0h6m1 0h5m3 0h2m2 0h4m2 0h5m4 0h1m-167 1h2m24 0h2m10 0h4m1 0h10m1 0h10m19 0h3m2 0h8m2 0h1m3 0h20m5 0h2m5 0h5m2 0h3m8 0h14m-173 1h1m28 0h8m8 0h3m2 0h21m8 0h2m10 0h2m2 0h12m3 0h18m7 0h2m4 0h4m4 0h1m9 0h14m-174 1h2m6 0h1m20 0h10m2 0h1m7 0h23m3 0h3m2 0h2m10 0h16m3 0h2m1 0h25m3 0h10m8 0h8m3 0h1m-172 1h2m5 0h2m20 0h10m2 0h2m6 0h22m4 0h8m5 0h3m1 0h21m2 0h24m2 0h12m6 0h9m-168 1h1m6 0h2m20 0h5m2 0h3m3 0h2m4 0h20m7 0h7m5 0h3m2 0h46m2 0h14m3 0h11m-165 1h2m1 0h2m21 0h4m4 0h2m4 0h26m6 0h4m7 0h4m3 0h7m2 0h28m1 0h3m2 0h1m4 0h13m5 0h7m-163 1h5m10 0h1m18 0h3m3 0h27m16 0h4m3 0h7m2 0h6m4 0h5m1 0h6m2 0h1m4 0h4m8 0h10m7 0h1m3 0h2m-148 1h2m13 0h2m2 0h3m1 0h33m4 0h3m5 0h13m7 0h1m5 0h4m2 0h6m1 0h12m7 0h2m1 0h5m12 0h2m-174 1h2m39 0h2m2 0h2m2 0h6m2 0h25m2 0h2m1 0h2m5 0h9m1 0h2m14 0h25m2 0h2m22 0h5m-156 1h2m28 0h21m2 0h13m9 0h8m1 0h2m14 0h29m20 0h4m1 0h1m-155 1h3m27 0h21m4 0h4m3 0h4m9 0h11m2 0h4m3 0h4m2 0h28m18 0h5m-156 1h3m2 0h2m27 0h21m4 0h3m4 0h5m2 0h2m4 0h19m1 0h4m3 0h27m18 0h5m-166 1h4m7 0h1m3 0h2m9 0h2m3 0h1m11 0h23m3 0h2m7 0h2m3 0h3m4 0h11m1 0h10m5 0h5m2 0h18m3 0h1m16 0h3m-165 1h4m8 0h5m9 0h3m1 0h3m7 0h26m3 0h2m12 0h3m5 0h10m2 0h9m5 0h4m3 0h18m2 0h3m2 0h1m6 0h1m5 0h3m-165 1h4m8 0h4m9 0h1m4 0h5m7 0h25m1 0h2m13 0h3m5 0h6m1 0h2m5 0h8m4 0h4m3 0h18m1 0h4m1 0h4m3 0h3m-159 1h4m9 0h1m11 0h1m18 0h19m2 0h6m21 0h6m9 0h2m3 0h2m5 0h3m2 0h7m4 0h11m3 0h4m3 0h4m-160 1h4m21 0h2m18 0h2m3 0h13m4 0h4m21 0h2m1 0h3m5 0h2m2 0h1m11 0h4m2 0h7m2 0h12m2 0h5m3 0h5m-168 1h2m6 0h2m22 0h2m19 0h1m2 0h13m5 0h4m3 0h2m5 0h4m7 0h7m3 0h5m10 0h6m4 0h27m4 0h3m-169 1h3m6 0h1m24 0h1m21 0h15m4 0h3m4 0h2m5 0h5m5 0h7m3 0h6m4 0h13m6 0h24m5 0h1m-168 1h3m31 0h1m21 0h18m1 0h2m12 0h4m6 0h7m3 0h6m3 0h10m1 0h4m5 0h7m4 0h8m1 0h6m-164 1h2m32 0h1m16 0h1m4 0h18m17 0h4m2 0h2m2 0h5m3 0h6m3 0h5m3 0h1m3 0h3m5 0h6m6 0h14m-163 1h1m33 0h2m11 0h1m7 0h5m1 0h6m2 0h4m18 0h4m5 0h4m4 0h6m3 0h1m11 0h3m5 0h5m7 0h5m2 0h7m-164 1h2m27 0h1m4 0h3m5 0h1m13 0h5m1 0h12m19 0h3m5 0h4m4 0h5m4 0h1m11 0h3m5 0h4m5 0h1m4 0h3m3 0h6m-176 1h2m9 0h2m28 0h1m4 0h4m18 0h5m1 0h11m20 0h6m1 0h5m3 0h2m1 0h3m3 0h2m11 0h2m5 0h5m4 0h2m13 0h4m-178 1h6m21 0h1m20 0h2m19 0h4m2 0h8m18 0h2m3 0h11m3 0h1m9 0h2m10 0h1m6 0h6m4 0h2m13 0h4m-179 1h7m21 0h2m19 0h2m12 0h2m4 0h5m2 0h8m19 0h1m3 0h11m2 0h2m8 0h5m15 0h2m2 0h2m4 0h2m7 0h1m5 0h3m-181 1h6m2 0h3m19 0h2m20 0h4m3 0h2m5 0h3m3 0h15m22 0h12m2 0h2m7 0h7m10 0h1m3 0h2m3 0h4m11 0h2m3 0h3m-181 1h6m4 0h1m5 0h3m9 0h4m22 0h2m3 0h2m4 0h3m1 0h3m1 0h14m2 0h1m2 0h1m12 0h1m2 0h7m2 0h4m3 0h2m6 0h8m13 0h10m-163 1h6m4 0h2m4 0h2m11 0h2m16 0h2m6 0h2m3 0h1m3 0h8m2 0h16m15 0h2m2 0h6m3 0h2m7 0h2m3 0h8m5 0h2m7 0h9m-162 1h4m5 0h2m12 0h1m23 0h2m5 0h4m6 0h7m3 0h15m15 0h2m4 0h4m3 0h3m5 0h4m1 0h8m5 0h4m7 0h2m2 0h4m-153 1h3m10 0h3m22 0h3m5 0h4m6 0h6m7 0h6m3 0h1m8 0h2m7 0h1m4 0h3m3 0h5m4 0h5m1 0h4m6 0h6m12 0h3m4 0h2m-171 1h3m9 0h4m9 0h2m23 0h3m5 0h4m8 0h5m2 0h8m1 0h1m12 0h2m7 0h2m3 0h4m1 0h6m5 0h4m2 0h1m11 0h4m8 0h1m1 0h4m4 0h4m-173 1h3m9 0h4m9 0h2m31 0h1m12 0h2m4 0h7m9 0h1m14 0h16m2 0h1m3 0h6m11 0h5m17 0h4m-173 1h1m10 0h4m22 0h2m16 0h4m16 0h9m9 0h3m10 0h6m2 0h6m1 0h4m1 0h2m2 0h6m11 0h5m17 0h7m-176 1h1m10 0h3m21 0h3m16 0h6m7 0h16m8 0h1m3 0h2m9 0h6m2 0h5m3 0h11m1 0h3m11 0h3m18 0h2m2 0h4m-178 1h1m11 0h2m22 0h3m7 0h1m7 0h7m2 0h8m1 0h12m12 0h3m1 0h1m8 0h3m3 0h5m3 0h10m2 0h2m25 0h1m11 0h3m-177 1h1m34 0h2m8 0h4m4 0h11m2 0h4m2 0h12m6 0h2m3 0h4m1 0h2m7 0h2m4 0h5m3 0h9m2 0h2m30 0h1m8 0h1m-176 1h1m35 0h1m8 0h5m2 0h8m7 0h2m3 0h5m2 0h7m3 0h9m2 0h3m6 0h2m4 0h4m2 0h9m3 0h3m18 0h1m11 0h1m8 0h1m-177 1h2m24 0h2m20 0h3m2 0h3m7 0h2m11 0h2m1 0h9m1 0h9m3 0h4m4 0h4m3 0h4m1 0h3m3 0h3m3 0h3m19 0h1m20 0h1m-177 1h2m24 0h2m25 0h2m8 0h3m13 0h18m4 0h5m2 0h5m3 0h8m8 0h3m-135 1h2m24 0h2m35 0h5m11 0h4m1 0h5m12 0h5m10 0h7m8 0h3m-135 1h3m16 0h1m17 0h2m11 0h3m6 0h10m11 0h3m3 0h4m26 0h3m2 0h1m10 0h1m40 0h2m-175 1h3m16 0h2m15 0h4m11 0h4m3 0h10m11 0h2m6 0h3m9 0h1m10 0h7m57 0h1m-175 1h4m15 0h2m6 0h2m6 0h6m10 0h3m4 0h7m1 0h2m11 0h2m7 0h2m15 0h2m3 0h7m-118 1h5m22 0h3m6 0h5m11 0h3m3 0h4m5 0h1m12 0h5m20 0h1m4 0h8m5 0h1m6 0h2m-132 1h6m23 0h5m3 0h4m10 0h11m2 0h1m2 0h1m12 0h5m18 0h1m5 0h6m2 0h1m4 0h4m3 0h2m-131 1h6m23 0h5m3 0h4m3 0h2m4 0h13m1 0h4m12 0h4m25 0h6m8 0h3m3 0h2m-131 1h6m2 0h1m21 0h4m4 0h3m3 0h3m2 0h4m3 0h6m3 0h3m12 0h4m26 0h7m7 0h3m1 0h3m-130 1h5m2 0h2m21 0h4m5 0h1m3 0h3m2 0h3m7 0h3m18 0h3m28 0h6m3 0h1m4 0h3m-126 1h5m3 0h1m19 0h6m8 0h1m4 0h3m27 0h5m29 0h3m3 0h4m2 0h3m-123 1h2m23 0h6m44 0h1m38 0h3m4 0h2m1 0h1m-125 1h3m18 0h1m2 0h5m56 0h2m27 0h3m-117 1h4m16 0h8m86 0h3m-123 1h3m3 0h5m15 0h8m87 0h2m-123 1h3m3 0h5m2 0h3m12 0h5m88 0h2m-123 1h3m3 0h5m2 0h3m13 0h4m36 0h1m11 0h2m-83 1h3m4 0h5m2 0h1m15 0h3m49 0h1m42 0h2m-127 1h3m5 0h5m62 0h2m15 0h1m32 0h1m-124 1h1m6 0h5m61 0h3m41 0h1m-118 1h1m8 0h2m62 0h3m41 0h2m-120 1h3m71 0h3m9 0h1m-87 1h6m66 0h6m7 0h2m-87 1h6m65 0h7m8 0h2m-86 1h4m4 0h1m61 0h2m3 0h2m-77 1h3m3 0h2m67 0h2m-77 1h3m-3 1h4m72 0h1m-75 1h1"/><path stroke="#00ff00" stroke-width="1" d="M412 239.5h1m-6 1h1m5 0h1m-7 1h1m5 0h1m-12 1h1m9 0h1m68 2h1m-78 1h1m91 0h1m138 0h1m-233 2h1m94 0h2m-97 1h1m94 0h1m1 0h1m-92 1h1m15 0h1m-24 4h1m102 0h1m9 0h1m2 1h1m115 0h1m-219 1h1m5 0h1m81 0h1m20 0h1m82 0h2m25 0h1m-224 1h1m2 0h1m1 0h1m107 0h1m9 0h1m46 0h1m25 0h1m1 0h1m-199 1h1m6 0h1m29 0h1m74 0h1m56 0h1m18 0h1m5 0h4m3 0h1m-212 1h1m7 0h1m37 0h1m1 0h1m3 0h1m12 0h1m34 0h1m7 0h1m79 0h1m7 0h1m3 0h2m28 0h2m-228 1h1m48 0h2m53 0h1m69 0h1m19 0h1m4 0h1m27 0h1m-223 1h3m23 0h1m11 0h1m47 0h1m39 0h1m1 0h1m77 0h2m6 0h1m1 0h1m2 0h1m2 0h1m-223 1h2m12 0h1m9 0h1m62 0h1m35 0h1m84 0h1m10 0h1m2 0h1m-226 1h2m2 0h1m8 0h1m1 0h1m10 0h1m60 0h1m41 0h1m64 0h1m-169 1h1m3 0h1m26 0h1m7 0h1m64 0h1m86 0h1m2 0h2m2 0h1m-225 1h1m1 0h1m17 0h1m91 0h1m20 0h1m36 0h1m45 0h1m2 0h1m-219 1h2m20 0h1m5 0h1m72 0h1m68 0h1m6 0h1m1 0h1m1 0h2m36 0h1m-226 1h1m6 0h1m21 0h3m102 0h1m48 0h1m1 0h1m26 0h1m1 0h2m2 0h1m-220 1h1m22 0h1m6 0h4m71 0h1m33 0h1m33 0h1m4 0h1m1 0h1m21 0h1m11 0h1m7 0h1m1 0h1m6 0h1m1 0h1m-234 1h1m29 0h1m13 0h1m18 0h1m25 0h2m16 0h1m7 0h2m23 0h1m37 0h1m1 0h1m36 0h1m7 0h1m2 0h2m3 0h1m-200 1h2m26 0h2m19 0h1m21 0h1m72 0h1m5 0h1m12 0h1m5 0h1m5 0h1m11 0h1m3 0h1m2 0h4m-202 1h1m2 0h1m2 0h1m16 0h1m8 0h2m20 0h1m5 0h1m85 0h1m1 0h1m17 0h1m24 0h1m2 0h1m3 0h2m-200 1h1m1 0h1m1 0h1m28 0h2m15 0h1m2 0h1m23 0h1m24 0h1m40 0h1m2 0h1m1 0h1m4 0h1m6 0h1m2 0h1m2 0h1m1 0h1m-192 1h1m1 0h2m19 0h3m1 0h1m29 0h1m63 0h1m4 0h1m42 0h1m1 0h1m11 0h1m3 0h1m2 0h1m1 0h2m-195 1h3m2 0h1m57 0h1m59 0h1m46 0h1m5 0h2m3 0h1m9 0h1m1 0h1m23 0h1m2 0h1m1 0h1m-222 1h1m3 0h1m47 0h1m16 0h2m40 0h1m56 0h1m7 0h2m5 0h1m6 0h1m12 0h1m4 0h1m1 0h1m13 0h2m-226 1h1m3 0h2m50 0h1m52 0h1m1 0h1m20 0h1m50 0h1m9 0h1m9 0h1m12 0h1m5 0h1m2 0h1m-221 1h1m52 0h1m43 0h1m66 0h1m6 0h1m9 0h1m2 0h1m3 0h1m2 0h1m7 0h1m1 0h2m1 0h1m11 0h1m-217 1h1m67 0h1m5 0h1m53 0h3m45 0h1m4 0h1m1 0h1m3 0h1m1 0h2m8 0h1m14 0h1m1 0h1m-216 1h1m41 0h2m5 0h1m16 0h2m60 0h1m62 0h1m7 0h1m14 0h1m5 0h1m-218 1h1m43 0h1m128 0h1m1 0h1m-180 1h2m2 0h1m18 0h1m43 0h1m92 0h1m16 0h1m17 0h1m-196 1h1m3 0h1m173 0h1m35 0h1m-219 1h2m7 0h1m16 0h1m53 0h1m18 0h1m87 0h2m6 0h1m22 0h3m-212 1h2m12 0h2m1 0h1m24 0h1m35 0h1m9 0h1m6 0h1m118 0h1m-221 1h2m5 0h1m12 0h2m2 0h1m22 0h1m29 0h1m6 0h1m86 0h2m14 0h1m5 0h1m2 0h1m25 0h1m-203 1h2m96 0h1m52 0h1m11 0h1m9 0h1m28 0h1m-230 1h1m5 0h1m8 0h2m9 0h1m1 0h1m37 0h1m93 0h2m3 0h1m3 0h2m4 0h1m24 0h1m1 0h1m1 0h1m4 0h1m5 0h1m7 0h1m5 0h1m-230 1h2m13 0h1m8 0h1m3 0h1m37 0h1m41 0h1m1 0h1m2 0h1m6 0h1m4 0h1m35 0h2m4 0h3m6 0h1m18 0h1m4 0h2m23 0h1m-228 1h4m3 0h2m8 0h1m9 0h1m82 0h1m59 0h1m7 0h1m15 0h1m3 0h3m15 0h1m12 0h3m-230 1h1m2 0h1m12 0h2m34 0h1m54 0h1m25 0h1m33 0h1m1 0h1m5 0h1m26 0h1m25 0h2m-230 1h1m2 0h1m13 0h1m1 0h1m5 0h1m81 0h1m18 0h1m38 0h1m1 0h1m7 0h1m38 0h1m14 0h1m-219 1h1m9 0h3m86 0h1m1 0h1m15 0h1m30 0h2m3 0h1m2 0h1m7 0h1m2 0h1m6 0h2m17 0h1m4 0h1m3 0h1m-212 1h2m6 0h1m116 0h1m31 0h6m2 0h1m8 0h1m5 0h1m1 0h1m5 0h1m15 0h1m2 0h1m2 0h2m-212 1h1m6 0h1m118 0h1m3 0h1m26 0h1m3 0h2m7 0h1m1 0h3m5 0h2m18 0h1m12 0h1m12 0h1m-223 1h1m126 0h1m29 0h1m12 0h1m6 0h3m1 0h2m12 0h1m27 0h1m-229 1h1m2 0h2m3 0h1m116 0h1m29 0h1m7 0h1m1 0h1m6 0h2m3 0h1m10 0h1m12 0h1m21 0h2m3 0h1m-229 1h1m2 0h1m4 0h1m145 0h2m1 0h1m2 0h1m2 0h1m10 0h1m14 0h1m11 0h1m20 0h3m3 0h1m-230 1h1m2 0h2m121 0h1m26 0h3m5 0h1m2 0h1m6 0h1m4 0h2m13 0h1m17 0h1m2 0h1m3 0h3m3 0h3m4 0h1m-232 1h2m6 0h1m3 0h2m127 0h1m4 0h1m15 0h2m2 0h1m2 0h2m3 0h1m2 0h4m29 0h1m3 0h1m3 0h1m2 0h1m1 0h2m1 0h1m-225 1h1m11 0h1m112 0h1m20 0h4m4 0h1m5 0h1m12 0h2m3 0h2m6 0h1m5 0h1m13 0h1m2 0h1m2 0h1m5 0h10m-232 1h1m9 0h1m18 0h1m1 0h1m96 0h1m4 0h1m4 0h1m14 0h2m2 0h2m4 0h1m2 0h1m17 0h1m2 0h1m9 0h2m15 0h1m1 0h2m4 0h1m1 0h5m2 0h2m-233 1h1m29 0h2m14 0h1m84 0h1m21 0h2m2 0h2m4 0h1m1 0h4m20 0h1m7 0h5m11 0h4m2 0h1m2 0h7m2 0h3m-107 1h1m21 0h6m1 0h3m5 0h1m29 0h1m1 0h12m2 0h3m2 0h2m2 0h2m1 0h8m2 0h2m-220 1h1m5 0h1m106 0h1m13 0h1m1 0h1m6 0h4m2 0h3m11 0h2m22 0h18m3 0h2m1 0h13m2 0h1m-197 1h1m1 0h2m105 0h1m4 0h1m4 0h3m9 0h1m1 0h2m1 0h3m11 0h1m6 0h1m1 0h14m4 0h20m-213 1h1m105 0h1m9 0h1m16 0h1m13 0h2m4 0h2m11 0h1m9 0h13m2 0h22m-200 1h1m5 0h1m37 0h1m66 0h1m2 0h1m5 0h1m4 0h2m23 0h2m12 0h6m2 0h28m-200 1h1m93 0h1m20 0h1m4 0h1m5 0h1m9 0h4m9 0h1m1 0h1m7 0h1m5 0h35m-224 1h1m22 0h1m4 0h2m2 0h1m8 0h1m76 0h1m8 0h2m1 0h2m4 0h1m1 0h2m10 0h1m9 0h1m2 0h1m9 0h1m2 0h1m2 0h1m2 0h2m1 0h2m3 0h21m2 0h11m-225 1h1m31 0h1m45 0h1m59 0h2m1 0h1m19 0h3m3 0h1m5 0h3m2 0h1m5 0h1m1 0h2m3 0h21m2 0h11m-190 1h1m8 0h1m1 0h1m14 0h1m71 0h1m4 0h1m3 0h1m18 0h4m1 0h2m8 0h3m7 0h39m-211 1h1m16 0h1m13 0h1m1 0h1m30 0h1m2 0h1m52 0h5m3 0h1m17 0h1m1 0h7m1 0h1m6 0h2m9 0h37m-234 1h1m24 0h1m31 0h1m31 0h1m49 0h1m5 0h4m1 0h1m18 0h5m3 0h1m3 0h1m5 0h2m8 0h24m2 0h11m-234 1h1m144 0h5m20 0h2m9 0h1m4 0h4m7 0h24m4 0h9m-195 1h1m101 0h1m5 0h3m7 0h1m12 0h1m5 0h1m1 0h2m3 0h1m2 0h4m6 0h26m4 0h8m-93 1h1m7 0h1m6 0h1m1 0h1m4 0h1m11 0h1m7 0h1m2 0h4m5 0h5m2 0h21m3 0h8m-157 1h1m62 0h1m15 0h1m2 0h1m3 0h3m20 0h5m3 0h29m2 0h9m-95 1h1m3 0h1m12 0h4m3 0h4m19 0h3m5 0h30m1 0h5m2 0h2m-179 1h1m75 0h1m7 0h1m3 0h1m12 0h1m7 0h3m20 0h1m6 0h31m4 0h2m-196 1h2m5 0h1m9 0h1m82 0h3m5 0h1m12 0h2m12 0h1m8 0h1m14 0h30m5 0h3m-103 1h1m6 0h1m6 0h1m8 0h3m2 0h2m12 0h1m7 0h1m13 0h30m6 0h5m-233 1h1m127 0h1m21 0h4m2 0h2m29 0h3m2 0h30m5 0h6m-171 1h1m70 0h1m1 0h1m8 0h4m2 0h6m31 0h3m2 0h32m1 0h8m-215 1h1m126 0h6m19 0h5m12 0h4m1 0h28m1 0h8m-142 1h1m41 0h1m5 0h1m11 0h1m1 0h2m16 0h1m1 0h5m14 0h31m2 0h4m1 0h1m-211 1h3m1 0h2m12 0h2m18 0h1m32 0h2m46 0h1m13 0h3m10 0h1m3 0h2m2 0h5m7 0h2m3 0h32m2 0h3m-219 1h2m10 0h4m9 0h2m1 0h1m1 0h1m10 0h1m41 0h1m45 0h1m4 0h2m7 0h4m4 0h3m7 0h1m4 0h5m8 0h1m2 0h31m2 0h3m-207 1h3m1 0h1m12 0h2m5 0h1m1 0h1m88 0h2m7 0h5m1 0h5m14 0h2m6 0h4m7 0h39m-224 1h2m15 0h2m3 0h3m9 0h3m3 0h1m4 0h1m45 0h1m51 0h1m1 0h3m2 0h2m14 0h2m17 0h28m2 0h9m-224 1h3m15 0h1m4 0h5m4 0h5m8 0h1m88 0h1m8 0h1m2 0h1m4 0h2m13 0h8m10 0h29m3 0h8m4 0h5m-224 1h1m8 0h2m3 0h6m1 0h5m2 0h1m2 0h1m1 0h1m2 0h1m46 0h1m39 0h2m10 0h3m18 0h4m3 0h1m6 0h1m3 0h30m2 0h6m2 0h2m3 0h5m-230 1h1m3 0h3m2 0h2m5 0h6m2 0h5m4 0h1m6 0h1m3 0h2m40 0h1m24 0h1m29 0h8m16 0h2m1 0h2m5 0h2m3 0h9m1 0h19m3 0h11m2 0h6m-234 1h1m1 0h2m8 0h3m4 0h6m2 0h6m13 0h1m82 0h1m2 0h2m9 0h5m3 0h1m12 0h1m11 0h1m1 0h3m3 0h8m2 0h18m2 0h12m4 0h4m-234 1h4m9 0h4m2 0h14m13 0h1m66 0h2m15 0h4m10 0h4m3 0h1m26 0h3m2 0h29m2 0h13m3 0h4m-232 1h2m9 0h4m3 0h10m2 0h2m11 0h1m1 0h1m82 0h1m1 0h2m11 0h4m3 0h2m24 0h2m3 0h13m1 0h7m1 0h23m1 0h5m-231 1h1m9 0h2m2 0h5m1 0h4m1 0h1m1 0h1m1 0h1m15 0h1m4 0h1m18 0h1m57 0h1m1 0h3m4 0h1m5 0h1m3 0h2m2 0h2m8 0h3m21 0h21m2 0h24m-231 1h1m2 0h5m2 0h3m3 0h3m2 0h2m2 0h1m102 0h1m2 0h2m7 0h2m41 0h22m1 0h25m-230 1h5m1 0h3m1 0h2m4 0h1m7 0h1m9 0h2m18 0h1m75 0h1m8 0h2m8 0h2m30 0h23m1 0h16m2 0h6m-228 1h4m2 0h2m2 0h2m10 0h1m11 0h1m14 0h1m3 0h2m72 0h4m2 0h3m4 0h2m6 0h1m2 0h5m9 0h1m14 0h3m1 0h19m1 0h15m3 0h6m-227 1h3m2 0h6m33 0h1m8 0h1m5 0h1m66 0h6m2 0h1m11 0h1m7 0h2m3 0h1m4 0h1m15 0h1m2 0h30m1 0h5m3 0h6m-228 1h3m2 0h6m27 0h1m3 0h1m1 0h1m3 0h1m8 0h1m64 0h1m2 0h3m2 0h2m14 0h1m3 0h1m3 0h7m7 0h1m11 0h1m2 0h33m1 0h2m5 0h4m-223 1h6m12 0h1m15 0h1m4 0h3m1 0h1m10 0h1m2 0h1m57 0h2m4 0h2m2 0h1m2 0h1m5 0h1m2 0h6m2 0h1m4 0h3m2 0h2m6 0h2m14 0h5m1 0h29m5 0h4m-223 1h5m13 0h1m16 0h3m2 0h1m8 0h1m63 0h3m5 0h3m1 0h1m13 0h5m1 0h1m4 0h3m3 0h1m23 0h3m3 0h28m3 0h6m-221 1h3m12 0h5m23 0h3m65 0h5m9 0h3m7 0h1m2 0h1m3 0h2m5 0h2m2 0h3m22 0h2m4 0h28m2 0h7m-205 1h3m5 0h2m5 0h1m11 0h1m12 0h1m53 0h2m1 0h4m4 0h1m12 0h2m7 0h4m2 0h4m1 0h2m21 0h4m3 0h4m2 0h22m2 0h7m-204 1h2m3 0h1m2 0h1m6 0h1m9 0h1m6 0h2m5 0h1m46 0h3m5 0h1m1 0h5m2 0h1m11 0h1m2 0h1m6 0h6m3 0h6m16 0h8m2 0h5m2 0h22m2 0h4m2 0h1m-204 1h2m3 0h1m2 0h1m12 0h1m6 0h1m2 0h3m2 0h2m47 0h1m13 0h2m11 0h1m12 0h7m2 0h6m15 0h9m1 0h37m-229 1h1m26 0h2m5 0h3m9 0h1m7 0h1m3 0h4m47 0h1m2 0h1m12 0h2m12 0h1m11 0h3m2 0h1m1 0h1m5 0h3m10 0h2m3 0h7m3 0h38m-207 1h6m13 0h4m8 0h1m2 0h3m2 0h1m5 0h1m40 0h2m1 0h1m11 0h1m11 0h2m2 0h1m9 0h4m1 0h4m6 0h2m9 0h13m3 0h39m-208 1h1m2 0h1m14 0h2m11 0h1m1 0h4m1 0h2m2 0h1m41 0h5m1 0h2m9 0h1m1 0h1m2 0h1m6 0h2m10 0h2m1 0h5m2 0h1m13 0h3m1 0h11m5 0h39m-212 1h5m5 0h2m12 0h3m2 0h3m2 0h3m3 0h2m2 0h1m2 0h3m37 0h1m1 0h1m2 0h1m2 0h2m6 0h2m12 0h2m11 0h5m22 0h11m5 0h39m-213 1h3m2 0h4m2 0h1m1 0h1m2 0h1m6 0h1m1 0h3m2 0h7m10 0h2m2 0h1m18 0h1m5 0h2m8 0h2m2 0h2m1 0h1m2 0h2m7 0h1m12 0h2m5 0h2m4 0h4m6 0h1m16 0h3m1 0h8m5 0h2m2 0h20m2 0h12m-232 1h1m8 0h2m7 0h3m6 0h1m2 0h1m2 0h2m11 0h1m2 0h1m2 0h3m12 0h1m17 0h1m5 0h3m1 0h2m3 0h2m2 0h1m4 0h3m4 0h2m1 0h1m12 0h2m2 0h4m3 0h2m1 0h1m1 0h4m3 0h4m1 0h1m16 0h1m3 0h8m5 0h24m2 0h12m-232 1h3m15 0h2m7 0h1m18 0h1m2 0h1m2 0h3m5 0h1m6 0h2m23 0h4m3 0h4m1 0h1m3 0h2m7 0h1m3 0h2m7 0h7m3 0h1m3 0h1m1 0h6m1 0h3m3 0h1m16 0h1m4 0h8m7 0h36m-231 1h2m15 0h2m8 0h3m15 0h4m2 0h3m4 0h3m6 0h1m11 0h1m9 0h1m4 0h1m2 0h2m2 0h1m6 0h1m19 0h9m1 0h2m4 0h4m2 0h1m3 0h2m19 0h1m4 0h7m7 0h10m4 0h7m1 0h7m2 0h6m-231 1h3m25 0h2m22 0h2m4 0h2m8 0h1m10 0h1m6 0h1m7 0h4m3 0h1m3 0h6m5 0h1m13 0h3m1 0h5m5 0h4m2 0h1m4 0h5m13 0h2m5 0h7m7 0h21m1 0h7m2 0h6m-231 1h3m6 0h3m29 0h2m27 0h1m8 0h1m3 0h2m17 0h1m1 0h1m5 0h2m33 0h4m2 0h1m3 0h7m1 0h1m2 0h2m3 0h4m3 0h11m5 0h29m1 0h7m-231 1h3m5 0h4m21 0h3m5 0h3m10 0h1m24 0h1m32 0h1m1 0h2m29 0h2m1 0h1m2 0h4m4 0h3m2 0h11m2 0h12m4 0h38m-231 1h4m2 0h2m1 0h3m21 0h3m18 0h2m15 0h1m5 0h3m30 0h2m32 0h5m10 0h14m3 0h12m2 0h41m-228 1h2m1 0h1m3 0h2m20 0h3m19 0h2m11 0h2m3 0h2m1 0h5m27 0h2m35 0h4m5 0h3m2 0h2m3 0h8m5 0h11m3 0h39m1 0h1m-228 1h1m3 0h1m2 0h2m16 0h6m10 0h2m4 0h7m11 0h1m4 0h1m2 0h1m58 0h2m7 0h4m2 0h1m1 0h2m2 0h4m2 0h7m7 0h12m2 0h39m1 0h1m-229 1h2m4 0h1m1 0h2m15 0h2m2 0h3m9 0h4m2 0h5m2 0h2m3 0h2m9 0h1m3 0h2m57 0h1m4 0h1m2 0h8m2 0h1m2 0h1m2 0h1m2 0h6m4 0h1m3 0h43m1 0h8m2 0h1m-230 1h4m3 0h1m1 0h2m16 0h1m2 0h4m6 0h1m1 0h7m1 0h2m4 0h2m2 0h2m9 0h2m2 0h3m30 0h1m14 0h2m14 0h11m3 0h3m2 0h9m3 0h23m1 0h36m-234 1h1m3 0h5m1 0h6m14 0h2m2 0h1m1 0h15m3 0h2m3 0h4m13 0h3m3 0h1m12 0h2m15 0h2m13 0h1m13 0h1m1 0h2m2 0h1m1 0h2m1 0h1m7 0h4m2 0h5m2 0h39m2 0h20m-234 1h3m2 0h8m14 0h7m3 0h5m2 0h2m2 0h2m3 0h6m3 0h1m15 0h1m3 0h3m10 0h2m43 0h2m3 0h2m6 0h1m12 0h14m1 0h31m2 0h20m-234 1h8m13 0h1m5 0h2m2 0h3m3 0h7m5 0h9m19 0h3m2 0h3m29 0h1m38 0h1m5 0h1m6 0h13m2 0h29m4 0h20m-234 1h8m12 0h2m5 0h8m2 0h7m5 0h4m1 0h3m7 0h1m12 0h6m23 0h1m4 0h5m1 0h2m30 0h2m1 0h2m4 0h2m5 0h44m4 0h21m-230 1h1m1 0h3m3 0h2m6 0h3m3 0h3m1 0h8m1 0h2m2 0h1m4 0h2m6 0h1m4 0h2m14 0h2m8 0h1m18 0h2m4 0h1m2 0h1m1 0h3m33 0h1m12 0h19m1 0h18m2 0h4m1 0h17m3 0h2m-229 1h5m2 0h3m6 0h1m6 0h1m4 0h9m15 0h1m3 0h1m15 0h2m23 0h3m2 0h3m3 0h4m3 0h2m45 0h38m2 0h21m-227 1h2m3 0h2m1 0h6m4 0h2m12 0h3m3 0h3m34 0h2m24 0h3m3 0h2m4 0h2m5 0h2m45 0h29m2 0h6m2 0h21m3 0h1m-231 1h3m3 0h1m2 0h4m5 0h2m2 0h1m15 0h3m11 0h3m4 0h1m42 0h1m9 0h11m14 0h2m4 0h2m21 0h3m1 0h25m3 0h5m2 0h22m2 0h3m-232 1h3m3 0h4m1 0h2m2 0h7m16 0h4m10 0h1m3 0h1m14 0h2m18 0h2m19 0h9m1 0h2m13 0h2m4 0h2m5 0h2m14 0h3m1 0h25m3 0h4m2 0h22m2 0h4m-231 1h2m2 0h5m1 0h2m2 0h4m1 0h2m16 0h6m7 0h1m18 0h2m1 0h3m15 0h2m8 0h1m10 0h9m2 0h1m18 0h3m5 0h2m9 0h41m2 0h11m1 0h9m3 0h5m-228 1h4m7 0h3m2 0h1m15 0h7m4 0h3m16 0h1m5 0h4m23 0h2m11 0h2m3 0h3m7 0h1m33 0h41m1 0h11m1 0h10m2 0h6m-229 1h3m7 0h2m1 0h1m2 0h1m6 0h1m11 0h4m4 0h3m5 0h1m9 0h2m6 0h2m25 0h1m11 0h3m2 0h3m6 0h1m34 0h17m3 0h15m1 0h36m-228 1h2m7 0h2m2 0h4m5 0h1m6 0h1m4 0h4m6 0h1m3 0h2m10 0h1m7 0h2m4 0h3m31 0h2m2 0h3m5 0h2m35 0h15m5 0h11m5 0h35m-227 1h2m5 0h1m8 0h1m4 0h2m5 0h1m15 0h1m1 0h1m12 0h1m13 0h1m38 0h3m5 0h1m7 0h3m25 0h15m5 0h5m2 0h3m6 0h10m1 0h17m2 0h4m-225 1h1m5 0h1m3 0h1m3 0h8m36 0h1m52 0h3m13 0h3m2 0h2m3 0h1m15 0h17m3 0h7m1 0h5m1 0h14m1 0h6m2 0h9m3 0h2m-214 1h11m3 0h1m7 0h2m11 0h1m3 0h1m7 0h5m42 0h1m7 0h2m14 0h2m2 0h6m15 0h16m3 0h29m2 0h5m2 0h10m3 0h3m-215 1h4m2 0h4m2 0h2m7 0h3m6 0h1m3 0h1m11 0h1m1 0h4m40 0h2m5 0h1m1 0h2m18 0h5m12 0h18m1 0h33m4 0h15m3 0h3m-227 1h4m7 0h3m5 0h8m4 0h5m2 0h1m8 0h1m5 0h3m1 0h7m7 0h3m32 0h2m10 0h1m14 0h5m6 0h4m2 0h18m1 0h33m3 0h13m1 0h2m3 0h3m-227 1h3m7 0h3m6 0h8m4 0h1m3 0h2m11 0h1m9 0h6m7 0h1m2 0h2m32 0h2m6 0h6m14 0h13m1 0h58m2 0h8m1 0h2m2 0h4m-216 1h2m5 0h3m2 0h1m7 0h1m2 0h4m10 0h3m18 0h3m1 0h2m2 0h2m30 0h2m3 0h10m12 0h34m1 0h36m3 0h4m2 0h5m1 0h5m-212 1h1m2 0h3m10 0h1m1 0h1m1 0h1m12 0h2m18 0h5m4 0h3m29 0h16m10 0h32m1 0h38m5 0h2m4 0h2m3 0h5m-212 1h1m2 0h3m5 0h4m17 0h3m17 0h2m1 0h3m5 0h2m29 0h16m9 0h13m2 0h17m2 0h38m5 0h3m9 0h4m-209 1h3m2 0h4m14 0h1m5 0h2m4 0h2m5 0h1m6 0h6m6 0h2m32 0h2m2 0h5m1 0h2m2 0h2m5 0h10m4 0h54m1 0h4m3 0h5m5 0h7m-234 1h1m24 0h2m3 0h2m15 0h2m5 0h2m4 0h3m2 0h4m7 0h4m45 0h4m1 0h2m2 0h2m6 0h9m1 0h71m3 0h8m-204 1h2m15 0h2m5 0h2m7 0h6m9 0h4m44 0h2m2 0h2m10 0h46m1 0h34m2 0h9m-203 1h1m13 0h1m8 0h2m8 0h2m3 0h4m6 0h4m39 0h2m6 0h2m10 0h20m2 0h4m2 0h29m2 0h9m1 0h11m2 0h10m-203 1h1m12 0h1m1 0h1m3 0h4m10 0h1m5 0h5m4 0h3m40 0h3m2 0h6m9 0h2m1 0h17m3 0h33m3 0h33m-204 1h1m12 0h2m1 0h6m14 0h6m1 0h8m41 0h5m3 0h4m6 0h51m1 0h6m2 0h15m1 0h10m1 0h7m-230 1h1m24 0h1m10 0h6m3 0h3m13 0h4m1 0h2m3 0h2m1 0h4m11 0h1m27 0h5m5 0h1m8 0h50m4 0h1m1 0h29m2 0h7m-232 1h3m5 0h1m28 0h1m4 0h2m3 0h4m12 0h4m1 0h1m7 0h5m9 0h2m15 0h1m8 0h4m2 0h1m4 0h3m10 0h10m2 0h36m4 0h16m1 0h14m2 0h7m-233 1h5m22 0h1m8 0h1m1 0h1m9 0h2m1 0h1m13 0h5m7 0h2m2 0h1m7 0h4m15 0h2m6 0h4m3 0h1m3 0h4m1 0h2m7 0h2m2 0h6m2 0h24m1 0h11m4 0h16m5 0h11m1 0h7m-233 1h6m6 0h4m14 0h1m6 0h2m13 0h1m7 0h2m7 0h5m3 0h5m4 0h6m16 0h3m2 0h5m4 0h6m1 0h5m4 0h13m2 0h20m6 0h6m1 0h3m4 0h4m2 0h3m1 0h3m1 0h3m4 0h19m-233 1h4m1 0h1m6 0h1m2 0h3m17 0h1m1 0h1m3 0h2m9 0h2m7 0h2m7 0h4m3 0h6m5 0h4m2 0h2m12 0h1m1 0h8m2 0h7m3 0h1m7 0h35m2 0h1m6 0h3m1 0h3m1 0h1m2 0h5m1 0h3m1 0h3m1 0h3m3 0h13m1 0h6m-233 1h2m2 0h3m5 0h2m1 0h1m1 0h1m5 0h1m11 0h1m1 0h1m1 0h4m9 0h1m18 0h3m4 0h2m1 0h5m3 0h8m5 0h3m3 0h7m2 0h5m2 0h2m3 0h1m11 0h21m6 0h8m7 0h9m2 0h8m1 0h6m3 0h21m-234 1h7m6 0h4m6 0h1m10 0h1m1 0h1m3 0h1m2 0h1m20 0h1m6 0h5m6 0h5m3 0h8m5 0h4m2 0h8m4 0h5m3 0h1m12 0h20m9 0h4m5 0h2m2 0h24m7 0h19m-234 1h5m10 0h1m5 0h1m3 0h1m8 0h3m3 0h2m1 0h1m19 0h2m3 0h4m1 0h4m5 0h3m2 0h1m2 0h2m1 0h1m10 0h4m1 0h10m3 0h4m2 0h2m3 0h2m8 0h6m1 0h5m1 0h7m9 0h3m4 0h6m1 0h21m9 0h1m1 0h15m-232 1h3m5 0h1m31 0h4m18 0h7m3 0h10m4 0h7m5 0h2m4 0h12m2 0h5m1 0h4m4 0h2m9 0h5m1 0h2m4 0h8m3 0h8m4 0h5m2 0h20m5 0h2m3 0h1m2 0h15m-233 1h2m5 0h2m30 0h5m17 0h9m2 0h5m1 0h4m3 0h7m6 0h3m3 0h2m2 0h8m2 0h2m5 0h2m8 0h3m7 0h2m2 0h2m3 0h21m3 0h5m2 0h16m2 0h30m-234 1h3m6 0h2m6 0h2m7 0h1m2 0h1m9 0h1m2 0h4m12 0h8m1 0h11m2 0h9m2 0h2m1 0h1m5 0h1m6 0h3m2 0h2m1 0h6m4 0h2m9 0h3m6 0h4m1 0h2m5 0h7m1 0h11m2 0h17m1 0h6m3 0h28m-233 1h3m7 0h3m13 0h2m9 0h2m3 0h6m4 0h2m3 0h3m1 0h5m2 0h10m2 0h7m1 0h2m1 0h4m13 0h1m4 0h9m2 0h3m7 0h4m7 0h8m1 0h1m2 0h6m2 0h7m6 0h16m3 0h6m3 0h27m-223 1h1m26 0h2m3 0h1m2 0h2m5 0h4m3 0h5m2 0h1m2 0h8m4 0h3m1 0h2m1 0h2m2 0h4m20 0h10m7 0h4m8 0h4m1 0h6m1 0h6m3 0h4m6 0h10m2 0h5m3 0h37m-223 1h1m2 0h1m21 0h5m2 0h1m9 0h3m5 0h1m6 0h7m8 0h2m2 0h4m2 0h3m21 0h5m2 0h2m8 0h3m11 0h14m5 0h3m5 0h11m3 0h5m3 0h37m-222 1h3m2 0h3m16 0h2m1 0h2m2 0h1m8 0h4m5 0h1m6 0h3m1 0h1m10 0h3m2 0h7m12 0h2m4 0h1m2 0h8m1 0h3m6 0h4m11 0h8m1 0h3m5 0h4m5 0h11m2 0h7m2 0h17m1 0h17m-221 1h9m16 0h5m1 0h2m8 0h2m2 0h1m11 0h3m1 0h1m11 0h8m2 0h2m11 0h3m3 0h1m4 0h4m1 0h2m1 0h2m6 0h5m14 0h4m1 0h2m5 0h5m1 0h2m3 0h11m1 0h43m-227 1h1m5 0h2m6 0h1m17 0h9m7 0h2m13 0h4m1 0h1m3 0h1m2 0h2m4 0h7m1 0h4m10 0h4m7 0h2m4 0h1m2 0h1m7 0h4m15 0h5m7 0h8m2 0h5m2 0h23m2 0h23m2 0h2m-234 1h1m2 0h1m5 0h2m5 0h5m14 0h2m2 0h9m11 0h1m6 0h4m1 0h1m6 0h3m4 0h12m4 0h1m4 0h6m4 0h3m5 0h3m7 0h4m16 0h2m4 0h1m4 0h9m1 0h5m2 0h3m2 0h18m3 0h19m1 0h6m-234 1h2m1 0h3m3 0h6m6 0h1m13 0h1m9 0h5m9 0h1m5 0h5m1 0h1m6 0h4m2 0h3m1 0h9m4 0h2m6 0h2m5 0h3m11 0h1m3 0h5m14 0h4m2 0h3m4 0h14m3 0h1m4 0h17m2 0h27m-234 1h1m2 0h2m1 0h2m1 0h6m6 0h1m23 0h6m13 0h2m2 0h5m5 0h3m3 0h3m14 0h2m7 0h1m5 0h3m10 0h1m5 0h4m14 0h1m2 0h7m8 0h11m7 0h6m2 0h37m-234 1h1m2 0h2m3 0h7m5 0h1m26 0h3m18 0h2m1 0h4m3 0h3m4 0h2m14 0h4m4 0h11m9 0h1m5 0h6m11 0h1m3 0h7m1 0h2m4 0h13m6 0h6m2 0h37m-234 1h1m4 0h1m7 0h8m26 0h2m11 0h1m18 0h3m4 0h1m11 0h2m2 0h1m1 0h16m8 0h2m5 0h9m2 0h3m2 0h2m3 0h10m4 0h2m2 0h9m6 0h6m2 0h37m-234 1h3m3 0h1m6 0h3m5 0h1m10 0h1m2 0h2m10 0h2m11 0h3m17 0h2m4 0h4m1 0h1m6 0h1m3 0h1m2 0h14m10 0h1m5 0h2m2 0h2m1 0h1m3 0h2m3 0h2m3 0h10m9 0h8m7 0h1m5 0h5m2 0h31m-234 1h4m1 0h3m5 0h2m16 0h6m7 0h5m5 0h2m4 0h1m1 0h3m6 0h2m4 0h1m6 0h6m10 0h2m2 0h5m1 0h9m9 0h1m5 0h3m3 0h3m3 0h4m1 0h2m3 0h10m9 0h6m9 0h1m3 0h1m1 0h5m3 0h4m2 0h24m-229 1h2m6 0h2m29 0h4m6 0h1m5 0h1m2 0h3m5 0h1m5 0h2m5 0h2m14 0h1m2 0h2m1 0h1m4 0h1m1 0h7m7 0h2m5 0h2m5 0h2m2 0h2m3 0h5m6 0h5m1 0h13m10 0h3m2 0h6m2 0h5m3 0h23m-230 1h2m1 0h4m3 0h3m12 0h1m15 0h3m11 0h7m4 0h2m5 0h3m16 0h2m2 0h4m2 0h6m1 0h10m5 0h1m5 0h2m5 0h4m7 0h1m4 0h1m3 0h5m1 0h12m6 0h2m5 0h1m4 0h2m5 0h4m2 0h23m-233 1h2m2 0h8m1 0h8m8 0h1m16 0h1m7 0h1m3 0h3m4 0h1m4 0h2m2 0h7m15 0h2m2 0h3m5 0h6m3 0h5m1 0h1m10 0h2m5 0h3m7 0h1m5 0h1m4 0h13m2 0h1m1 0h4m9 0h1m12 0h7m1 0h4m5 0h10m-228 1h3m2 0h12m8 0h2m23 0h1m2 0h1m2 0h1m4 0h1m8 0h8m4 0h2m8 0h7m5 0h3m3 0h1m1 0h4m15 0h1m5 0h2m4 0h4m12 0h4m1 0h7m2 0h4m1 0h1m1 0h1m6 0h1m13 0h1m2 0h3m12 0h8m-227 1h2m4 0h12m1 0h3m4 0h1m25 0h6m3 0h1m9 0h2m2 0h3m4 0h1m8 0h7m6 0h3m4 0h2m18 0h3m3 0h1m4 0h1m15 0h3m6 0h2m10 0h1m6 0h1m3 0h1m10 0h1m3 0h2m12 0h2m-223 1h4m3 0h6m3 0h8m3 0h2m16 0h1m11 0h3m34 0h4m2 0h5m2 0h3m23 0h2m1 0h2m1 0h3m2 0h1m15 0h2m12 0h1m1 0h1m12 0h1m2 0h2m1 0h1m8 0h5m21 0h1m-232 1h6m1 0h4m17 0h2m10 0h2m13 0h1m2 0h6m31 0h3m3 0h5m2 0h4m23 0h1m2 0h8m10 0h2m3 0h2m11 0h1m6 0h2m1 0h1m6 0h7m4 0h1m3 0h3m22 0h1m-230 1h3m3 0h3m18 0h1m10 0h3m10 0h12m30 0h2m2 0h1m2 0h2m1 0h2m2 0h3m16 0h2m1 0h1m3 0h2m1 0h8m10 0h1m3 0h1m7 0h3m2 0h1m6 0h1m10 0h2m1 0h4m4 0h2m18 0h1m-221 1h3m3 0h3m37 0h1m4 0h12m9 0h2m18 0h7m1 0h2m1 0h1m9 0h3m16 0h1m4 0h7m11 0h1m8 0h1m3 0h1m1 0h1m17 0h3m4 0h1m4 0h3m-204 1h3m1 0h6m27 0h1m9 0h2m4 0h7m8 0h8m16 0h6m4 0h3m8 0h4m20 0h10m13 0h2m15 0h1m6 0h1m6 0h1m6 0h1m2 0h3m6 0h1m-213 1h5m2 0h1m2 0h4m15 0h1m3 0h2m3 0h2m16 0h5m20 0h2m11 0h5m5 0h3m7 0h2m1 0h2m21 0h3m3 0h2m15 0h2m9 0h1m26 0h1m2 0h2m19 0h2m-227 1h2m2 0h3m3 0h4m4 0h3m11 0h1m1 0h1m3 0h6m12 0h5m44 0h2m5 0h3m2 0h1m12 0h3m6 0h1m1 0h1m33 0h2m9 0h1m18 0h1m2 0h1m10 0h3m3 0h2m1 0h1m-229 1h1m4 0h2m1 0h1m1 0h3m4 0h1m15 0h2m3 0h2m1 0h1m2 0h1m13 0h3m6 0h2m44 0h2m1 0h2m11 0h3m7 0h1m1 0h1m4 0h1m5 0h2m9 0h1m4 0h1m6 0h1m9 0h1m2 0h3m15 0h3m2 0h2m5 0h1m2 0h1m4 0h3m-229 1h1m3 0h2m1 0h6m2 0h2m21 0h1m2 0h1m2 0h1m6 0h1m4 0h6m6 0h1m30 0h1m2 0h2m2 0h2m6 0h5m13 0h1m3 0h12m3 0h1m4 0h1m3 0h1m7 0h1m16 0h1m3 0h3m14 0h1m1 0h1m2 0h10m5 0h2m-228 1h2m2 0h13m14 0h1m5 0h8m5 0h4m2 0h7m39 0h7m8 0h7m11 0h1m1 0h10m7 0h1m6 0h1m4 0h1m1 0h1m7 0h1m7 0h3m3 0h3m7 0h1m5 0h2m6 0h3m8 0h3m-227 1h16m14 0h2m1 0h3m2 0h1m3 0h1m5 0h5m4 0h4m39 0h2m1 0h4m4 0h3m2 0h8m5 0h1m7 0h4m8 0h1m2 0h5m3 0h4m3 0h1m16 0h2m3 0h1m8 0h1m6 0h1m8 0h2m8 0h3m-228 1h4m4 0h1m5 0h3m13 0h6m7 0h2m4 0h4m5 0h2m42 0h1m3 0h2m4 0h7m1 0h3m1 0h3m12 0h2m8 0h1m1 0h1m2 0h4m5 0h5m20 0h2m11 0h1m12 0h3m8 0h2m3 0h3m-233 1h2m7 0h3m3 0h3m11 0h6m8 0h3m4 0h3m6 0h1m34 0h2m1 0h3m2 0h1m2 0h4m2 0h12m2 0h1m9 0h1m13 0h1m1 0h1m2 0h3m35 0h1m15 0h1m4 0h2m1 0h1m12 0h1m2 0h2m-234 1h2m7 0h1m1 0h2m2 0h4m9 0h6m5 0h7m46 0h11m2 0h7m2 0h10m13 0h1m2 0h1m6 0h2m2 0h4m36 0h1m15 0h1m3 0h7m11 0h1m2 0h2m-234 1h3m6 0h2m2 0h8m9 0h7m3 0h6m10 0h3m30 0h14m2 0h13m2 0h6m13 0h1m1 0h1m10 0h1m3 0h2m13 0h1m20 0h1m13 0h2m2 0h2m1 0h6m10 0h4m-232 1h1m2 0h2m4 0h1m4 0h6m11 0h4m4 0h3m13 0h2m5 0h2m15 0h1m7 0h14m2 0h3m2 0h5m7 0h1m18 0h1m51 0h3m7 0h1m2 0h3m2 0h1m2 0h1m1 0h5m4 0h1m5 0h2m-231 1h1m2 0h1m1 0h1m3 0h2m4 0h5m42 0h3m14 0h2m6 0h25m4 0h4m2 0h1m42 0h2m25 0h3m7 0h1m1 0h2m4 0h7m6 0h4m3 0h2m-228 1h1m4 0h10m43 0h3m15 0h1m6 0h24m5 0h1m1 0h2m1 0h1m6 0h1m36 0h2m6 0h2m3 0h3m16 0h1m4 0h1m1 0h3m4 0h5m3 0h2m2 0h5m2 0h3m-232 1h1m3 0h1m3 0h6m1 0h2m45 0h1m24 0h23m7 0h1m9 0h1m5 0h1m1 0h1m7 0h1m8 0h1m5 0h1m13 0h6m1 0h1m21 0h6m2 0h3m5 0h2m1 0h7m3 0h2m-232 1h1m4 0h2m1 0h6m1 0h3m68 0h24m4 0h4m4 0h1m1 0h4m5 0h3m18 0h5m8 0h3m2 0h8m15 0h1m3 0h3m2 0h2m3 0h3m4 0h2m6 0h1m-221 1h1m2 0h12m64 0h27m2 0h3m1 0h2m1 0h1m5 0h3m5 0h1m20 0h4m9 0h3m2 0h2m21 0h1m4 0h1m4 0h1m4 0h3m2 0h2m7 0h1m-218 1h2m2 0h5m2 0h1m64 0h32m10 0h2m29 0h1m11 0h2m25 0h1m8 0h2m1 0h2m2 0h2m2 0h3m6 0h1m-213 1h1m1 0h4m41 0h2m22 0h31m3 0h1m4 0h1m38 0h1m45 0h2m3 0h7m4 0h2m-218 1h1m50 0h4m10 0h3m9 0h1m3 0h18m2 0h8m6 0h1m1 0h1m36 0h1m45 0h1m5 0h1m1 0h1m1 0h2m2 0h4m-167 1h4m10 0h4m3 0h1m8 0h9m2 0h19m5 0h3m2 0h1m21 0h1m11 0h1m7 0h3m25 0h1m2 0h1m5 0h1m5 0h3m1 0h3m3 0h3m-221 1h1m57 0h1m6 0h3m2 0h1m2 0h3m7 0h27m10 0h1m1 0h3m19 0h2m11 0h1m5 0h2m2 0h1m4 0h2m16 0h2m10 0h2m2 0h5m2 0h1m4 0h2m1 0h1m4 0h1m-227 1h2m4 0h1m51 0h2m4 0h13m6 0h23m5 0h1m7 0h1m3 0h2m36 0h3m2 0h2m3 0h3m2 0h2m3 0h1m9 0h2m13 0h2m5 0h1m4 0h1m2 0h2m3 0h1m-234 1h1m6 0h1m6 0h1m50 0h2m2 0h3m1 0h3m3 0h7m6 0h17m2 0h2m4 0h1m12 0h1m24 0h1m6 0h2m4 0h3m2 0h2m2 0h2m1 0h1m2 0h2m1 0h1m2 0h1m9 0h1m3 0h1m14 0h2m4 0h1m3 0h3m-229 1h1m5 0h1m5 0h1m4 0h1m9 0h2m19 0h1m15 0h1m2 0h3m2 0h2m3 0h8m5 0h18m1 0h1m50 0h3m3 0h3m3 0h2m1 0h2m2 0h1m3 0h2m2 0h2m27 0h3m3 0h1m2 0h2m1 0h1m-227 1h3m12 0h3m8 0h1m12 0h3m10 0h1m12 0h3m2 0h1m4 0h8m6 0h17m51 0h4m3 0h3m3 0h1m2 0h2m2 0h2m1 0h5m2 0h1m32 0h5m1 0h1m-218 1h1m4 0h1m2 0h1m14 0h3m4 0h3m10 0h1m12 0h8m3 0h10m3 0h11m1 0h5m2 0h3m46 0h4m2 0h3m4 0h1m2 0h3m1 0h1m2 0h3m4 0h1m12 0h1m23 0h3m-216 1h1m1 0h1m4 0h4m10 0h1m2 0h1m3 0h3m23 0h9m1 0h7m1 0h3m3 0h11m1 0h3m3 0h1m4 0h1m28 0h5m8 0h2m1 0h11m2 0h1m10 0h2m4 0h1m35 0h3m-218 1h1m1 0h5m3 0h5m9 0h6m19 0h5m3 0h12m1 0h3m4 0h1m2 0h11m2 0h2m13 0h1m24 0h1m11 0h4m2 0h4m1 0h1m4 0h1m11 0h4m2 0h1m12 0h1m23 0h1m3 0h1m-221 1h1m1 0h2m3 0h9m12 0h2m15 0h1m3 0h3m1 0h2m2 0h5m4 0h1m4 0h2m5 0h9m2 0h6m13 0h1m24 0h1m12 0h3m5 0h1m1 0h2m15 0h2m2 0h3m13 0h1m19 0h1m6 0h2m-227 1h2m4 0h3m4 0h8m25 0h6m3 0h2m2 0h4m2 0h2m9 0h3m5 0h7m3 0h9m9 0h1m21 0h1m2 0h2m13 0h1m6 0h1m2 0h1m6 0h4m5 0h2m3 0h1m7 0h1m6 0h1m18 0h3m5 0h2m-214 1h2m3 0h4m24 0h5m1 0h5m7 0h3m8 0h5m4 0h9m1 0h2m2 0h5m25 0h1m5 0h5m20 0h1m2 0h1m5 0h1m1 0h2m1 0h1m4 0h3m6 0h2m2 0h1m25 0h3m4 0h3m-234 1h1m19 0h1m3 0h7m23 0h1m2 0h1m2 0h3m1 0h1m5 0h7m5 0h5m5 0h11m2 0h5m8 0h1m14 0h4m4 0h1m24 0h1m2 0h1m11 0h1m4 0h3m5 0h1m1 0h2m26 0h3m4 0h3m-221 1h1m6 0h1m2 0h2m5 0h1m20 0h2m4 0h2m1 0h3m1 0h2m4 0h1m1 0h6m3 0h5m6 0h17m9 0h1m14 0h3m4 0h3m14 0h2m4 0h4m2 0h2m18 0h1m4 0h1m1 0h2m29 0h1m3 0h3m-223 1h4m5 0h1m2 0h2m7 0h2m17 0h3m3 0h2m2 0h2m1 0h3m3 0h1m1 0h5m3 0h8m3 0h1m3 0h4m2 0h7m9 0h1m15 0h3m4 0h3m13 0h4m3 0h10m16 0h2m4 0h3m11 0h1m13 0h1m4 0h1m2 0h3m-216 1h2m3 0h2m6 0h4m16 0h3m2 0h3m5 0h4m3 0h5m2 0h2m3 0h7m5 0h6m5 0h2m4 0h1m20 0h4m2 0h2m1 0h1m13 0h2m1 0h1m3 0h1m6 0h2m16 0h4m4 0h1m3 0h1m12 0h1m6 0h4m5 0h5m-211 1h5m3 0h4m20 0h4m5 0h4m4 0h4m1 0h2m4 0h6m9 0h3m5 0h3m23 0h12m7 0h2m4 0h1m1 0h2m25 0h1m1 0h6m2 0h1m3 0h1m16 0h7m7 0h3m-232 1h2m16 0h8m3 0h1m1 0h2m12 0h1m8 0h7m1 0h5m3 0h9m2 0h3m1 0h3m8 0h3m4 0h3m24 0h1m2 0h3m2 0h3m1 0h1m6 0h2m35 0h3m2 0h1m5 0h1m14 0h1m1 0h1m1 0h5m3 0h1m5 0h2m-232 1h6m11 0h6m2 0h2m2 0h5m11 0h2m7 0h13m3 0h1m1 0h11m2 0h4m6 0h4m4 0h1m27 0h1m2 0h2m3 0h1m3 0h1m41 0h4m2 0h1m20 0h3m2 0h3m4 0h1m6 0h1m-229 1h2m2 0h1m8 0h1m1 0h4m3 0h10m10 0h4m5 0h2m3 0h4m3 0h1m3 0h7m2 0h3m4 0h1m1 0h2m5 0h8m9 0h3m17 0h4m7 0h3m13 0h3m22 0h1m2 0h5m2 0h3m3 0h2m11 0h2m3 0h1m4 0h1m4 0h4m-229 1h2m13 0h17m10 0h10m4 0h4m3 0h1m4 0h4m4 0h3m4 0h1m1 0h2m6 0h1m1 0h3m26 0h1m4 0h4m6 0h1m17 0h2m3 0h3m17 0h7m2 0h2m1 0h1m2 0h3m10 0h3m2 0h1m4 0h1m4 0h1m2 0h1m-227 1h1m1 0h1m8 0h10m3 0h6m9 0h7m1 0h4m3 0h4m3 0h2m10 0h5m4 0h2m10 0h1m18 0h4m3 0h4m2 0h5m6 0h1m22 0h1m1 0h2m20 0h1m2 0h1m5 0h4m3 0h2m6 0h2m1 0h3m4 0h1m4 0h1m2 0h1m-234 1h1m3 0h1m3 0h1m11 0h3m1 0h3m4 0h7m12 0h2m2 0h4m3 0h4m3 0h3m3 0h2m3 0h6m8 0h5m2 0h1m19 0h14m2 0h3m5 0h1m22 0h2m1 0h1m23 0h2m4 0h3m6 0h2m5 0h1m2 0h3m3 0h3m3 0h2m-233 1h1m3 0h1m7 0h1m8 0h7m6 0h6m11 0h4m8 0h2m5 0h6m2 0h3m2 0h3m8 0h4m1 0h2m19 0h13m3 0h3m4 0h1m12 0h3m9 0h3m19 0h2m2 0h1m4 0h4m4 0h1m2 0h2m4 0h1m2 0h1m2 0h1m1 0h2m3 0h1m1 0h1m-232 1h2m2 0h2m5 0h3m8 0h6m6 0h6m11 0h4m8 0h2m8 0h13m14 0h3m17 0h13m3 0h4m3 0h1m13 0h3m5 0h2m2 0h2m19 0h2m2 0h1m4 0h5m3 0h1m2 0h2m5 0h3m3 0h3m3 0h5m-234 1h7m3 0h2m1 0h1m7 0h9m1 0h6m8 0h2m3 0h4m6 0h4m3 0h2m4 0h12m16 0h2m6 0h1m5 0h2m3 0h1m7 0h5m3 0h8m20 0h1m1 0h1m2 0h5m16 0h2m2 0h1m4 0h2m6 0h1m2 0h1m2 0h1m3 0h3m5 0h2m-227 1h3m3 0h5m2 0h1m7 0h3m1 0h11m9 0h2m2 0h6m3 0h7m2 0h3m4 0h12m16 0h1m6 0h2m4 0h2m3 0h1m7 0h4m3 0h2m5 0h2m20 0h4m1 0h1m3 0h1m11 0h2m2 0h5m11 0h1m1 0h4m7 0h2m5 0h2m-227 1h2m4 0h5m1 0h2m3 0h7m2 0h4m1 0h4m11 0h2m1 0h6m2 0h13m5 0h15m11 0h1m5 0h1m1 0h1m1 0h1m8 0h2m6 0h4m1 0h4m6 0h2m20 0h5m3 0h2m2 0h3m5 0h1m1 0h6m2 0h4m3 0h1m2 0h5m6 0h4m5 0h4m4 0h1m-234 1h1m5 0h8m2 0h1m5 0h2m2 0h4m1 0h4m12 0h1m1 0h5m3 0h24m1 0h9m5 0h5m8 0h1m1 0h1m3 0h1m12 0h10m5 0h1m3 0h1m18 0h13m6 0h4m5 0h3m4 0h2m1 0h4m8 0h4m8 0h1m3 0h2m-227 1h4m3 0h1m8 0h6m2 0h4m14 0h5m3 0h24m2 0h16m6 0h1m5 0h1m2 0h2m7 0h1m4 0h10m28 0h4m1 0h2m3 0h2m16 0h3m2 0h4m1 0h4m9 0h1m11 0h5m-232 1h3m9 0h1m8 0h4m13 0h1m5 0h1m2 0h5m4 0h8m2 0h31m13 0h1m15 0h10m27 0h3m3 0h2m2 0h2m12 0h1m2 0h4m3 0h9m17 0h3m5 0h1m-234 1h5m20 0h3m11 0h3m3 0h3m1 0h2m1 0h4m8 0h7m1 0h28m11 0h2m15 0h2m2 0h4m24 0h1m4 0h2m4 0h4m1 0h3m5 0h1m3 0h2m2 0h4m4 0h3m2 0h4m16 0h1m2 0h1m4 0h1m-234 1h5m10 0h1m10 0h4m4 0h9m2 0h6m4 0h3m4 0h28m2 0h3m3 0h1m18 0h1m8 0h1m1 0h1m4 0h3m25 0h1m10 0h2m1 0h2m2 0h1m3 0h3m2 0h2m2 0h3m5 0h3m2 0h3m1 0h1m15 0h1m3 0h1m-227 1h2m10 0h2m4 0h1m4 0h4m2 0h11m3 0h4m6 0h3m3 0h5m1 0h17m2 0h3m8 0h1m17 0h6m3 0h5m3 0h3m36 0h3m4 0h1m2 0h13m8 0h5m18 0h3m-226 1h5m8 0h2m5 0h1m2 0h4m2 0h12m2 0h4m6 0h5m1 0h7m1 0h5m1 0h15m8 0h2m11 0h1m4 0h13m3 0h3m33 0h3m7 0h4m3 0h4m13 0h2m2 0h1m19 0h5m-229 1h5m9 0h1m2 0h1m7 0h17m1 0h5m6 0h5m2 0h5m2 0h2m3 0h1m2 0h10m2 0h1m15 0h2m2 0h3m3 0h11m1 0h7m30 0h6m7 0h2m6 0h3m4 0h2m7 0h3m1 0h4m3 0h1m1 0h3m8 0h1m3 0h2m-228 1h2m21 0h12m3 0h8m5 0h6m3 0h8m3 0h1m2 0h10m2 0h2m13 0h4m1 0h3m2 0h4m6 0h1m3 0h6m30 0h3m2 0h1m6 0h1m2 0h1m4 0h5m2 0h3m8 0h4m2 0h1m2 0h2m1 0h2m1 0h1m7 0h1m2 0h4m-222 1h2m13 0h13m2 0h8m3 0h7m1 0h2m1 0h9m3 0h1m2 0h10m3 0h2m2 0h2m7 0h5m1 0h3m2 0h4m6 0h1m3 0h3m9 0h1m24 0h1m3 0h1m9 0h6m1 0h4m3 0h1m7 0h12m1 0h1m3 0h1m6 0h1m1 0h2m1 0h2m-222 1h3m11 0h1m2 0h7m3 0h10m4 0h6m3 0h12m5 0h2m2 0h7m2 0h2m1 0h1m6 0h8m1 0h3m2 0h4m5 0h2m2 0h4m45 0h1m1 0h4m5 0h2m4 0h1m6 0h4m3 0h2m2 0h4m4 0h1m5 0h7m-220 1h1m17 0h3m5 0h4m1 0h14m3 0h14m3 0h2m4 0h11m5 0h9m1 0h2m4 0h5m2 0h9m6 0h2m22 0h4m4 0h1m7 0h3m1 0h1m7 0h1m2 0h2m3 0h1m21 0h1m4 0h3m1 0h1m2 0h1m-223 1h3m11 0h1m7 0h2m6 0h3m2 0h11m4 0h3m4 0h9m1 0h4m3 0h9m6 0h2m3 0h1m2 0h2m1 0h2m5 0h16m5 0h3m21 0h2m1 0h1m4 0h2m7 0h2m2 0h1m8 0h1m27 0h1m4 0h5m2 0h1m-228 1h2m3 0h3m5 0h1m3 0h3m3 0h2m2 0h1m7 0h3m2 0h11m3 0h3m6 0h2m1 0h9m3 0h9m6 0h2m7 0h5m5 0h10m2 0h5m3 0h4m22 0h10m6 0h1m2 0h1m2 0h2m6 0h2m21 0h1m3 0h6m2 0h1m3 0h1m-229 1h8m7 0h1m2 0h3m1 0h4m2 0h1m7 0h14m1 0h1m2 0h4m7 0h1m2 0h8m3 0h9m6 0h2m7 0h5m4 0h2m2 0h7m2 0h2m1 0h2m1 0h5m25 0h2m2 0h5m5 0h3m11 0h3m20 0h1m5 0h4m5 0h2m-230 1h9m7 0h7m1 0h2m3 0h2m6 0h7m2 0h12m12 0h6m4 0h9m4 0h3m8 0h5m4 0h2m2 0h7m2 0h11m22 0h2m2 0h1m3 0h4m2 0h2m2 0h1m13 0h2m18 0h3m6 0h5m4 0h1m-234 1h1m2 0h7m11 0h6m4 0h5m6 0h7m2 0h11m5 0h3m3 0h6m7 0h3m9 0h2m1 0h3m3 0h6m5 0h1m2 0h3m1 0h3m2 0h9m24 0h5m3 0h4m2 0h1m18 0h2m17 0h3m8 0h3m4 0h1m-234 1h7m2 0h1m11 0h1m3 0h12m5 0h2m1 0h5m2 0h10m4 0h4m3 0h5m9 0h1m5 0h1m4 0h6m2 0h3m2 0h2m5 0h2m2 0h2m1 0h13m25 0h1m7 0h4m2 0h1m4 0h1m14 0h5m11 0h2m12 0h1m3 0h3m-231 1h3m2 0h1m12 0h1m3 0h36m3 0h1m1 0h5m1 0h4m5 0h2m9 0h1m5 0h4m1 0h2m1 0h3m10 0h1m1 0h15m28 0h1m3 0h1m5 0h4m4 0h1m14 0h3m1 0h1m11 0h2m3 0h3m5 0h2m2 0h2m-228 1h4m11 0h43m1 0h2m2 0h9m4 0h3m8 0h1m7 0h6m1 0h2m11 0h17m29 0h5m5 0h3m4 0h1m14 0h5m16 0h1m1 0h1m5 0h2m2 0h2m1 0h1m-231 1h6m10 0h21m2 0h22m3 0h6m1 0h9m4 0h5m6 0h2m1 0h3m2 0h2m11 0h12m1 0h4m21 0h1m9 0h3m5 0h7m24 0h3m9 0h1m1 0h1m5 0h2m3 0h3m-231 1h4m1 0h1m9 0h3m1 0h11m2 0h26m1 0h2m2 0h15m7 0h4m6 0h7m1 0h2m4 0h1m6 0h4m3 0h3m4 0h2m21 0h5m6 0h2m6 0h7m4 0h3m1 0h1m15 0h2m10 0h3m6 0h1m4 0h2m-231 1h3m3 0h1m5 0h6m1 0h10m5 0h6m3 0h3m1 0h11m2 0h2m1 0h9m13 0h3m8 0h7m6 0h1m6 0h3m2 0h2m7 0h1m11 0h1m11 0h5m4 0h7m3 0h6m4 0h1m1 0h5m13 0h2m12 0h1m11 0h2m-234 1h2m1 0h2m4 0h1m6 0h16m9 0h2m3 0h3m2 0h11m1 0h12m11 0h4m10 0h3m2 0h2m5 0h2m4 0h2m3 0h4m7 0h1m8 0h3m14 0h13m5 0h6m2 0h10m1 0h3m32 0h2m-234 1h1m7 0h2m7 0h1m1 0h7m1 0h5m9 0h3m2 0h3m2 0h11m2 0h12m9 0h5m11 0h2m2 0h2m16 0h3m7 0h3m7 0h4m15 0h11m4 0h6m4 0h2m2 0h5m1 0h1m2 0h1m30 0h2m-233 1h1m6 0h2m11 0h4m3 0h6m8 0h19m5 0h13m1 0h3m3 0h5m11 0h6m16 0h2m8 0h4m7 0h1m9 0h1m7 0h6m1 0h4m4 0h6m4 0h2m2 0h7m1 0h2m19 0h2m9 0h2m-225 1h1m8 0h1m2 0h3m4 0h7m7 0h19m7 0h6m1 0h9m2 0h1m15 0h6m15 0h3m5 0h3m1 0h3m28 0h4m2 0h2m3 0h2m1 0h4m4 0h13m21 0h1m9 0h3m-229 1h1m2 0h1m8 0h3m1 0h7m3 0h2m2 0h2m4 0h14m2 0h3m6 0h6m2 0h9m2 0h1m14 0h7m14 0h4m4 0h4m2 0h2m21 0h3m4 0h4m1 0h4m2 0h7m3 0h6m3 0h3m7 0h2m23 0h4m-230 1h5m9 0h2m2 0h5m7 0h4m4 0h8m1 0h4m1 0h16m2 0h9m2 0h1m14 0h7m3 0h4m2 0h1m6 0h3m4 0h2m7 0h1m16 0h5m4 0h7m1 0h2m3 0h5m2 0h8m2 0h2m8 0h2m21 0h6m-234 1h2m1 0h5m4 0h4m1 0h3m2 0h8m4 0h3m5 0h7m4 0h15m2 0h4m5 0h6m14 0h8m2 0h5m2 0h2m6 0h3m3 0h3m3 0h4m14 0h8m3 0h3m1 0h3m1 0h3m3 0h3m4 0h7m3 0h3m6 0h3m6 0h2m12 0h6m-234 1h8m3 0h1m1 0h7m2 0h11m1 0h3m7 0h4m3 0h4m3 0h10m4 0h2m5 0h6m13 0h9m2 0h4m3 0h3m6 0h1m4 0h1m1 0h5m15 0h28m8 0h5m3 0h4m4 0h2m2 0h2m4 0h3m12 0h5m-234 1h9m2 0h8m2 0h4m1 0h8m11 0h10m4 0h9m4 0h3m3 0h2m1 0h4m10 0h12m2 0h3m3 0h5m10 0h1m3 0h2m3 0h1m7 0h33m7 0h13m3 0h3m3 0h3m2 0h5m3 0h2m6 0h3m-232 1h5m2 0h1m3 0h7m2 0h4m1 0h14m5 0h12m1 0h7m3 0h8m1 0h3m1 0h5m8 0h18m2 0h5m2 0h2m7 0h1m10 0h1m5 0h9m1 0h17m2 0h6m4 0h14m3 0h3m3 0h16m5 0h3m-231 1h4m1 0h3m2 0h4m5 0h9m3 0h8m5 0h1m3 0h15m3 0h7m1 0h10m8 0h12m1 0h3m3 0h4m5 0h3m3 0h5m9 0h1m4 0h18m1 0h7m4 0h23m3 0h2m3 0h17m4 0h3m-230 1h8m6 0h2m6 0h3m9 0h7m2 0h2m1 0h7m1 0h9m2 0h10m17 0h5m2 0h9m3 0h4m5 0h4m2 0h5m9 0h1m4 0h1m1 0h24m4 0h5m1 0h11m2 0h5m7 0h19m1 0h4m-231 1h9m2 0h7m17 0h18m3 0h11m5 0h2m18 0h5m4 0h2m1 0h13m3 0h1m2 0h1m3 0h5m9 0h2m9 0h20m3 0h5m3 0h5m2 0h3m2 0h5m7 0h24m-232 1h7m6 0h6m17 0h10m1 0h1m2 0h1m3 0h2m2 0h10m5 0h2m16 0h7m4 0h3m1 0h12m2 0h2m6 0h4m2 0h1m5 0h5m9 0h19m3 0h4m4 0h5m2 0h7m9 0h2m3 0h20m-233 1h3m13 0h4m18 0h1m2 0h6m1 0h1m2 0h2m2 0h9m3 0h2m2 0h2m2 0h1m13 0h10m4 0h14m4 0h3m2 0h8m1 0h2m3 0h1m2 0h3m9 0h4m2 0h19m5 0h14m14 0h5m2 0h14m-236 1h1m15 0h1m1 0h4m10 0h2m5 0h2m2 0h6m1 0h6m1 0h4m8 0h6m2 0h1m5 0h5m3 0h3m3 0h8m1 0h12m4 0h11m1 0h2m6 0h1m2 0h2m2 0h4m2 0h5m2 0h19m8 0h9m2 0h4m11 0h20m-221 1h7m6 0h2m3 0h2m4 0h3m2 0h6m2 0h4m3 0h4m3 0h2m3 0h1m3 0h4m4 0h6m3 0h14m3 0h9m4 0h12m2 0h1m6 0h1m2 0h2m2 0h5m1 0h5m1 0h8m1 0h10m9 0h4m3 0h2m2 0h4m11 0h8m2 0h12m-240 1h1m13 0h19m2 0h3m3 0h10m4 0h4m1 0h5m3 0h3m2 0h1m10 0h8m2 0h15m2 0h9m4 0h16m5 0h1m2 0h2m2 0h19m3 0h4m7 0h3m5 0h1m1 0h1m3 0h9m6 0h12m3 0h5m1 0h5m-240 1h2m3 0h3m5 0h1m1 0h4m1 0h5m1 0h13m2 0h9m5 0h10m3 0h4m12 0h2m1 0h15m5 0h14m2 0h6m1 0h10m5 0h5m2 0h2m2 0h14m4 0h5m5 0h5m3 0h2m1 0h1m3 0h9m6 0h12m4 0h3m3 0h4m-241 1h4m1 0h2m3 0h1m6 0h6m5 0h22m5 0h5m3 0h9m12 0h12m1 0h6m5 0h20m4 0h9m6 0h4m6 0h14m2 0h23m4 0h3m3 0h4m4 0h13m3 0h6m1 0h4m-241 1h1m2 0h3m5 0h1m4 0h7m5 0h1m4 0h15m4 0h8m3 0h7m4 0h1m8 0h13m1 0h30m5 0h9m6 0h6m4 0h8m1 0h4m2 0h11m1 0h7m1 0h3m4 0h3m5 0h3m3 0h14m2 0h12m-239 1h1m8 0h1m3 0h14m5 0h8m9 0h2m2 0h6m1 0h13m5 0h16m1 0h13m1 0h17m3 0h11m5 0h7m2 0h9m1 0h5m1 0h9m5 0h4m2 0h3m4 0h3m4 0h19m3 0h3m1 0h9m-239 1h2m7 0h1m2 0h2m1 0h1m3 0h8m5 0h5m12 0h24m2 0h2m5 0h26m1 0h30m6 0h33m7 0h9m1 0h6m2 0h20m3 0h13m-230 1h2m1 0h2m1 0h2m3 0h7m2 0h1m3 0h2m18 0h7m2 0h13m9 0h2m2 0h36m2 0h12m7 0h21m2 0h10m5 0h27m3 0h11m2 0h13m-242 1h3m9 0h8m5 0h8m3 0h2m13 0h1m4 0h7m2 0h12m13 0h22m4 0h10m2 0h13m8 0h2m2 0h15m4 0h8m4 0h23m1 0h6m3 0h4m2 0h4m2 0h12m-236 1h1m7 0h7m6 0h7m2 0h3m3 0h4m6 0h1m4 0h10m3 0h4m9 0h2m6 0h2m6 0h13m5 0h3m1 0h6m1 0h14m7 0h3m1 0h16m3 0h9m3 0h38m3 0h3m3 0h8m-225 1h8m5 0h7m2 0h2m4 0h2m2 0h8m2 0h11m3 0h4m10 0h9m7 0h12m2 0h6m1 0h21m6 0h21m3 0h10m2 0h7m2 0h28m10 0h8m-232 1h1m6 0h10m7 0h7m4 0h2m5 0h25m10 0h2m1 0h5m8 0h1m2 0h9m1 0h29m6 0h22m2 0h4m2 0h4m3 0h6m3 0h26m3 0h1m4 0h11m-236 1h2m2 0h2m5 0h10m7 0h3m7 0h2m7 0h8m1 0h14m15 0h4m4 0h5m2 0h15m5 0h11m2 0h6m6 0h8m3 0h2m3 0h3m2 0h2m1 0h4m2 0h3m4 0h6m3 0h11m1 0h28m-231 1h2m3 0h2m4 0h20m3 0h6m7 0h4m3 0h1m1 0h10m1 0h3m22 0h17m1 0h5m5 0h12m1 0h4m1 0h2m1 0h1m3 0h8m3 0h2m3 0h3m2 0h8m8 0h20m1 0h2m2 0h20m2 0h2m8 0h1m-239 1h1m3 0h1m3 0h3m2 0h9m2 0h4m1 0h4m2 0h2m9 0h4m3 0h12m25 0h18m1 0h5m5 0h18m7 0h4m6 0h3m3 0h3m3 0h9m2 0h2m3 0h22m3 0h19m2 0h5m3 0h3m-237 1h3m3 0h3m2 0h6m5 0h3m18 0h13m1 0h4m26 0h27m4 0h1m3 0h3m2 0h8m2 0h2m4 0h3m5 0h3m3 0h10m2 0h5m1 0h2m3 0h23m2 0h13m2 0h4m3 0h6m1 0h2m-237 1h3m4 0h11m5 0h3m18 0h12m2 0h3m27 0h9m1 0h17m3 0h2m4 0h2m2 0h12m4 0h3m5 0h17m2 0h7m2 0h3m1 0h11m1 0h23m2 0h5m2 0h10m-238 1h2m5 0h10m6 0h3m5 0h1m12 0h3m1 0h7m4 0h6m22 0h29m1 0h4m3 0h3m1 0h13m4 0h2m4 0h13m2 0h12m1 0h7m1 0h31m4 0h5m2 0h9m-238 1h2m4 0h1m3 0h5m8 0h3m12 0h5m1 0h3m1 0h2m3 0h2m4 0h5m23 0h5m1 0h18m1 0h10m2 0h4m4 0h9m5 0h1m3 0h8m1 0h5m3 0h52m3 0h5m5 0h2m-240 1h1m4 0h5m2 0h1m3 0h4m9 0h2m8 0h1m3 0h6m1 0h3m1 0h2m3 0h2m4 0h5m25 0h19m5 0h9m3 0h3m4 0h7m7 0h1m2 0h9m1 0h6m2 0h58m1 0h2m3 0h3m-240 1h1m4 0h6m1 0h7m10 0h3m7 0h17m2 0h4m3 0h4m27 0h18m4 0h11m1 0h5m2 0h8m6 0h1m2 0h11m1 0h5m2 0h58m2 0h2m1 0h2m1 0h2m2 0h1m-241 1h5m2 0h9m9 0h4m2 0h4m1 0h6m2 0h16m2 0h3m28 0h18m4 0h21m2 0h4m5 0h1m2 0h12m1 0h3m3 0h3m2 0h20m1 0h5m3 0h16m2 0h20m-242 1h1m1 0h5m1 0h5m5 0h2m7 0h1m4 0h11m2 0h16m3 0h2m29 0h1m2 0h8m1 0h5m2 0h7m1 0h9m1 0h3m5 0h3m3 0h3m2 0h16m3 0h4m1 0h8m2 0h9m1 0h6m2 0h17m3 0h2m2 0h13m1 0h1m-243 1h1m5 0h7m5 0h4m6 0h1m5 0h25m1 0h2m38 0h7m4 0h21m1 0h2m5 0h5m4 0h19m3 0h10m1 0h2m2 0h36m2 0h2m3 0h8m-234 1h1m3 0h6m1 0h1m2 0h7m4 0h1m5 0h22m34 0h2m3 0h2m6 0h3m5 0h21m7 0h6m4 0h19m3 0h10m1 0h2m1 0h25m1 0h15m4 0h7m-234 1h1m2 0h2m2 0h7m4 0h4m3 0h2m3 0h22m35 0h3m2 0h2m14 0h1m3 0h17m7 0h3m2 0h1m4 0h18m5 0h36m4 0h14m4 0h7m-234 1h1m3 0h1m2 0h4m6 0h11m1 0h20m38 0h8m2 0h1m8 0h1m5 0h10m1 0h6m3 0h1m4 0h1m3 0h1m3 0h20m4 0h16m1 0h10m2 0h7m5 0h4m2 0h2m2 0h17m-237 1h1m3 0h6m7 0h31m39 0h8m2 0h1m7 0h2m5 0h7m5 0h5m2 0h2m4 0h1m3 0h1m6 0h17m4 0h6m1 0h8m3 0h18m6 0h3m2 0h1m3 0h18m-239 1h2m3 0h5m3 0h2m3 0h2m3 0h11m4 0h2m1 0h7m41 0h8m9 0h2m3 0h8m8 0h3m2 0h3m2 0h2m1 0h3m4 0h19m3 0h20m2 0h2m1 0h13m5 0h3m1 0h23m-239 1h1m6 0h3m2 0h4m2 0h3m3 0h6m8 0h12m5 0h3m33 0h3m1 0h2m9 0h2m2 0h9m2 0h14m3 0h5m6 0h13m2 0h3m1 0h21m3 0h1m3 0h6m1 0h5m3 0h27m-227 1h5m3 0h3m1 0h7m3 0h2m1 0h15m3 0h5m33 0h4m10 0h2m1 0h9m3 0h15m4 0h3m6 0h1m2 0h10m2 0h26m2 0h1m6 0h8m3 0h27m-227 1h6m3 0h3m1 0h3m2 0h2m3 0h1m3 0h6m2 0h2m1 0h4m2 0h2m2 0h2m5 0h1m25 0h5m9 0h2m3 0h26m6 0h1m7 0h1m1 0h10m1 0h27m2 0h1m2 0h1m3 0h7m4 0h27m-235 1h2m7 0h6m2 0h8m1 0h2m5 0h12m2 0h3m3 0h5m4 0h3m23 0h5m9 0h1m9 0h10m2 0h2m2 0h6m6 0h3m6 0h40m3 0h3m2 0h7m3 0h5m1 0h17m2 0h1m-232 1h1m7 0h12m2 0h7m3 0h4m2 0h11m4 0h4m4 0h4m2 0h1m19 0h5m14 0h1m4 0h10m2 0h10m5 0h5m6 0h10m5 0h9m2 0h13m4 0h12m2 0h3m4 0h8m1 0h7m-228 1h1m7 0h7m7 0h7m1 0h18m7 0h2m3 0h4m2 0h1m18 0h5m14 0h3m3 0h9m2 0h11m5 0h1m2 0h2m6 0h10m6 0h1m5 0h2m2 0h13m5 0h12m2 0h2m4 0h7m3 0h6m2 0h1m-230 1h1m5 0h8m3 0h10m2 0h8m3 0h7m12 0h4m20 0h6m1 0h3m11 0h3m4 0h4m4 0h12m4 0h2m2 0h2m9 0h9m4 0h2m5 0h2m2 0h12m11 0h6m2 0h13m3 0h9m-228 1h1m2 0h9m2 0h7m1 0h3m3 0h3m2 0h1m4 0h4m1 0h5m6 0h1m7 0h2m19 0h4m2 0h2m5 0h2m4 0h4m3 0h4m1 0h15m2 0h4m13 0h10m3 0h1m6 0h1m3 0h12m11 0h5m3 0h3m1 0h21m-226 1h9m2 0h3m1 0h3m3 0h2m3 0h3m2 0h2m3 0h6m4 0h1m2 0h4m4 0h1m3 0h1m19 0h4m2 0h1m5 0h3m7 0h2m2 0h12m2 0h6m1 0h3m13 0h5m1 0h8m7 0h2m3 0h12m10 0h6m3 0h3m1 0h20m-222 1h6m1 0h7m4 0h9m2 0h8m6 0h2m1 0h4m3 0h3m11 0h3m5 0h5m1 0h4m4 0h5m6 0h16m3 0h8m9 0h1m2 0h7m3 0h6m3 0h6m3 0h14m7 0h13m2 0h19m3 0h1m-226 1h15m1 0h11m3 0h5m6 0h3m1 0h4m3 0h4m3 0h2m6 0h2m5 0h5m2 0h4m3 0h6m6 0h11m2 0h4m1 0h8m5 0h3m2 0h5m1 0h4m3 0h3m1 0h3m1 0h5m5 0h8m2 0h14m1 0h9m2 0h17m1 0h6m-227 1h3m3 0h4m2 0h20m2 0h2m4 0h1m1 0h1m3 0h2m3 0h6m2 0h2m4 0h3m6 0h4m3 0h4m2 0h7m7 0h9m3 0h12m5 0h1m4 0h5m3 0h4m2 0h1m4 0h7m6 0h34m3 0h5m1 0h16m-226 1h3m4 0h3m2 0h7m2 0h12m1 0h6m1 0h2m4 0h1m4 0h8m3 0h6m8 0h1m2 0h5m2 0h7m1 0h3m4 0h3m1 0h4m3 0h10m7 0h2m3 0h4m4 0h7m4 0h4m9 0h2m3 0h30m3 0h3m2 0h15m-224 1h3m5 0h2m4 0h3m3 0h1m1 0h4m2 0h15m4 0h1m4 0h4m2 0h1m3 0h3m2 0h3m6 0h21m4 0h3m1 0h4m2 0h11m7 0h8m4 0h10m1 0h4m16 0h29m4 0h2m2 0h9m3 0h3m-225 1h3m7 0h1m1 0h6m2 0h2m2 0h3m2 0h4m1 0h11m4 0h1m4 0h4m1 0h9m1 0h2m6 0h5m2 0h15m5 0h1m1 0h5m1 0h11m8 0h8m2 0h15m17 0h30m2 0h14m4 0h2m3 0h1m-229 1h3m7 0h8m2 0h2m2 0h3m2 0h3m3 0h10m5 0h1m3 0h9m1 0h7m6 0h5m2 0h4m2 0h9m5 0h17m1 0h2m4 0h2m1 0h16m2 0h7m4 0h1m11 0h3m1 0h17m1 0h2m1 0h24m2 0h1m3 0h2m-235 1h1m5 0h3m1 0h1m3 0h15m1 0h4m1 0h3m2 0h9m8 0h1m2 0h1m1 0h8m3 0h3m7 0h8m6 0h8m4 0h15m3 0h1m1 0h1m4 0h10m2 0h7m2 0h1m2 0h4m9 0h2m4 0h7m3 0h4m1 0h7m1 0h2m1 0h27m3 0h2m-235 1h2m5 0h32m1 0h8m9 0h4m2 0h3m2 0h4m3 0h1m6 0h3m2 0h2m5 0h4m1 0h2m2 0h4m2 0h4m1 0h10m11 0h4m2 0h3m2 0h11m1 0h5m14 0h6m5 0h44m2 0h1m-236 1h1m2 0h1m4 0h2m5 0h17m1 0h9m1 0h3m2 0h1m2 0h1m5 0h5m3 0h1m5 0h2m6 0h3m1 0h2m3 0h2m4 0h5m6 0h4m2 0h2m5 0h7m12 0h3m3 0h1m3 0h19m5 0h1m6 0h6m5 0h24m1 0h13m1 0h5m2 0h1m-236 1h1m2 0h2m3 0h1m7 0h4m1 0h4m3 0h3m4 0h7m1 0h2m3 0h3m6 0h1m1 0h4m2 0h1m5 0h3m2 0h6m2 0h5m5 0h5m2 0h2m5 0h2m1 0h2m3 0h6m2 0h2m12 0h2m2 0h3m1 0h8m1 0h12m3 0h2m2 0h3m3 0h4m5 0h38m1 0h2m5 0h1m-233 1h1m4 0h1m7 0h9m3 0h6m1 0h15m5 0h2m3 0h7m4 0h11m2 0h3m3 0h1m3 0h5m2 0h3m2 0h8m1 0h5m4 0h3m1 0h1m9 0h2m2 0h31m1 0h3m3 0h7m1 0h33m1 0h8m5 0h1m-233 1h1m4 0h1m2 0h1m5 0h7m2 0h23m11 0h11m2 0h8m8 0h6m2 0h2m1 0h3m3 0h13m4 0h3m3 0h1m8 0h2m2 0h3m1 0h31m3 0h7m1 0h8m2 0h14m2 0h7m1 0h3m1 0h5m-228 1h1m3 0h2m2 0h2m5 0h5m3 0h21m13 0h5m2 0h4m2 0h8m8 0h14m3 0h12m5 0h1m1 0h1m12 0h6m2 0h28m7 0h4m6 0h3m2 0h9m2 0h6m2 0h15m-227 1h1m3 0h7m5 0h4m3 0h20m4 0h1m10 0h3m3 0h10m2 0h1m8 0h16m2 0h10m7 0h1m1 0h1m11 0h2m2 0h2m4 0h21m2 0h5m15 0h3m3 0h19m3 0h11m-228 1h2m3 0h8m5 0h20m10 0h1m11 0h3m3 0h1m2 0h2m2 0h4m1 0h2m6 0h3m1 0h12m1 0h12m4 0h1m4 0h1m10 0h2m9 0h4m2 0h15m2 0h5m15 0h3m3 0h20m2 0h12m-228 1h2m2 0h32m11 0h2m5 0h2m4 0h5m4 0h1m3 0h6m11 0h4m1 0h1m2 0h6m3 0h8m2 0h2m3 0h1m1 0h1m8 0h1m10 0h4m7 0h3m1 0h14m3 0h2m7 0h7m5 0h2m2 0h9m2 0h2m1 0h13m2 0h1m-229 1h34m10 0h2m4 0h5m3 0h1m2 0h2m10 0h4m11 0h4m5 0h6m4 0h3m3 0h1m4 0h3m3 0h1m5 0h1m9 0h4m9 0h3m1 0h13m4 0h2m7 0h3m1 0h5m3 0h2m4 0h24m-224 1h26m1 0h2m1 0h2m8 0h4m5 0h9m2 0h2m3 0h1m6 0h4m13 0h2m4 0h6m7 0h1m4 0h1m2 0h1m11 0h2m4 0h1m3 0h3m9 0h5m1 0h14m4 0h1m8 0h1m3 0h5m2 0h2m5 0h23m-224 1h25m2 0h5m7 0h5m5 0h9m3 0h2m2 0h2m5 0h4m13 0h2m1 0h8m14 0h1m1 0h5m7 0h1m10 0h2m8 0h5m2 0h16m2 0h2m11 0h9m5 0h21m-225 1h2m2 0h15m1 0h8m1 0h5m7 0h6m2 0h1m2 0h9m4 0h1m2 0h3m3 0h5m13 0h5m1 0h3m11 0h1m12 0h1m5 0h1m5 0h2m2 0h7m4 0h6m1 0h16m14 0h6m1 0h4m2 0h21m-223 1h2m3 0h4m3 0h5m3 0h13m9 0h8m1 0h9m4 0h2m2 0h2m5 0h2m2 0h1m12 0h12m3 0h1m9 0h1m12 0h4m3 0h2m2 0h1m2 0h5m3 0h23m9 0h3m3 0h4m2 0h25m-221 1h3m4 0h2m5 0h19m9 0h13m2 0h4m3 0h5m24 0h14m2 0h1m4 0h1m2 0h1m7 0h3m1 0h5m3 0h2m6 0h4m2 0h7m6 0h12m6 0h5m5 0h2m2 0h16m1 0h6m-219 1h5m3 0h4m2 0h8m3 0h7m10 0h4m1 0h8m3 0h10m25 0h2m3 0h8m4 0h1m5 0h4m4 0h10m11 0h5m2 0h6m7 0h22m9 0h12m2 0h2m1 0h3m-216 1h17m3 0h3m2 0h7m10 0h3m2 0h21m24 0h3m4 0h2m1 0h5m3 0h1m4 0h6m3 0h8m1 0h2m3 0h2m6 0h4m3 0h3m4 0h1m4 0h4m2 0h16m9 0h12m2 0h4m-214 1h17m4 0h5m2 0h4m11 0h2m2 0h6m2 0h3m1 0h9m14 0h1m4 0h2m3 0h3m4 0h2m1 0h7m2 0h10m3 0h7m2 0h3m2 0h2m14 0h2m4 0h2m4 0h4m1 0h9m2 0h6m10 0h10m1 0h2m-211 1h17m4 0h3m6 0h1m13 0h5m1 0h3m3 0h9m1 0h3m23 0h4m2 0h11m3 0h8m4 0h2m1 0h10m17 0h3m2 0h4m5 0h6m3 0h3m4 0h3m11 0h4m1 0h4m2 0h2m-208 1h9m1 0h5m3 0h4m5 0h1m12 0h9m3 0h13m24 0h2m1 0h2m2 0h10m2 0h2m2 0h5m4 0h2m1 0h10m7 0h3m8 0h8m5 0h7m23 0h8m3 0h1m-207 1h6m2 0h8m1 0h7m2 0h2m11 0h9m4 0h6m1 0h6m25 0h4m3 0h2m1 0h10m1 0h6m3 0h10m1 0h6m3 0h5m11 0h4m5 0h8m21 0h9m-206 1h21m2 0h9m10 0h18m3 0h5m5 0h2m13 0h1m16 0h15m2 0h7m1 0h2m2 0h14m10 0h2m5 0h1m3 0h7m5 0h1m14 0h11m-207 1h11m1 0h9m2 0h9m6 0h3m1 0h5m2 0h11m2 0h13m13 0h1m9 0h3m4 0h20m2 0h5m1 0h3m1 0h8m1 0h2m2 0h3m5 0h2m4 0h3m4 0h2m8 0h1m13 0h9m-205 1h7m1 0h3m2 0h20m6 0h9m2 0h11m1 0h13m23 0h5m3 0h20m3 0h7m2 0h5m4 0h7m3 0h4m5 0h1m11 0h2m9 0h1m4 0h4m1 0h4m-204 1h8m1 0h4m1 0h11m4 0h6m6 0h8m2 0h25m20 0h5m3 0h4m3 0h2m1 0h12m4 0h2m1 0h4m2 0h5m4 0h14m7 0h1m9 0h1m13 0h9m-202 1h21m1 0h3m4 0h5m4 0h1m3 0h23m2 0h9m20 0h1m2 0h3m4 0h3m2 0h13m5 0h3m1 0h4m2 0h5m3 0h1m4 0h10m8 0h4m3 0h3m12 0h9m-202 1h21m3 0h2m4 0h5m8 0h23m3 0h7m7 0h1m16 0h2m1 0h2m2 0h3m2 0h13m3 0h9m3 0h5m1 0h3m5 0h1m1 0h8m7 0h4m2 0h4m13 0h2m2 0h3m2 0h1m-204 1h4m2 0h13m5 0h3m1 0h5m11 0h19m1 0h2m3 0h6m7 0h2m13 0h1m2 0h2m3 0h1m1 0h8m1 0h8m4 0h9m3 0h3m11 0h10m7 0h3m2 0h4m22 0h1m-203 1h3m3 0h12m3 0h11m11 0h12m2 0h6m1 0h2m3 0h6m7 0h2m12 0h6m4 0h8m2 0h8m3 0h2m1 0h7m2 0h6m9 0h11m6 0h3m2 0h3m4 0h2m-185 1h4m2 0h11m3 0h3m1 0h6m11 0h6m1 0h6m5 0h6m4 0h7m20 0h4m7 0h7m2 0h8m2 0h19m9 0h3m1 0h16m2 0h3m-182 1h1m2 0h16m3 0h4m2 0h3m1 0h1m9 0h1m1 0h6m1 0h5m2 0h1m3 0h3m1 0h2m3 0h7m3 0h2m17 0h3m7 0h7m1 0h2m3 0h4m2 0h18m11 0h2m3 0h19m-183 1h2m2 0h27m3 0h1m7 0h2m1 0h6m2 0h11m4 0h12m2 0h1m1 0h2m16 0h3m5 0h11m3 0h3m3 0h4m1 0h2m2 0h1m1 0h6m13 0h2m2 0h21m-185 1h2m4 0h6m1 0h18m8 0h4m2 0h6m3 0h3m12 0h5m2 0h4m2 0h1m1 0h3m15 0h1m11 0h6m2 0h3m3 0h6m2 0h1m4 0h7m2 0h1m9 0h2m3 0h21m-185 1h3m2 0h6m1 0h8m2 0h8m6 0h2m1 0h3m2 0h5m22 0h2m2 0h7m2 0h2m15 0h1m1 0h1m3 0h2m5 0h6m1 0h13m1 0h2m3 0h1m1 0h5m1 0h3m8 0h2m3 0h21m-185 1h23m2 0h1m1 0h6m7 0h9m10 0h1m16 0h3m2 0h1m2 0h3m13 0h3m3 0h3m6 0h32m2 0h2m8 0h3m1 0h2m1 0h19m-185 1h4m4 0h6m1 0h7m6 0h2m1 0h2m9 0h6m12 0h1m16 0h2m2 0h6m13 0h2m3 0h1m2 0h2m6 0h5m1 0h9m1 0h21m5 0h1m2 0h3m3 0h3m2 0h6m3 0h7m-188 1h4m4 0h3m1 0h1m2 0h6m5 0h2m1 0h3m11 0h2m15 0h2m1 0h1m10 0h1m4 0h6m8 0h1m9 0h2m3 0h2m6 0h4m3 0h7m4 0h15m2 0h1m5 0h2m2 0h3m3 0h2m4 0h3m6 0h6m-190 1h5m5 0h9m1 0h3m3 0h7m28 0h3m12 0h1m5 0h5m2 0h1m5 0h2m9 0h2m2 0h5m2 0h5m3 0h7m5 0h8m3 0h2m9 0h8m1 0h4m3 0h4m4 0h7m-189 1h4m4 0h9m3 0h5m5 0h2m6 0h1m33 0h1m2 0h1m6 0h6m1 0h2m4 0h1m11 0h7m1 0h6m3 0h9m8 0h2m4 0h1m11 0h12m5 0h9m1 0h3m-189 1h1m2 0h1m2 0h11m3 0h4m4 0h5m8 0h2m22 0h1m3 0h3m1 0h3m5 0h10m18 0h2m3 0h4m4 0h11m9 0h5m3 0h2m7 0h12m6 0h7m2 0h3m-189 1h5m1 0h7m1 0h3m3 0h1m7 0h3m1 0h2m2 0h7m22 0h1m2 0h1m5 0h3m3 0h2m3 0h5m19 0h1m13 0h1m1 0h7m10 0h4m4 0h2m2 0h3m3 0h8m2 0h1m6 0h7m2 0h2m-188 1h5m1 0h11m12 0h2m1 0h11m23 0h4m6 0h1m8 0h3m19 0h4m13 0h8m1 0h2m8 0h1m5 0h8m4 0h11m9 0h7m-191 1h1m1 0h17m13 0h2m2 0h5m17 0h9m3 0h4m5 0h1m2 0h1m5 0h1m19 0h3m1 0h1m15 0h5m1 0h4m6 0h3m1 0h13m2 0h2m1 0h8m10 0h1m2 0h3m-191 1h5m2 0h13m14 0h1m3 0h4m8 0h3m2 0h10m2 0h1m2 0h2m2 0h1m3 0h6m5 0h1m14 0h2m1 0h6m16 0h5m1 0h3m7 0h17m2 0h2m2 0h7m10 0h1m2 0h2m-190 1h12m2 0h1m1 0h5m12 0h2m5 0h2m7 0h25m4 0h3m22 0h9m17 0h4m2 0h3m7 0h6m1 0h11m1 0h3m2 0h5m1 0h3m3 0h1m3 0h4m-188 1h11m2 0h6m12 0h1m1 0h1m6 0h1m7 0h2m1 0h2m1 0h2m1 0h1m3 0h11m5 0h3m4 0h1m2 0h1m5 0h1m7 0h10m5 0h1m11 0h3m3 0h2m8 0h6m1 0h15m3 0h13m3 0h3m-192 1h1m4 0h10m2 0h6m3 0h1m9 0h2m5 0h2m7 0h6m1 0h4m2 0h2m1 0h1m2 0h8m2 0h3m5 0h2m7 0h1m3 0h1m2 0h4m2 0h3m5 0h4m10 0h2m3 0h2m5 0h1m4 0h20m3 0h12m-185 1h1m5 0h9m1 0h1m3 0h1m4 0h1m1 0h3m3 0h6m4 0h6m3 0h2m3 0h12m5 0h3m1 0h2m2 0h2m28 0h3m3 0h6m15 0h1m5 0h2m3 0h6m3 0h4m3 0h19m-187 1h1m1 0h1m5 0h6m3 0h1m13 0h2m1 0h17m4 0h2m4 0h10m6 0h1m2 0h1m34 0h4m1 0h4m12 0h3m7 0h2m3 0h5m4 0h6m2 0h7m3 0h4m2 0h4m-181 1h7m12 0h1m3 0h16m1 0h4m5 0h1m4 0h3m2 0h13m1 0h1m7 0h4m5 0h1m12 0h3m8 0h1m14 0h4m4 0h4m3 0h6m1 0h9m1 0h6m4 0h4m3 0h2m-181 1h8m11 0h25m6 0h8m3 0h5m3 0h6m7 0h4m4 0h2m13 0h2m7 0h2m13 0h4m5 0h3m4 0h16m1 0h5m2 0h7m3 0h2m-183 1h9m10 0h27m5 0h2m5 0h1m1 0h2m2 0h4m5 0h4m3 0h1m4 0h10m2 0h4m5 0h1m1 0h1m7 0h2m13 0h5m8 0h14m1 0h3m8 0h9m1 0h4m-190 1h1m4 0h11m7 0h5m1 0h6m3 0h3m3 0h8m1 0h6m7 0h2m2 0h5m1 0h7m3 0h2m3 0h10m2 0h1m4 0h3m4 0h1m6 0h1m13 0h6m4 0h22m7 0h3m1 0h9m1 0h1m-190 1h1m4 0h8m1 0h3m5 0h11m5 0h3m3 0h15m6 0h8m2 0h7m4 0h2m2 0h5m1 0h4m8 0h2m24 0h6m5 0h11m3 0h10m1 0h3m1 0h14m-189 1h2m3 0h3m3 0h3m2 0h1m5 0h10m8 0h21m4 0h4m8 0h5m3 0h4m2 0h1m2 0h7m10 0h1m2 0h1m20 0h6m4 0h2m2 0h8m5 0h13m2 0h12m-189 1h1m4 0h3m6 0h2m4 0h12m3 0h3m1 0h16m3 0h3m5 0h3m12 0h2m3 0h1m1 0h2m1 0h1m2 0h7m10 0h3m5 0h1m17 0h7m1 0h10m9 0h8m7 0h9m-189 1h2m3 0h4m4 0h13m4 0h18m2 0h6m2 0h4m7 0h1m13 0h1m3 0h6m1 0h10m8 0h2m26 0h5m1 0h10m3 0h1m1 0h2m3 0h7m2 0h1m4 0h5m2 0h1m-188 1h1m4 0h5m2 0h14m4 0h26m2 0h3m13 0h2m2 0h1m8 0h6m2 0h5m1 0h2m2 0h1m15 0h1m19 0h4m1 0h2m2 0h6m3 0h4m6 0h3m3 0h2m4 0h2m-184 1h1m5 0h12m3 0h11m1 0h23m3 0h3m13 0h2m11 0h7m3 0h2m18 0h1m3 0h1m19 0h3m1 0h3m5 0h3m4 0h4m7 0h2m2 0h2m2 0h4m-179 1h13m2 0h2m2 0h8m1 0h23m3 0h3m13 0h1m6 0h3m3 0h7m4 0h1m4 0h2m9 0h1m2 0h2m21 0h3m3 0h3m6 0h1m5 0h3m2 0h2m4 0h2m5 0h4m1 0h1m-182 1h14m2 0h1m2 0h21m2 0h10m4 0h1m10 0h1m10 0h13m4 0h2m3 0h2m9 0h1m1 0h3m20 0h5m2 0h5m5 0h2m3 0h8m14 0h1m-181 1h7m1 0h9m2 0h17m8 0h8m3 0h2m21 0h2m1 0h5m2 0h4m2 0h4m2 0h2m12 0h3m18 0h7m2 0h4m4 0h4m1 0h9m-172 1h1m5 0h6m2 0h6m1 0h20m10 0h2m1 0h7m23 0h3m3 0h2m2 0h10m16 0h3m28 0h3m10 0h8m8 0h3m1 0h1m-179 1h6m2 0h5m2 0h5m2 0h13m10 0h2m2 0h6m22 0h4m8 0h1m1 0h3m3 0h1m21 0h1m25 0h2m12 0h6m9 0h4m-185 1h1m6 0h6m1 0h6m2 0h4m2 0h14m5 0h2m3 0h3m2 0h4m20 0h2m2 0h3m7 0h2m1 0h2m3 0h2m46 0h2m14 0h3m11 0h3m-185 1h1m7 0h9m2 0h1m2 0h21m4 0h4m2 0h4m26 0h1m2 0h3m4 0h7m4 0h3m7 0h2m28 0h1m3 0h2m1 0h4m13 0h5m7 0h4m-185 1h1m7 0h10m5 0h10m1 0h18m3 0h3m27 0h16m4 0h3m7 0h2m6 0h4m5 0h1m6 0h2m1 0h4m4 0h8m10 0h7m1 0h3m2 0h4m-186 1h1m7 0h26m2 0h13m2 0h2m3 0h1m33 0h4m3 0h5m13 0h7m1 0h5m4 0h2m6 0h1m12 0h7m2 0h1m5 0h12m2 0h3m-186 1h1m7 0h1m2 0h39m2 0h2m2 0h2m6 0h2m25 0h2m2 0h1m2 0h3m1 0h1m9 0h1m2 0h12m1 0h1m25 0h2m2 0h22m-181 1h2m9 0h19m2 0h16m1 0h11m21 0h2m13 0h5m2 0h2m8 0h1m2 0h14m29 0h3m3 0h14m4 0h1m-185 1h3m9 0h19m3 0h16m1 0h10m21 0h4m4 0h3m4 0h6m1 0h2m11 0h2m4 0h3m4 0h2m28 0h3m2 0h13m5 0h2m-186 1h4m9 0h15m3 0h2m2 0h27m21 0h4m3 0h4m5 0h2m2 0h2m1 0h1m19 0h1m4 0h3m27 0h18m5 0h1m-186 1h5m9 0h5m4 0h7m1 0h3m2 0h9m2 0h3m1 0h11m23 0h3m2 0h7m2 0h3m3 0h4m11 0h1m10 0h1m3 0h1m5 0h2m18 0h3m1 0h16m3 0h1m-186 1h6m9 0h5m4 0h8m5 0h9m3 0h1m3 0h7m26 0h3m2 0h4m2 0h6m3 0h5m10 0h2m9 0h2m2 0h1m4 0h3m18 0h2m3 0h2m1 0h6m1 0h5m-183 1h6m10 0h5m4 0h8m4 0h9m1 0h4m5 0h7m25 0h1m2 0h4m7 0h2m3 0h5m6 0h1m2 0h5m8 0h1m2 0h1m4 0h3m18 0h1m4 0h1m4 0h3m3 0h6m-186 1h2m13 0h6m4 0h9m1 0h11m1 0h18m19 0h2m6 0h8m1 0h12m6 0h9m2 0h3m2 0h5m3 0h2m7 0h4m11 0h3m4 0h3m4 0h3m-185 1h3m12 0h7m4 0h21m2 0h13m2 0h3m2 0h3m13 0h4m4 0h18m2 0h1m2 0h1m3 0h5m2 0h2m1 0h11m4 0h2m7 0h2m12 0h2m5 0h3m5 0h1m-185 1h5m10 0h1m2 0h6m2 0h12m2 0h8m2 0h7m1 0h5m2 0h4m1 0h2m13 0h5m4 0h3m2 0h5m4 0h4m2 0h1m7 0h3m5 0h10m6 0h4m27 0h4m-182 1h6m13 0h3m1 0h2m1 0h14m5 0h5m1 0h21m15 0h4m3 0h4m2 0h5m5 0h5m7 0h3m6 0h1m2 0h1m13 0h6m24 0h5m-184 1h4m1 0h2m9 0h1m3 0h3m1 0h18m4 0h5m1 0h21m18 0h1m2 0h2m2 0h4m2 0h2m4 0h6m7 0h3m6 0h1m1 0h1m10 0h1m4 0h5m7 0h4m8 0h1m6 0h3m-184 1h3m16 0h23m4 0h5m1 0h16m1 0h4m18 0h5m3 0h2m3 0h4m4 0h2m2 0h2m5 0h3m6 0h1m1 0h1m5 0h3m1 0h3m3 0h5m6 0h6m14 0h3m-184 1h2m3 0h1m10 0h2m1 0h24m2 0h7m2 0h11m1 0h7m5 0h1m6 0h2m4 0h2m2 0h2m1 0h4m2 0h5m4 0h5m4 0h4m6 0h1m1 0h1m1 0h11m3 0h5m5 0h7m5 0h2m7 0h2m-183 1h3m2 0h2m5 0h5m2 0h27m1 0h4m3 0h5m1 0h13m5 0h1m12 0h1m3 0h15m3 0h5m4 0h4m5 0h4m1 0h1m1 0h9m3 0h5m4 0h5m1 0h4m3 0h3m6 0h2m-184 1h6m2 0h2m3 0h4m2 0h18m1 0h9m1 0h4m4 0h18m5 0h1m11 0h1m5 0h14m6 0h1m5 0h3m2 0h1m3 0h3m2 0h1m1 0h9m2 0h5m5 0h4m2 0h13m-179 1h5m9 0h15m2 0h1m1 0h20m2 0h19m4 0h2m8 0h4m4 0h6m2 0h2m2 0h3m11 0h3m1 0h9m2 0h5m1 0h4m1 0h6m6 0h4m2 0h13m-179 1h4m7 0h1m1 0h19m2 0h19m2 0h12m2 0h4m5 0h2m8 0h3m3 0h6m5 0h2m1 0h3m11 0h2m2 0h8m5 0h2m2 0h11m2 0h2m2 0h4m2 0h7m1 0h5m-179 1h1m6 0h1m4 0h19m2 0h20m4 0h3m2 0h5m3 0h3m15 0h8m9 0h5m12 0h2m2 0h7m7 0h1m1 0h8m1 0h3m2 0h3m4 0h11m2 0h3m-179 1h1m6 0h1m2 0h1m1 0h5m3 0h9m4 0h4m1 0h17m2 0h3m2 0h4m3 0h1m3 0h1m14 0h2m1 0h2m1 0h2m9 0h1m1 0h2m7 0h2m4 0h3m2 0h6m8 0h13m10 0h6m1 0h10m-181 1h1m9 0h1m2 0h4m2 0h11m2 0h4m3 0h9m2 0h6m2 0h3m1 0h3m8 0h2m16 0h6m8 0h1m2 0h2m6 0h1m1 0h1m2 0h2m1 0h4m2 0h3m9 0h4m2 0h7m9 0h6m1 0h10m-181 1h2m4 0h1m3 0h1m2 0h12m1 0h10m2 0h4m2 0h5m2 0h5m4 0h6m7 0h3m15 0h11m2 0h2m2 0h4m4 0h1m1 0h1m3 0h5m4 0h1m11 0h2m4 0h1m2 0h4m2 0h2m4 0h16m-181 1h7m8 0h10m3 0h9m1 0h5m2 0h5m3 0h5m4 0h6m6 0h7m6 0h3m1 0h4m2 0h2m2 0h7m1 0h2m1 0h1m3 0h3m5 0h4m5 0h1m4 0h2m10 0h12m3 0h4m2 0h10m-178 1h3m10 0h9m2 0h16m2 0h5m3 0h5m4 0h8m5 0h2m8 0h1m1 0h1m2 0h5m2 0h2m2 0h7m2 0h3m4 0h1m6 0h5m4 0h2m1 0h4m5 0h2m4 0h8m1 0h1m4 0h4m4 0h7m-177 1h2m6 0h1m4 0h9m2 0h16m1 0h3m1 0h10m1 0h12m2 0h4m7 0h4m3 0h2m1 0h2m1 0h6m1 0h4m16 0h2m1 0h3m6 0h3m7 0h1m5 0h17m4 0h7m-179 1h3m11 0h22m2 0h8m2 0h6m4 0h16m9 0h5m1 0h3m3 0h6m3 0h1m6 0h2m6 0h1m4 0h1m2 0h2m6 0h2m14 0h4m2 0h11m7 0h3m-165 1h21m3 0h16m6 0h7m16 0h8m1 0h3m2 0h5m3 0h1m6 0h2m5 0h3m11 0h1m13 0h1m3 0h2m1 0h1m3 0h11m2 0h2m4 0h2m-179 1h1m12 0h22m3 0h7m1 0h7m7 0h2m8 0h1m12 0h12m3 0h1m1 0h2m4 0h2m3 0h3m5 0h3m10 0h2m14 0h13m1 0h11m3 0h2m-178 1h1m9 0h5m1 0h18m2 0h8m4 0h4m11 0h2m4 0h2m12 0h3m1 0h2m2 0h3m4 0h1m2 0h2m4 0h1m2 0h4m5 0h3m9 0h2m18 0h14m1 0h8m1 0h2m-177 1h1m9 0h4m2 0h19m1 0h8m5 0h2m8 0h7m2 0h3m5 0h2m7 0h3m9 0h2m3 0h3m2 0h1m2 0h4m4 0h2m9 0h3m19 0h2m1 0h11m1 0h8m1 0h1m-176 1h1m2 0h1m6 0h4m2 0h8m2 0h11m3 0h1m2 0h3m3 0h2m3 0h7m2 0h11m2 0h1m9 0h1m9 0h3m4 0h4m4 0h3m4 0h1m3 0h3m3 0h3m21 0h1m1 0h20m1 0h1m-176 1h2m6 0h5m3 0h8m2 0h12m6 0h7m2 0h8m3 0h13m18 0h4m5 0h2m5 0h3m8 0h8m23 0h2m3 0h14m1 0h2m-175 1h1m5 0h18m2 0h13m5 0h17m5 0h11m4 0h1m5 0h9m2 0h1m5 0h10m7 0h2m2 0h4m30 0h6m1 0h8m-174 1h1m1 0h2m1 0h11m1 0h17m2 0h4m3 0h4m3 0h6m10 0h11m3 0h3m4 0h4m1 0h21m3 0h2m1 0h4m5 0h1m30 0h4m2 0h5m2 0h1m-173 1h16m2 0h15m4 0h3m2 0h6m4 0h3m10 0h11m2 0h6m3 0h1m1 0h7m1 0h2m2 0h6m7 0h10m2 0h3m30 0h12m-170 1h15m2 0h6m2 0h6m6 0h10m3 0h4m7 0h1m2 0h11m2 0h4m1 0h2m2 0h1m1 0h13m2 0h3m7 0h2m1 0h11m31 0h12m-170 1h8m1 0h13m3 0h6m5 0h11m3 0h3m4 0h5m1 0h6m2 0h4m5 0h7m2 0h4m1 0h6m3 0h2m8 0h5m1 0h6m36 0h9m-169 1h7m2 0h14m5 0h3m4 0h10m11 0h2m1 0h2m1 0h12m5 0h7m4 0h1m3 0h3m12 0h2m1 0h4m4 0h3m40 0h5m-168 1h23m5 0h3m4 0h3m2 0h4m13 0h1m4 0h12m4 0h10m2 0h1m2 0h4m12 0h8m3 0h3m43 0h1m-167 1h2m1 0h21m4 0h4m3 0h3m3 0h2m4 0h3m6 0h3m3 0h12m4 0h6m2 0h6m1 0h2m16 0h7m3 0h1m-128 1h1m5 0h2m2 0h7m1 0h13m4 0h5m1 0h3m3 0h2m3 0h7m3 0h18m3 0h8m1 0h7m18 0h3m1 0h4m3 0h2m-130 1h2m5 0h3m1 0h19m6 0h8m8 0h14m2 0h11m5 0h11m1 0h2m14 0h1m3 0h3m4 0h2m3 0h2m-130 1h5m2 0h23m6 0h8m9 0h13m2 0h12m1 0h13m2 0h1m15 0h7m3 0h4m2 0h1m-129 1h5m3 0h18m1 0h2m5 0h9m12 0h35m2 0h2m19 0h6m3 0h7m-129 1h2m2 0h1m4 0h16m8 0h5m2 0h3m14 0h26m1 0h12m18 0h5m3 0h3m1 0h3m-127 1h1m1 0h1m5 0h15m8 0h4m3 0h2m16 0h37m19 0h6m2 0h3m1 0h3m-127 1h1m1 0h1m5 0h2m3 0h10m7 0h5m23 0h34m21 0h5m2 0h6m-124 1h1m5 0h2m3 0h9m8 0h4m26 0h6m1 0h11m2 0h11m23 0h12m-123 1h1m5 0h2m1 0h2m3 0h3m10 0h4m27 0h18m1 0h11m23 0h3m1 0h4m-122 1h1m3 0h1m5 0h4m4 0h1m9 0h6m1 0h1m26 0h10m2 0h15m26 0h7m-125 1h2m1 0h1m10 0h3m15 0h5m31 0h7m3 0h14m28 0h4m-123 1h1m1 0h1m6 0h1m2 0h5m15 0h3m33 0h6m3 0h13m30 0h2m-123 1h1m3 0h3m8 0h2m17 0h1m34 0h6m3 0h9m1 0h2m30 0h1m-114 1h1m7 0h1m54 0h3m6 0h7m2 0h2m-83 1h1m3 0h2m66 0h8m-85 1h1m4 0h2m1 0h1m1 0h1m62 0h3m2 0h8m-86 1h1m3 0h3m66 0h3m2 0h6m-80 1h1m1 0h1m68 0h7m-77 1h1m70 0h1m1 0h3m-3 1h1"/><path stroke="#ffff00" stroke-width="1" d="M402 239.5h10m1 0h58m7 0h24m35 0h7m3 0h8m2 0h1m2 0h4m2 0h3m6 0h2m1 0h7m5 0h2m7 0h2m2 0h1m2 0h2m12 0h4m3 0h2m1 0h1m-229 1h5m1 0h4m2 0h57m4 0h26m15 0h7m15 0h20m2 0h9m3 0h4m3 0h6m4 0h4m7 0h4m2 0h2m3 0h1m4 0h2m3 0h3m3 0h5m1 0h1m-232 1h5m1 0h3m3 0h57m3 0h27m14 0h11m4 0h5m4 0h18m3 0h9m2 0h5m5 0h3m5 0h4m14 0h6m2 0h3m3 0h4m4 0h5m-231 1h8m2 0h58m3 0h28m13 0h2m1 0h10m2 0h5m5 0h6m2 0h2m3 0h4m3 0h9m1 0h6m5 0h2m9 0h4m12 0h3m3 0h4m3 0h2m5 0h3m-228 1h8m1 0h59m3 0h8m1 0h21m8 0h2m1 0h4m2 0h2m1 0h11m9 0h7m2 0h5m1 0h16m6 0h3m8 0h4m12 0h1m6 0h2m4 0h2m3 0h4m-226 1h67m2 0h8m2 0h24m4 0h7m4 0h15m1 0h4m2 0h7m3 0h17m1 0h2m6 0h2m2 0h2m7 0h3m11 0h1m12 0h3m2 0h5m-225 1h64m3 0h24m2 0h9m4 0h6m5 0h2m4 0h24m2 0h10m1 0h5m7 0h5m2 0h2m8 0h1m23 0h6m1 0h5m-226 1h62m6 0h24m2 0h2m2 0h5m3 0h7m5 0h2m4 0h18m1 0h17m2 0h3m8 0h6m1 0h2m23 0h2m10 0h6m1 0h3m-227 1h59m2 0h1m4 0h26m6 0h4m4 0h14m3 0h19m1 0h16m2 0h4m4 0h3m2 0h8m4 0h2m15 0h3m12 0h9m-227 1h55m7 0h30m3 0h1m1 0h7m1 0h13m4 0h12m2 0h6m2 0h15m2 0h5m3 0h4m2 0h6m4 0h3m14 0h4m13 0h8m-227 1h5m1 0h15m1 0h22m1 0h9m7 0h48m3 0h4m6 0h6m8 0h5m4 0h8m3 0h3m3 0h4m4 0h2m3 0h6m2 0h5m13 0h3m16 0h2m4 0h2m3 0h1m-231 1h4m1 0h36m4 0h8m5 0h50m1 0h8m4 0h5m9 0h3m6 0h4m3 0h8m3 0h2m11 0h5m2 0h5m13 0h1m2 0h1m3 0h2m6 0h2m9 0h5m-231 1h41m6 0h5m5 0h61m3 0h3m9 0h5m5 0h4m4 0h6m5 0h2m3 0h1m8 0h4m2 0h5m11 0h3m5 0h3m6 0h3m4 0h7m-229 1h27m1 0h12m7 0h5m4 0h62m1 0h5m7 0h2m1 0h5m1 0h7m4 0h4m11 0h3m4 0h14m4 0h3m3 0h4m4 0h3m7 0h4m3 0h7m1 0h1m-233 1h29m2 0h10m9 0h3m6 0h41m3 0h9m1 0h8m4 0h1m2 0h1m4 0h1m5 0h9m4 0h5m11 0h4m2 0h16m3 0h3m3 0h5m3 0h3m8 0h3m3 0h9m-234 1h15m2 0h15m4 0h3m6 0h5m3 0h1m6 0h41m2 0h11m3 0h4m5 0h2m1 0h6m5 0h9m4 0h3m10 0h8m3 0h11m2 0h1m3 0h4m1 0h12m9 0h2m5 0h5m-232 1h14m3 0h3m3 0h10m11 0h8m8 0h42m1 0h10m4 0h2m5 0h3m2 0h7m3 0h11m4 0h1m8 0h10m5 0h9m3 0h1m6 0h9m2 0h3m8 0h5m5 0h4m-233 1h10m4 0h1m2 0h5m2 0h10m3 0h5m2 0h8m7 0h53m12 0h2m2 0h3m3 0h13m1 0h2m9 0h15m4 0h2m10 0h1m6 0h9m1 0h1m2 0h6m3 0h6m4 0h5m-234 1h10m8 0h4m2 0h23m1 0h5m4 0h7m2 0h42m1 0h2m15 0h3m6 0h11m3 0h1m8 0h21m10 0h2m5 0h2m5 0h1m8 0h2m5 0h7m3 0h5m-231 1h5m15 0h23m3 0h3m1 0h11m2 0h34m2 0h6m28 0h9m4 0h1m8 0h12m2 0h7m10 0h2m3 0h2m6 0h2m8 0h2m5 0h8m1 0h2m2 0h2m-229 1h1m16 0h24m2 0h5m2 0h9m1 0h43m28 0h15m4 0h16m1 0h6m11 0h3m1 0h2m4 0h4m10 0h16m3 0h2m-212 1h13m1 0h10m2 0h6m1 0h38m3 0h12m24 0h3m3 0h15m2 0h22m15 0h2m5 0h4m10 0h2m2 0h6m3 0h2m4 0h2m-212 1h1m3 0h7m3 0h36m1 0h20m4 0h12m24 0h3m2 0h16m1 0h22m22 0h3m16 0h5m3 0h2m4 0h2m-214 1h1m5 0h6m4 0h29m7 0h21m1 0h16m29 0h37m46 0h1m3 0h2m3 0h3m-228 1h2m11 0h2m5 0h6m5 0h26m9 0h38m25 0h1m3 0h37m55 0h3m-227 1h1m19 0h5m5 0h28m6 0h38m25 0h3m3 0h36m47 0h2m5 0h4m-204 1h2m4 0h72m26 0h3m2 0h38m8 0h1m34 0h6m3 0h5m-199 1h73m31 0h39m7 0h1m28 0h1m5 0h14m-233 1h1m32 0h71m1 0h2m32 0h33m2 0h3m3 0h3m19 0h2m10 0h3m2 0h2m3 0h6m-230 1h2m28 0h13m1 0h18m1 0h25m2 0h13m37 0h32m3 0h2m3 0h3m15 0h6m11 0h1m9 0h2m-227 1h2m28 0h3m2 0h17m2 0h7m2 0h19m1 0h5m2 0h14m1 0h1m35 0h31m3 0h2m3 0h3m14 0h5m23 0h2m4 0h2m-203 1h2m4 0h16m2 0h7m2 0h19m2 0h5m1 0h17m34 0h31m4 0h1m3 0h5m11 0h6m5 0h2m15 0h3m2 0h4m-203 1h1m3 0h28m2 0h14m2 0h2m1 0h23m35 0h31m4 0h1m6 0h3m4 0h2m4 0h1m1 0h3m6 0h2m14 0h10m-199 1h29m1 0h5m1 0h8m1 0h27m25 0h1m10 0h31m3 0h1m6 0h3m4 0h3m14 0h3m13 0h9m-224 1h2m24 0h34m3 0h35m20 0h2m15 0h31m2 0h2m5 0h3m4 0h3m4 0h1m9 0h3m5 0h3m5 0h2m3 0h3m-224 1h3m24 0h24m4 0h13m2 0h29m10 0h1m9 0h2m16 0h30m2 0h6m2 0h3m3 0h3m4 0h2m8 0h2m6 0h1m6 0h3m3 0h2m-223 1h3m24 0h24m5 0h1m2 0h9m1 0h30m10 0h1m22 0h2m3 0h31m1 0h6m2 0h3m3 0h3m3 0h3m1 0h2m5 0h2m5 0h2m7 0h1m-189 1h15m2 0h3m1 0h2m4 0h2m2 0h17m2 0h23m30 0h3m3 0h31m1 0h6m2 0h3m3 0h2m4 0h3m1 0h2m9 0h1m2 0h1m-179 1h14m1 0h4m1 0h2m3 0h18m1 0h2m4 0h24m32 0h45m6 0h1m2 0h2m13 0h2m13 0h1m-216 1h1m24 0h18m2 0h2m4 0h16m2 0h3m2 0h26m30 0h47m4 0h2m-183 1h2m22 0h24m2 0h17m1 0h32m29 0h48m3 0h3m9 0h2m-170 1h43m1 0h31m30 0h31m1 0h16m2 0h3m7 0h6m-172 1h76m29 0h49m2 0h3m7 0h6m-172 1h51m3 0h17m2 0h4m27 0h56m9 0h3m25 0h2m-199 1h24m1 0h25m4 0h5m2 0h9m3 0h4m27 0h59m6 0h3m20 0h3m2 0h2m-198 1h22m1 0h25m5 0h6m1 0h16m27 0h43m2 0h14m7 0h2m1 0h4m15 0h6m-198 1h35m1 0h13m2 0h25m27 0h44m1 0h11m1 0h4m6 0h8m14 0h6m-202 1h1m2 0h36m1 0h13m2 0h25m2 0h1m6 0h3m6 0h2m7 0h26m2 0h3m1 0h3m2 0h4m1 0h19m6 0h1m3 0h4m5 0h1m9 0h5m-224 1h2m9 0h1m8 0h3m1 0h37m1 0h41m1 0h1m6 0h4m6 0h1m7 0h27m2 0h4m4 0h4m2 0h18m11 0h3m5 0h1m11 0h3m-213 1h1m9 0h25m2 0h55m3 0h11m12 0h34m4 0h3m2 0h15m1 0h3m3 0h3m-201 1h2m23 0h25m2 0h54m4 0h12m11 0h33m1 0h1m7 0h26m-201 1h2m15 0h1m7 0h34m2 0h45m5 0h14m7 0h32m3 0h2m6 0h27m-202 1h2m21 0h36m2 0h48m3 0h14m7 0h25m2 0h3m4 0h3m5 0h2m1 0h6m2 0h17m3 0h2m5 0h3m-206 1h2m8 0h106m1 0h2m4 0h25m9 0h8m7 0h1m4 0h2m1 0h15m1 0h2m5 0h3m-221 1h2m5 0h1m6 0h3m7 0h107m2 0h3m1 0h26m1 0h3m5 0h4m20 0h10m1 0h4m-211 1h2m4 0h2m3 0h15m1 0h104m4 0h2m1 0h29m5 0h4m8 0h3m9 0h9m2 0h4m-211 1h2m4 0h2m2 0h3m1 0h116m6 0h1m2 0h21m1 0h7m3 0h6m6 0h10m1 0h11m2 0h4m-211 1h2m4 0h2m1 0h4m1 0h117m9 0h19m7 0h2m2 0h3m2 0h4m3 0h8m5 0h9m3 0h4m3 0h2m-216 1h2m7 0h121m10 0h5m3 0h9m9 0h2m2 0h3m3 0h4m2 0h8m6 0h8m2 0h6m2 0h2m-216 1h2m14 0h114m9 0h4m6 0h7m10 0h2m9 0h2m4 0h7m6 0h16m1 0h3m5 0h2m4 0h1m-228 1h4m13 0h10m1 0h101m10 0h3m12 0h1m10 0h4m15 0h1m2 0h3m7 0h13m4 0h2m-215 1h7m6 0h12m4 0h1m1 0h94m10 0h2m1 0h1m24 0h2m1 0h2m19 0h2m9 0h11m5 0h1m7 0h1m5 0h2m-230 1h25m6 0h13m2 0h68m1 0h10m2 0h3m1 0h8m24 0h1m23 0h1m13 0h8m7 0h2m10 0h2m-231 1h26m3 0h86m1 0h10m2 0h13m67 0h2m7 0h2m11 0h2m-232 1h13m2 0h4m2 0h5m3 0h96m3 0h13m3 0h2m71 0h1m13 0h2m-233 1h19m3 0h4m5 0h2m5 0h1m2 0h83m4 0h18m-146 1h20m2 0h7m1 0h3m8 0h38m2 0h43m4 0h9m1 0h9m-147 1h33m2 0h4m2 0h37m2 0h57m9 0h2m56 0h2m-206 1h11m2 0h20m2 0h17m2 0h74m1 0h8m9 0h3m35 0h1m-185 1h10m3 0h20m1 0h4m2 0h2m4 0h5m4 0h73m1 0h8m2 0h1m7 0h1m23 0h2m11 0h2m35 0h2m-223 1h9m1 0h29m8 0h5m3 0h15m3 0h14m2 0h53m7 0h1m35 0h2m34 0h2m-223 1h9m1 0h29m2 0h3m2 0h7m3 0h1m2 0h11m2 0h15m3 0h52m6 0h3m-151 1h23m1 0h16m1 0h13m1 0h1m3 0h28m4 0h52m5 0h3m19 0h1m7 0h1m-178 1h24m1 0h31m1 0h31m1 0h37m2 0h10m1 0h5m4 0h1m28 0h3m-180 1h39m2 0h85m2 0h13m35 0h4m-181 1h39m2 0h100m36 0h1m-178 1h26m1 0h104m5 0h5m16 0h1m18 0h1m-177 1h26m2 0h48m2 0h53m6 0h3m17 0h2m16 0h2m-177 1h76m2 0h53m6 0h2m35 0h2m-176 1h43m1 0h11m1 0h20m1 0h53m2 0h2m3 0h2m32 0h5m-176 1h35m2 0h5m2 0h8m2 0h81m36 0h4m-174 1h81m1 0h46m1 0h6m19 0h2m-155 1h79m2 0h46m1 0h6m19 0h2m-157 1h25m1 0h37m1 0h70m1 0h1m-136 1h17m3 0h4m2 0h111m32 0h2m-171 1h17m8 0h22m3 0h3m2 0h33m1 0h41m1 0h5m33 0h1m-170 1h17m6 0h12m2 0h10m3 0h3m3 0h32m2 0h46m-136 1h6m2 0h10m4 0h9m2 0h1m3 0h10m3 0h39m1 0h45m27 0h5m-167 1h17m5 0h12m2 0h5m3 0h4m2 0h82m24 0h10m-164 1h15m8 0h9m3 0h3m6 0h3m1 0h41m1 0h42m10 0h1m3 0h2m5 0h11m-163 1h2m3 0h10m10 0h4m5 0h3m6 0h44m3 0h41m10 0h2m1 0h4m3 0h12m-166 1h9m1 0h8m11 0h1m8 0h2m1 0h1m4 0h44m3 0h39m15 0h18m4 0h3m-172 1h3m1 0h3m3 0h2m2 0h5m6 0h2m10 0h6m3 0h1m2 0h40m2 0h23m1 0h14m23 0h13m5 0h1m21 0h1m-192 1h1m2 0h8m3 0h4m6 0h2m9 0h8m3 0h43m1 0h22m2 0h14m23 0h12m28 0h2m-190 1h3m4 0h2m4 0h2m16 0h11m1 0h66m2 0h15m22 0h12m-160 1h4m4 0h1m4 0h3m14 0h11m3 0h82m24 0h10m32 0h1m7 0h1m-201 1h9m16 0h1m3 0h12m4 0h4m1 0h18m1 0h57m10 0h3m3 0h3m2 0h2m2 0h8m-159 1h2m5 0h2m16 0h18m6 0h19m1 0h58m1 0h2m5 0h4m2 0h9m1 0h6m-148 1h1m15 0h9m2 0h8m5 0h5m1 0h75m5 0h4m2 0h8m2 0h5m-147 1h2m13 0h11m1 0h9m6 0h3m2 0h72m9 0h4m2 0h6m1 0h2m-128 1h21m2 0h2m2 0h4m1 0h5m2 0h65m9 0h4m2 0h5m1 0h3m63 0h1m-191 1h15m1 0h3m3 0h3m1 0h8m5 0h60m6 0h2m4 0h5m2 0h5m1 0h3m66 0h1m-193 1h5m1 0h8m2 0h2m7 0h10m4 0h57m8 0h2m4 0h5m9 0h2m-126 1h14m5 0h2m4 0h5m1 0h6m2 0h55m11 0h1m3 0h6m10 0h1m-122 1h10m4 0h4m3 0h1m6 0h5m2 0h55m11 0h3m4 0h3m-111 1h3m2 0h5m4 0h4m3 0h1m6 0h4m4 0h53m2 0h1m9 0h3m5 0h2m21 0h1m34 0h2m-171 1h3m4 0h6m1 0h6m18 0h46m3 0h2m4 0h1m8 0h3m6 0h2m56 0h2m-171 1h3m4 0h12m19 0h45m16 0h5m7 0h3m-114 1h5m3 0h3m2 0h4m9 0h2m6 0h2m3 0h40m2 0h2m15 0h6m7 0h2m15 0h1m-129 1h6m20 0h2m3 0h2m1 0h2m4 0h17m3 0h19m3 0h1m13 0h7m-108 1h2m1 0h8m20 0h1m4 0h1m2 0h2m5 0h16m3 0h18m5 0h1m12 0h1m24 0h1m5 0h2m-134 1h5m2 0h4m5 0h3m3 0h2m16 0h2m4 0h15m4 0h17m6 0h2m40 0h5m-132 1h2m3 0h2m8 0h1m3 0h2m19 0h2m1 0h11m8 0h5m2 0h8m8 0h2m6 0h3m30 0h6m58 0h2m-192 1h2m17 0h2m19 0h13m5 0h5m3 0h1m2 0h3m2 0h2m8 0h4m4 0h4m21 0h1m6 0h3m4 0h1m58 0h2m-192 1h2m17 0h2m20 0h12m4 0h7m4 0h3m4 0h1m6 0h7m20 0h3m5 0h1m6 0h1m-84 1h11m4 0h6m6 0h2m5 0h2m5 0h8m20 0h1m13 0h3m50 0h4m-139 1h10m4 0h3m16 0h3m6 0h5m35 0h4m-84 1h8m26 0h5m2 0h4m36 0h3m7 0h1m-92 1h8m26 0h7m35 0h1m14 0h2m-156 1h1m63 0h5m29 0h4m-103 1h3m64 0h1m154 0h1m-222 1h2m64 0h2m78 0h2m73 0h1m-221 1h1m19 0h2m42 0h3m78 0h2m1 0h2m69 0h2m-221 1h1m19 0h2m19 0h1m23 0h2m81 0h2m-130 1h2m17 0h3m25 0h3m63 0h2m-105 1h2m6 0h3m6 0h3m17 0h3m-53 1h2m27 0h5m17 0h2m-25 1h7m-59 1h1m32 0h1m18 0h4m2 0h2m48 0h2m89 0h2m22 0h3m2 0h1m-177 1h3m144 0h2m21 0h7m-227 1h1m48 0h4m136 0h2m6 0h2m21 0h3m1 0h3m-227 1h2m46 0h4m110 0h1m25 0h3m5 0h2m22 0h2m3 0h2m-181 1h3m113 0h1m25 0h3m4 0h2m22 0h2m4 0h2m-215 1h1m32 0h4m146 0h2m11 0h1m9 0h3m5 0h1m-215 1h2m30 0h5m147 0h1m11 0h1m10 0h2m-209 1h2m30 0h5m123 0h3m15 0h1m-147 1h3m2 0h2m120 0h5m11 0h5m-147 1h1m2 0h4m119 0h5m10 0h6m-148 1h3m1 0h4m119 0h3m13 0h1m21 0h2m-168 1h3m2 0h2m120 0h3m36 0h2m-168 1h3m122 0h1m-130 1h8m121 0h1m49 0h1m-187 1h3m3 0h10m24 0h2m144 0h1m-187 1h2m4 0h10m24 0h1m97 0h1m-139 1h1m3 0h12m119 0h1m-138 1h4m1 0h12m22 0h1m96 0h2m-141 1h14m1 0h5m155 0h1m-178 1h15m2 0h5m-22 1h15m2 0h5m134 0h1m-157 1h13m1 0h8m108 0h2m35 0h2m9 0h1m-179 1h12m3 0h3m94 0h1m17 0h3m33 0h3m-170 1h12m29 0h1m54 0h3m68 0h2m-170 1h10m32 0h3m2 0h1m48 0h5m-102 1h10m32 0h7m44 0h2m1 0h4m81 0h1m-182 1h8m1 0h1m32 0h7m2 0h2m39 0h3m1 0h3m16 0h2m64 0h5m-190 1h6m2 0h3m39 0h3m41 0h4m6 0h1m56 0h1m16 0h1m7 0h4m-210 1h1m8 0h2m3 0h4m2 0h11m39 0h3m32 0h1m8 0h2m7 0h3m55 0h1m16 0h1m7 0h3m-211 1h2m10 0h1m3 0h5m1 0h11m39 0h4m2 0h1m41 0h2m2 0h3m73 0h1m6 0h3m-194 1h4m2 0h6m4 0h1m5 0h2m33 0h6m44 0h3m79 0h7m-195 1h1m5 0h5m11 0h1m29 0h1m4 0h5m3 0h2m5 0h1m33 0h2m27 0h1m29 0h1m21 0h9m1 0h1m-192 1h5m39 0h3m10 0h4m30 0h2m33 0h4m28 0h2m20 0h5m2 0h3m1 0h2m-193 1h5m40 0h2m10 0h3m21 0h2m8 0h2m33 0h3m29 0h2m-159 1h2m11 0h2m24 0h1m22 0h2m23 0h1m37 0h3m78 0h1m-195 1h3m18 0h1m5 0h2m22 0h1m62 0h1m79 0h1m-223 1h2m26 0h3m25 0h2m15 0h1m5 0h2m94 0h2m45 0h1m-223 1h2m27 0h2m42 0h2m4 0h2m29 0h2m62 0h3m45 0h1m-194 1h2m28 0h1m14 0h2m36 0h1m32 0h1m28 0h2m26 0h1m17 0h3m-194 1h1m29 0h1m53 0h1m31 0h1m29 0h1m43 0h4m-223 1h6m53 0h1m53 0h2m104 0h2m-221 1h5m54 0h1m156 0h1m-213 1h6m49 0h1m-66 1h1m9 0h6m133 0h2m39 0h2m-192 1h3m7 0h5m133 0h3m39 0h2m-191 1h7m90 0h1m49 0h3m39 0h2m-190 1h6m90 0h2m36 0h1m11 0h3m38 0h2m-188 1h5m48 0h1m40 0h2m5 0h1m43 0h3m39 0h1m-189 1h6m48 0h2m38 0h2m4 0h4m1 0h1m34 0h3m-144 1h1m4 0h3m98 0h1m32 0h7m38 0h2m-180 1h1m101 0h3m27 0h7m27 0h1m6 0h3m1 0h3m-185 1h2m49 0h2m55 0h1m27 0h4m34 0h1m3 0h6m15 0h2m-202 1h4m132 0h4m38 0h6m16 0h3m-203 1h3m128 0h1m6 0h2m31 0h1m5 0h8m-184 1h1m129 0h2m37 0h3m5 0h1m1 0h6m-186 1h3m96 0h1m52 0h2m2 0h1m12 0h6m5 0h6m2 0h1m-189 1h3m96 0h1m23 0h6m27 0h1m5 0h3m3 0h7m5 0h5m3 0h4m-69 1h6m31 0h5m3 0h5m8 0h6m1 0h6m-84 1h1m13 0h4m31 0h4m6 0h3m9 0h14m-199 1h2m29 0h1m81 0h2m23 0h1m25 0h2m19 0h14m-200 1h4m35 0h1m1 0h2m71 0h1m24 0h1m20 0h2m3 0h2m18 0h2m3 0h10m18 0h2m-220 1h3m35 0h2m1 0h2m84 0h4m20 0h4m5 0h3m3 0h1m18 0h3m3 0h9m6 0h1m-206 1h2m123 0h8m16 0h3m8 0h2m3 0h1m19 0h3m3 0h7m-97 1h1m23 0h3m2 0h3m7 0h7m2 0h2m12 0h3m19 0h3m3 0h6m-195 1h4m95 0h3m13 0h1m3 0h1m3 0h2m4 0h2m6 0h8m3 0h2m39 0h8m-199 1h6m95 0h2m18 0h2m1 0h3m4 0h2m6 0h3m3 0h2m3 0h2m39 0h9m13 0h1m14 0h2m-230 1h5m3 0h1m92 0h2m7 0h2m10 0h5m5 0h3m4 0h1m50 0h10m28 0h2m-229 1h3m5 0h2m90 0h2m21 0h3m11 0h1m52 0h9m10 0h1m-213 1h1m10 0h4m87 0h2m3 0h2m16 0h5m65 0h7m9 0h2m-213 1h1m4 0h1m6 0h4m108 0h6m69 0h4m-203 1h2m4 0h2m110 0h1m4 0h6m70 0h4m-203 1h2m5 0h1m109 0h2m3 0h7m7 0h1m43 0h1m17 0h5m18 0h1m-222 1h2m120 0h2m74 0h3m19 0h6m-226 1h4m3 0h2m108 0h1m4 0h3m73 0h4m17 0h7m-226 1h9m9 0h2m97 0h2m2 0h4m73 0h5m17 0h6m-226 1h9m107 0h3m2 0h3m73 0h7m17 0h4m-225 1h9m109 0h6m73 0h7m12 0h1m4 0h2m-223 1h11m109 0h5m72 0h2m2 0h2m-203 1h7m1 0h4m108 0h7m45 0h2m53 0h1m-228 1h7m2 0h4m106 0h7m45 0h2m53 0h2m-227 1h6m1 0h6m104 0h8m45 0h2m6 0h1m7 0h2m11 0h3m22 0h3m-225 1h4m2 0h5m103 0h9m45 0h3m5 0h2m6 0h2m11 0h4m21 0h2m2 0h1m-221 1h5m103 0h9m45 0h3m5 0h2m8 0h2m9 0h5m24 0h1m-221 1h4m6 0h2m96 0h5m48 0h4m13 0h4m9 0h4m-195 1h4m5 0h4m15 0h2m73 0h4m1 0h4m51 0h2m13 0h4m9 0h3m-194 1h3m7 0h3m59 0h1m29 0h9m47 0h1m21 0h2m8 0h5m-195 1h3m52 0h1m9 0h4m1 0h4m16 0h2m9 0h10m47 0h1m31 0h6m-196 1h4m51 0h2m4 0h2m2 0h9m15 0h3m9 0h9m48 0h2m30 0h6m-196 1h5m8 0h3m33 0h1m5 0h7m3 0h8m18 0h1m2 0h2m5 0h9m48 0h2m7 0h1m22 0h5m-195 1h5m7 0h3m34 0h2m3 0h1m1 0h5m7 0h5m21 0h2m5 0h8m49 0h2m26 0h1m4 0h4m-195 1h4m8 0h2m36 0h1m3 0h1m2 0h4m8 0h3m28 0h9m49 0h2m26 0h1m5 0h4m5 0h1m13 0h3m-218 1h2m10 0h2m36 0h2m2 0h1m3 0h3m7 0h3m28 0h9m84 0h6m3 0h2m12 0h4m-219 1h6m5 0h3m36 0h5m4 0h3m5 0h2m30 0h4m1 0h3m25 0h1m16 0h1m42 0h12m11 0h5m-221 1h15m36 0h5m4 0h4m4 0h1m32 0h7m42 0h1m42 0h13m12 0h5m-224 1h13m12 0h1m30 0h1m5 0h3m36 0h9m16 0h2m3 0h2m3 0h1m47 0h2m7 0h14m3 0h1m9 0h5m-224 1h11m6 0h2m42 0h3m34 0h11m17 0h2m2 0h3m1 0h3m46 0h2m6 0h15m3 0h2m8 0h6m-223 1h8m6 0h3m31 0h3m4 0h3m1 0h3m7 0h2m8 0h1m15 0h9m24 0h7m42 0h2m10 0h3m2 0h10m3 0h3m6 0h4m-220 1h8m39 0h4m4 0h3m1 0h4m4 0h4m8 0h1m13 0h11m24 0h2m2 0h2m56 0h2m3 0h9m4 0h2m6 0h4m-225 1h2m3 0h8m40 0h3m4 0h3m2 0h10m22 0h11m25 0h2m2 0h2m24 0h1m23 0h2m10 0h3m2 0h6m11 0h4m-225 1h3m1 0h11m3 0h1m34 0h3m4 0h3m3 0h3m2 0h3m22 0h11m22 0h2m3 0h5m25 0h1m21 0h3m9 0h4m4 0h5m12 0h3m2 0h1m-229 1h7m1 0h8m34 0h8m2 0h5m6 0h2m3 0h2m18 0h11m21 0h3m3 0h4m49 0h2m9 0h4m5 0h4m4 0h2m8 0h1m1 0h2m-228 1h5m3 0h8m33 0h8m2 0h8m30 0h9m21 0h3m4 0h3m49 0h2m10 0h3m5 0h5m3 0h3m-216 1h3m4 0h7m33 0h6m4 0h3m2 0h4m30 0h6m1 0h1m22 0h3m29 0h1m26 0h2m11 0h2m4 0h2m1 0h3m3 0h5m-211 1h7m34 0h3m7 0h2m3 0h4m29 0h6m23 0h3m35 0h3m33 0h1m4 0h7m2 0h5m-211 1h3m38 0h2m13 0h5m27 0h5m3 0h1m21 0h1m37 0h3m13 0h1m23 0h6m4 0h5m-211 1h2m38 0h3m24 0h1m19 0h4m5 0h1m92 0h1m4 0h8m4 0h8m-213 1h2m37 0h3m24 0h2m16 0h6m4 0h2m62 0h3m27 0h1m4 0h9m1 0h11m-214 1h5m34 0h4m41 0h9m1 0h3m61 0h2m33 0h17m3 0h5m-218 1h5m31 0h1m4 0h8m7 0h1m28 0h8m2 0h1m98 0h16m4 0h4m-217 1h5m30 0h4m3 0h4m37 0h9m69 0h2m31 0h15m5 0h4m-217 1h4m29 0h6m3 0h3m5 0h1m17 0h2m12 0h9m67 0h4m32 0h15m3 0h5m-216 1h3m3 0h2m24 0h6m5 0h1m7 0h1m32 0h6m64 0h7m4 0h3m19 0h2m4 0h16m5 0h2m-216 1h2m3 0h5m23 0h6m5 0h2m5 0h2m32 0h4m21 0h1m43 0h7m2 0h6m19 0h1m4 0h3m1 0h1m3 0h8m6 0h1m-217 1h11m12 0h3m8 0h5m6 0h3m38 0h3m21 0h3m42 0h6m4 0h4m22 0h2m1 0h2m2 0h1m4 0h7m-211 1h11m13 0h2m8 0h3m10 0h1m39 0h2m22 0h3m42 0h6m14 0h3m20 0h1m5 0h6m4 0h1m-217 1h11m23 0h4m43 0h3m28 0h2m42 0h7m13 0h4m27 0h5m-212 1h11m70 0h4m72 0h7m3 0h1m9 0h2m28 0h4m3 0h1m-216 1h11m69 0h6m65 0h1m7 0h7m2 0h2m38 0h4m-212 1h5m1 0h3m70 0h6m75 0h6m1 0h2m-170 1h6m2 0h2m32 0h1m37 0h6m20 0h2m11 0h1m35 0h2m5 0h5m-167 1h7m28 0h2m43 0h4m22 0h2m47 0h3m4 0h2m-167 1h11m28 0h2m42 0h5m21 0h2m47 0h3m4 0h2m-167 1h11m23 0h1m5 0h2m42 0h4m22 0h2m42 0h7m4 0h2m-168 1h12m72 0h5m4 0h1m17 0h1m44 0h3m1 0h5m26 0h1m31 0h2m-226 1h11m73 0h7m71 0h5m44 0h1m12 0h1m-224 1h10m54 0h1m18 0h6m72 0h5m44 0h1m-211 1h9m3 0h1m39 0h1m30 0h6m71 0h6m-165 1h5m6 0h1m27 0h1m11 0h2m28 0h8m74 0h3m11 0h1m-178 1h6m33 0h2m11 0h1m27 0h10m3 0h2m68 0h5m-168 1h7m9 0h1m22 0h2m11 0h2m26 0h11m2 0h2m68 0h1m2 0h1m21 0h2m-191 1h8m7 0h3m33 0h5m25 0h11m67 0h1m4 0h1m2 0h1m21 0h1m-190 1h8m6 0h4m33 0h7m19 0h15m68 0h2m2 0h3m-167 1h8m38 0h2m3 0h6m20 0h14m69 0h1m4 0h2m16 0h3m-186 1h9m37 0h1m30 0h14m75 0h3m15 0h2m-187 1h4m4 0h1m68 0h14m69 0h1m7 0h3m14 0h3m-188 1h3m44 0h3m27 0h13m33 0h1m5 0h3m53 0h3m-187 1h2m14 0h1m29 0h4m26 0h10m36 0h3m2 0h3m-130 1h3m13 0h1m31 0h1m28 0h8m37 0h10m-131 1h2m35 0h3m36 0h8m39 0h9m-132 1h2m35 0h1m29 0h17m39 0h9m-132 1h2m63 0h18m11 0h1m28 0h9m-135 1h6m33 0h1m28 0h16m14 0h1m26 0h2m1 0h5m-134 1h9m31 0h1m28 0h13m45 0h1m2 0h3m-133 1h7m1 0h1m31 0h1m28 0h5m5 0h3m3 0h3m39 0h6m-134 1h6m35 0h2m20 0h3m4 0h4m6 0h3m45 0h6m27 0h1m53 0h2m-218 1h4m37 0h4m19 0h10m8 0h2m46 0h5m26 0h3m52 0h3m-219 1h3m37 0h5m17 0h12m56 0h5m25 0h4m52 0h4m-224 1h3m40 0h5m17 0h12m12 0h1m44 0h6m24 0h2m54 0h3m-224 1h5m37 0h4m20 0h2m1 0h8m13 0h1m44 0h6m23 0h2m55 0h2m-226 1h8m31 0h9m24 0h5m16 0h1m45 0h5m24 0h1m53 0h3m-224 1h7m5 0h1m22 0h12m24 0h2m64 0h6m78 0h3m-224 1h7m5 0h1m20 0h18m71 0h2m12 0h7m21 0h2m42 0h3m11 0h2m-224 1h7m26 0h13m1 0h4m56 0h4m10 0h2m13 0h8m19 0h4m35 0h1m6 0h3m4 0h2m4 0h2m-223 1h7m25 0h3m4 0h6m1 0h4m55 0h5m10 0h1m14 0h7m20 0h3m50 0h3m3 0h3m-224 1h7m24 0h4m12 0h2m56 0h2m28 0h6m21 0h3m19 0h2m28 0h10m-223 1h6m24 0h4m70 0h1m29 0h6m22 0h2m19 0h3m26 0h3m1 0h4m-219 1h5m20 0h7m77 0h5m11 0h2m6 0h6m23 0h1m19 0h3m-184 1h4m20 0h3m17 0h3m55 0h1m5 0h5m12 0h1m7 0h1m1 0h3m60 0h2m-201 1h3m3 0h2m37 0h3m55 0h1m5 0h5m22 0h3m60 0h3m-202 1h3m3 0h2m103 0h4m1 0h3m17 0h4m24 0h2m34 0h2m13 0h2m16 0h1m-235 1h4m90 0h1m17 0h3m2 0h4m16 0h4m25 0h2m48 0h2m-219 1h5m40 0h1m68 0h1m4 0h3m17 0h4m41 0h1m31 0h4m-220 1h4m41 0h1m44 0h1m29 0h2m17 0h5m73 0h3m-218 1h2m41 0h1m74 0h3m14 0h7m79 0h1m-221 1h1m117 0h1m15 0h6m80 0h2m5 0h1m-94 1h5m25 0h2m20 0h1m24 0h2m-221 1h1m141 0h3m28 0h1m19 0h1m25 0h3m-223 1h3m141 0h4m32 0h1m40 0h2m-224 1h3m142 0h4m32 0h1m-181 1h2m5 0h2m135 0h4m-148 1h2m5 0h2m135 0h3m51 0h2m-199 1h1m142 0h4m29 0h1m-157 1h3m11 0h4m105 0h4m-126 1h3m6 0h8m56 0h1m48 0h6m53 0h1m-181 1h1m7 0h3m2 0h1m107 0h6m-127 1h1m3 0h2m2 0h3m1 0h3m6 0h2m11 0h2m85 0h7m-123 1h1m2 0h5m93 0h2m15 0h6m-119 1h3m111 0h6m-149 1h1m29 0h1m108 0h2m2 0h6m-149 1h2m27 0h2m108 0h2m2 0h9m-152 1h4m21 0h1m3 0h3m3 0h2m102 0h13m-152 1h6m14 0h1m3 0h3m2 0h3m3 0h2m11 0h4m85 0h13m5 0h1m-155 1h8m14 0h4m9 0h2m8 0h6m37 0h1m46 0h8m2 0h2m7 0h3m-157 1h8m15 0h1m11 0h3m5 0h6m3 0h1m34 0h2m45 0h5m15 0h3m42 0h1m-200 1h8m36 0h4m3 0h3m32 0h3m44 0h5m17 0h2m60 0h1m-218 1h8m43 0h4m31 0h2m43 0h7m78 0h2m-218 1h9m43 0h4m9 0h2m7 0h2m55 0h7m78 0h2m-217 1h7m33 0h1m11 0h4m9 0h1m9 0h1m13 0h2m39 0h8m-138 1h7m32 0h3m10 0h5m32 0h2m40 0h4m2 0h1m44 0h1m17 0h1m-201 1h1m1 0h5m32 0h2m11 0h6m4 0h1m62 0h3m3 0h4m57 0h1m7 0h1m-201 1h1m2 0h5m32 0h1m11 0h6m4 0h2m3 0h2m17 0h2m11 0h1m2 0h2m10 0h1m10 0h11m-132 1h4m24 0h1m13 0h2m4 0h5m5 0h3m1 0h2m1 0h2m14 0h3m11 0h6m8 0h5m7 0h12m-132 1h3m17 0h3m3 0h4m10 0h3m3 0h6m6 0h2m1 0h2m1 0h2m28 0h2m2 0h5m5 0h3m10 0h12m-134 1h4m17 0h3m6 0h1m15 0h5m12 0h4m28 0h2m3 0h2m8 0h1m14 0h9m83 0h1m-218 1h4m16 0h2m23 0h5m41 0h2m2 0h1m3 0h3m24 0h8m74 0h2m7 0h1m-218 1h3m16 0h3m21 0h6m12 0h2m36 0h3m18 0h1m6 0h7m67 0h2m6 0h2m-211 1h3m16 0h3m20 0h4m14 0h3m10 0h2m25 0h2m18 0h1m7 0h5m78 0h3m-215 1h3m33 0h10m15 0h3m11 0h1m24 0h1m20 0h1m6 0h5m80 0h2m-214 1h2m32 0h11m47 0h1m1 0h2m6 0h3m16 0h1m3 0h6m81 0h1m-179 1h10m48 0h1m2 0h2m6 0h4m3 0h3m8 0h3m1 0h5m-100 1h1m2 0h8m51 0h4m6 0h7m1 0h4m4 0h11m-96 1h7m52 0h1m8 0h14m8 0h6m-129 1h2m30 0h7m60 0h11m1 0h5m8 0h5m-129 1h3m28 0h9m62 0h3m1 0h5m1 0h3m9 0h4m-127 1h4m26 0h9m13 0h2m53 0h3m2 0h2m11 0h1m-124 1h3m24 0h10m13 0h3m53 0h5m-99 1h3m12 0h10m59 0h1m9 0h4m17 0h1m-116 1h4m11 0h11m15 0h1m42 0h1m29 0h2m-116 1h4m10 0h13m21 0h1m136 0h1m-185 1h3m10 0h12m51 0h1m18 0h2m-106 1h2m8 0h1m11 0h11m19 0h1m51 0h1m-93 1h2m9 0h10m18 0h3m-42 1h2m9 0h6m3 0h1m5 0h2m11 0h2m74 0h1m-105 1h6m9 0h2m11 0h1m74 0h2m60 0h1m-175 1h4m6 0h6m8 0h2m50 0h3m4 0h3m21 0h1m4 0h2m-114 1h4m5 0h4m1 0h3m55 0h2m3 0h4m3 0h2m21 0h1m4 0h2m-114 1h4m5 0h8m54 0h3m5 0h2m3 0h2m25 0h3m15 0h1m-129 1h1m5 0h11m19 0h1m34 0h2m6 0h1m8 0h1m21 0h3m-108 1h11m20 0h1m50 0h2m21 0h2m-109 1h11m73 0h2m41 0h1m-128 1h9m23 0h1m51 0h1m42 0h3m-129 1h7m22 0h4m15 0h1m53 0h2m1 0h1m21 0h2m-130 1h5m18 0h12m14 0h1m19 0h2m32 0h4m21 0h3m-166 1h2m20 0h2m10 0h4m21 0h14m11 0h2m18 0h1m34 0h3m1 0h1m19 0h3m-166 1h2m26 0h1m33 0h16m6 0h2m78 0h1m-166 1h3m14 0h1m11 0h2m2 0h1m30 0h3m2 0h11m29 0h2m-111 1h3m11 0h1m1 0h2m47 0h1m4 0h7m1 0h4m6 0h2m18 0h3m-112 1h2m19 0h1m49 0h7m1 0h5m5 0h2m19 0h2m35 0h3m-150 1h3m17 0h3m5 0h5m36 0h6m1 0h2m1 0h6m6 0h1m54 0h4m-151 1h4m17 0h3m4 0h4m38 0h3m7 0h5m-85 1h4m17 0h3m1 0h7m3 0h1m34 0h2m9 0h3m2 0h3m-90 1h5m17 0h12m2 0h1m45 0h2m2 0h4m-90 1h2m1 0h1m17 0h13m2 0h2m44 0h2m1 0h5m23 0h1m73 0h2m-190 1h2m20 0h14m1 0h3m27 0h2m5 0h2m10 0h5m97 0h2m-190 1h2m15 0h1m5 0h12m2 0h5m44 0h5m-92 1h4m19 0h12m3 0h6m10 0h1m5 0h1m28 0h2m7 0h1m-98 1h4m18 0h3m1 0h9m2 0h5m24 0h1m-67 1h5m11 0h3m1 0h4m5 0h3m6 0h4m11 0h3m20 0h1m-77 1h5m6 0h3m1 0h9m6 0h1m23 0h4m17 0h2m-80 1h7m7 0h12m20 0h1m10 0h4m18 0h1m-81 1h7m8 0h11m47 0h3m-76 1h5m9 0h10m49 0h5m34 0h1m50 0h1m-164 1h4m11 0h7m5 0h1m46 0h1m28 0h4m3 0h4m63 0h1m9 0h1m-188 1h4m12 0h5m73 0h1m14 0h6m72 0h1m-188 1h3m3 0h3m6 0h5m70 0h2m18 0h2m33 0h2m-148 1h4m3 0h6m2 0h4m67 0h1m4 0h2m24 0h1m-118 1h3m4 0h4m13 0h4m63 0h1m26 0h1m-120 1h4m5 0h2m14 0h4m63 0h2m25 0h1m-121 1h5m26 0h1m62 0h3m-98 1h5m17 0h2m8 0h1m62 0h4m15 0h1m-116 1h5m17 0h2m72 0h4m15 0h1m-116 1h5m17 0h2m61 0h1m11 0h2m-99 1h5m119 0h1m-126 1h6m20 0h2m68 0h1m29 0h1m-127 1h6m19 0h2m55 0h2m12 0h1m-98 1h7m76 0h2m-86 1h7m-8 1h7m-8 1h7m93 0h1m25 0h1m-127 1h9m37 0h1m52 0h2m59 0h3m-163 1h9m38 0h1m52 0h1m59 0h2m-162 1h9m92 0h1m-102 1h9m118 0h3m-130 1h9m80 0h2m37 0h2m-131 1h10m79 0h7m33 0h2m-136 1h13m85 0h1m-99 1h12m47 0h2m47 0h2m-109 1h10m23 0h2m17 0h1m5 0h2m47 0h2m-109 1h10m6 0h1m17 0h5m87 0h2m-131 1h1m2 0h9m7 0h1m18 0h4m50 0h2m4 0h2m29 0h1m-131 1h14m25 0h4m50 0h3m2 0h3m29 0h1m-132 1h3m1 0h10m27 0h2m48 0h2m2 0h1m4 0h2m29 0h1m-131 1h2m2 0h5m80 0h3m42 0h1m-129 1h3m24 0h1m54 0h5m41 0h1m-128 1h3m15 0h2m61 0h4m6 0h2m38 0h1m-131 1h1m78 0h3m6 0h5m36 0h2m-135 1h1m87 0h9m36 0h1m-134 1h2m27 0h1m58 0h9m65 0h1m-164 1h3m26 0h3m58 0h8m12 0h1m5 0h1m46 0h1m-164 1h3m26 0h2m4 0h2m58 0h2m13 0h1m32 0h2m-146 1h5m25 0h1m5 0h2m50 0h2m14 0h1m-106 1h6m31 0h2m43 0h2m5 0h2m-92 1h6m32 0h1m3 0h1m40 0h3m5 0h1m6 0h1m-100 1h7m36 0h2m40 0h1m12 0h3m51 0h2m-157 1h10m91 0h3m48 0h1m1 0h3m-157 1h10m91 0h4m-105 1h9m5 0h1m70 0h1m16 0h4m42 0h2m-150 1h9m4 0h2m89 0h2m43 0h1m-150 1h2m1 0h6m4 0h2m21 0h3m1 0h2m-41 1h6m5 0h3m22 0h6m111 0h3m14 0h1m-172 1h5m33 0h5m52 0h2m25 0h2m30 0h4m6 0h1m-165 1h1m2 0h1m35 0h3m48 0h1m31 0h5m28 0h3m4 0h2m-125 1h2m46 0h1m10 0h2m23 0h2m32 0h1m-77 1h1m5 0h1m27 0h1m-108 1h1m60 0h2m16 0h2m4 0h1m-86 1h2m77 0h4m1 0h3m-6 1h2m1 0h2m-9 1h2m6 0h1m-82 1h1m73 0h1m-26 1h2m27 0h1m-30 1h2m26 0h2m-2 1h3m-95 1h2m34 0h2m43 0h1m41 0h1m-123 1h1m33 0h3m85 0h1m-123 1h1m33 0h4m-39 1h1m33 0h4m-38 1h1m13 0h3m17 0h3m80 0h1m-115 1h1m10 0h4m16 0h1m-32 1h3m8 0h3m47 0h1m-64 1h1m1 0h1m11 0h1m49 0h1m-58 1h2m1 0h1m-7 2h1m1 0h1m2 0h1m-5 1h1m-3 2h1"/><path stroke="#ffa500" stroke-width="1" d="M544 239.5h3m8 0h2m20 0h1m7 0h5m2 0h7m5 0h2m2 0h12m4 0h3m-51 1h3m6 0h4m4 0h7m4 0h2m2 0h3m1 0h4m2 0h3m3 0h3m-51 1h5m3 0h5m4 0h14m6 0h2m3 0h3m4 0h4m-112 1h1m32 0h3m23 0h5m2 0h9m4 0h12m3 0h3m4 0h3m2 0h5m-105 1h1m27 0h2m22 0h6m3 0h8m4 0h12m1 0h6m2 0h4m2 0h3m-75 1h3m17 0h1m2 0h6m6 0h7m3 0h11m1 0h12m3 0h2m-101 1h4m24 0h2m10 0h1m5 0h7m9 0h8m1 0h23m6 0h1m-101 1h4m18 0h1m17 0h2m3 0h8m9 0h23m2 0h10m-97 1h3m19 0h1m16 0h2m4 0h4m3 0h2m8 0h4m2 0h15m3 0h12m-100 1h4m12 0h2m6 0h2m15 0h2m5 0h3m4 0h2m6 0h4m3 0h14m4 0h13m-110 1h3m4 0h6m6 0h8m5 0h4m8 0h3m3 0h3m4 0h4m2 0h3m6 0h2m5 0h13m3 0h16m2 0h4m-117 1h1m8 0h4m5 0h9m3 0h6m4 0h3m8 0h3m2 0h11m5 0h2m5 0h13m1 0h2m1 0h3m2 0h6m2 0h9m-108 1h3m3 0h9m5 0h5m4 0h4m6 0h5m2 0h3m1 0h8m4 0h2m5 0h11m3 0h5m3 0h6m3 0h4m7 0h2m-113 1h1m5 0h7m8 0h1m7 0h4m4 0h11m3 0h4m14 0h4m3 0h3m4 0h4m3 0h7m4 0h3m7 0h1m-106 1h2m1 0h4m15 0h4m5 0h11m4 0h2m16 0h3m3 0h3m5 0h3m3 0h8m3 0h3m-97 1h1m20 0h4m3 0h10m8 0h3m14 0h3m4 0h1m12 0h9m2 0h5m-100 1h2m21 0h4m1 0h8m10 0h5m13 0h6m14 0h8m5 0h5m-103 1h2m19 0h1m2 0h9m15 0h4m13 0h6m19 0h3m6 0h4m-83 1h3m1 0h8m33 0h5m18 0h5m7 0h3m-84 1h4m1 0h8m12 0h2m19 0h3m20 0h5m8 0h1m-77 1h4m16 0h1m20 0h1m-40 1h2m-1 1h1m-197 411h1m-1 1h2m-2 1h2m-2 1h2m-6 1h1m4 0h1m1 0h3m-3 1h4m2 0h1m-6 1h7m-6 1h1"/><path stroke="#c8501e" stroke-width="1" d="M407 329.5h3m-1 4h4m-3 1h4m128 130h2m-2 1h2m32 31h2m-2 1h2m-110 61h1m-1 1h1m28 7h2"/></g><polygon points="401.7,237.0 401.7,248.0 410.0,252.0 419.0,254.0 432.0,252.5 444.0,249.4 455.0,245.0 463.0,241.0 473.0,237.0" fill="#aad3df"/><polyline points="798.4,237.0 820.8,248.2 843.2,248.2 862.9,237.0" fill="none" stroke="#a9a3c0" stroke-width="1.2"/><g fill="#fff" stroke="#7a7a7a" stroke-width="0.9"><circle cx="56.0" cy="250.0" r="1.9"/><circle cx="98.4" cy="277.7" r="1.9"/><circle cx="138.3" cy="265.9" r="1.9"/><circle cx="156.0" cy="331.5" r="1.9"/><circle cx="93.7" cy="347.4" r="1.9"/><circle cx="223.0" cy="360.9" r="1.9"/><circle cx="352.9" cy="265.7" r="1.9"/><circle cx="275.3" cy="385.0" r="1.9"/><circle cx="339.7" cy="425.8" r="1.9"/><circle cx="67.3" cy="446.0" r="1.9"/><circle cx="71.0" cy="472.0" r="1.9"/><circle cx="278.0" cy="456.8" r="1.9"/><circle cx="128.0" cy="574.0" r="1.9"/><circle cx="192.0" cy="571.7" r="1.9"/><circle cx="172.0" cy="591.5" r="1.9"/><circle cx="189.0" cy="604.6" r="1.9"/><circle cx="36.0" cy="665.6" r="1.9"/><circle cx="744.5" cy="251.0" r="1.9"/><circle cx="815.0" cy="273.5" r="1.9"/><circle cx="861.8" cy="272.6" r="1.9"/><circle cx="903.6" cy="269.3" r="1.9"/><circle cx="888.7" cy="310.5" r="1.9"/><circle cx="932.5" cy="308.8" r="1.9"/><circle cx="918.4" cy="317.3" r="1.9"/><circle cx="978.8" cy="298.7" r="1.9"/><circle cx="734.4" cy="321.7" r="1.9"/><circle cx="696.0" cy="356.3" r="1.9"/><circle cx="832.6" cy="353.5" r="1.9"/><circle cx="883.0" cy="348.7" r="1.9"/><circle cx="930.8" cy="348.7" r="1.9"/><circle cx="779.3" cy="372.5" r="1.9"/><circle cx="924.6" cy="383.8" r="1.9"/><circle cx="784.9" cy="406.0" r="1.9"/><circle cx="842.7" cy="432.0" r="1.9"/><circle cx="720.3" cy="447.5" r="1.9"/><circle cx="790.8" cy="443.8" r="1.9"/><circle cx="877.0" cy="445.5" r="1.9"/><circle cx="688.5" cy="466.0" r="1.9"/><circle cx="711.4" cy="474.9" r="1.9"/><circle cx="826.0" cy="471.0" r="1.9"/><circle cx="656.3" cy="505.6" r="1.9"/><circle cx="793.0" cy="513.0" r="1.9"/><circle cx="868.5" cy="514.4" r="1.9"/><circle cx="913.9" cy="521.0" r="1.9"/><circle cx="660.0" cy="538.7" r="1.9"/><circle cx="790.4" cy="579.6" r="1.9"/><circle cx="725.0" cy="589.6" r="1.9"/><circle cx="838.7" cy="615.3" r="1.9"/><circle cx="909.0" cy="622.7" r="1.9"/><circle cx="630.0" cy="638.0" r="1.9"/><circle cx="662.2" cy="654.9" r="1.9"/><circle cx="947.0" cy="684.0" r="1.9"/><circle cx="553.5" cy="632.0" r="1.9"/></g><g font-family="Liberation Sans, sans-serif" fill="#555" stroke="#f2efe9" stroke-width="2.5" paint-order="stroke" stroke-opacity="0.8"><text x="36" y="262" font-size="10.34">Iowa City</text><text x="48" y="282" font-size="10.34">Muscatine</text><text x="116" y="278" font-size="10.34">Davenport</text><text x="341" y="262" font-size="10.34">Joliet</text><text x="406" y="255" font-size="10.34">Gary</text><text x="730" y="248" font-size="10.34">Toledo</text><text x="882" y="266" font-size="10.34">Cleveland</text><text x="795" y="285" font-size="10.34">Sandusky</text><text x="848" y="284" font-size="10.34">Lorain</text><text x="873" y="307" font-size="10.34">Medina</text><text x="922" y="306" font-size="10.34">Kent</text><text x="962" y="296" font-size="10.34">Warre</text><text x="906" y="328" font-size="10.34">Akron</text><text x="964" y="326" font-size="10.34">Youn</text><text x="133" y="344" font-size="10.34">Galesburg</text><text x="209" y="358" font-size="10.34">Peoria</text><text x="719" y="333" font-size="10.34">Findlay</text><text x="685" y="352" font-size="10.34">Lima</text><text x="811" y="365" font-size="10.34">Mansfield</text><text x="863" y="360" font-size="10.34">Wooster</text><text x="915" y="361" font-size="10.34">Canton</text><text x="70" y="359" font-size="10.34">Burlington</text><text x="764" y="370" font-size="10.34">Marion</text><text x="886" y="381" font-size="10.34">New Philadelphia</text><text x="246" y="397" font-size="10.34">Bloomington</text><text x="764" y="417" font-size="10.34">Delaware</text><text x="825" y="430" font-size="10.34">Newark</text><text x="314" y="423" font-size="10.34">Champaign</text><text x="982" y="405" font-size="10.34">W</text><text x="52" y="444" font-size="10.34">Quincy</text><text x="697" y="445" font-size="10.34">Springfield</text><text x="965" y="444" font-size="10.34">Whee</text><text x="51" y="469" font-size="10.34">Hannibal</text><text x="260" y="468" font-size="10.34">Decatur</text><text x="764" y="458" font-size="12.219999999999999">Columbus</text><text x="855" y="457" font-size="10.34">Zanesville</text><text x="673" y="464" font-size="10.34">Dayton</text><text x="636" y="470" font-size="10.34">ond</text><text x="699" y="486" font-size="10.34">Xenia</text><text x="805" y="483" font-size="10.34">Lancaster</text><text x="385" y="496" font-size="10.34">Terr</text><text x="636" y="503" font-size="10.34">Hamilton</text><text x="769" y="525" font-size="10.34">Chillicothe</text><text x="853" y="525" font-size="10.34">Athens</text><text x="918" y="525" font-size="10.34">Parkersburg</text><text x="638" y="552" font-size="10.34">Cincinnati</text><text x="165" y="569" font-size="10.34">Edwardsville</text><text x="110" y="571" font-size="10.34">O&#39;Fallon</text><text x="6" y="584" font-size="10.34">son</text><text x="148" y="589" font-size="10.34">Saint Louis</text><text x="705" y="587" font-size="10.34">Maysville</text><text x="765" y="577" font-size="10.34">Portsmouth</text><text x="170" y="615" font-size="10.34">Belleville</text><text x="814" y="612" font-size="10.34">Huntington</text><text x="884" y="620" font-size="10.34">Charleston</text><text x="563" y="628" font-size="10.34">ille</text><text x="609" y="650" font-size="10.34">Frankfort</text><text x="640" y="667" font-size="10.34">Lexington</text><text x="25" y="677" font-size="10.34">Rolla</text><text x="230" y="687" font-size="10.34">Carbondale</text><text x="931" y="682" font-size="10.34">Beckley</text><text x="383" y="671" font-size="10.34">vsville</text><text x="447" y="242" font-size="10.34">City</text><text x="220" y="467" font-size="11" font-style="italic" fill="#8a7ba8">Illinois</text><text x="805" y="399" font-size="11" font-style="italic" fill="#8a7ba8">Ohio</text><text x="621" y="683" font-size="11" font-style="italic" fill="#8a7ba8">Kentucky</text></g></svg>
  <div class="mctl" style="left:7px;top:6px;width:17px;height:34px;border-radius:4px"></div>
  <div style="position:absolute;left:7px;top:23px;width:17px;height:1px;background:#ddd"></div>
  <div class="abs" style="left:10px;top:7px;font-size:14px;font-weight:bold;color:#444;width:11px;text-align:center">+</div>
  <div class="abs" style="left:10px;top:24px;font-size:14px;font-weight:bold;color:#444;width:11px;text-align:center">&#8722;</div>
  <div class="mctl" style="left:960px;top:6px;width:17px;height:17px"></div>
  <div class="abs" style="left:963px;top:7px;font-size:11px;color:#333">&#10530;</div>
  <div class="mctl" style="left:960px;top:426px;width:17px;height:17px"></div>
  <div class="abs" style="left:966px;top:428px;font-size:12px;color:#333;font-weight:bold">i</div>
</div>
<div id="fade"></div>
<div class="abs" id="fd">Full Details</div>
<div class="abs dt" style="left:150px;top:737px;width:86px">Title:</div>
<div class="abs dd" style="left:257px;top:737px">Aquifer sensitivity in shallow aquifers [Indiana] {2015}</div>
<div class="abs dt" style="left:100px;top:761px;width:136px">Description:</div>
<div class="abs dd" style="left:257px;top:760px;line-height:18px;font-size:12.73px">Aquifer_Sensitivity_Near_Surface_IN is a raster data layer that displays a reclassified raster data layer of estimated rates of<br>diffuse groundwater recharge to the water table in shallow aquifers in Indiana (see Aquifer_Recharge_Near_Surface_IN). The<br><span style="letter-spacing:0.07px">goal of this project was to use an objective, reproducible methodology to rank aquifer sensitivity in shallow aquifers based on</span><br>estimates of diffuse groundwater recharge rates. To achieve the aquifer sensitivity ranking the recharge rates were</div>

<div class="btn blue med" style="left:1011px;top:75px;width:146px;height:29px;line-height:29px">Clear search</div>
<div class="btn" style="left:1160px;top:75px;width:161px;height:29px;line-height:27px;border:1px solid #6c757d;color:#6c757d">Back to Search</div>
<div class="btn" style="left:1012px;top:117px;width:311px;height:27px;line-height:27px;background:#ffc107;color:#212529;border-radius:3px;font-size:12.8px">GBL<svg width="9" height="10" viewBox="0 0 9 10" style="vertical-align:-0.5px"><path d="M4.5,0.2L8.3,5L4.5,9.8L0.7,5Z" fill="#212529"/></svg>Admin | Edit Record</div>
<div id="links"><div id="linksh"></div>
  <div class="abs" style="left:15px;top:9px;font-size:13px;color:#212529">Links</div>
  <div class="abs lnk" style="left:35px;top:47px">Metadata</div>
  <div class="abs lnk" style="left:33px;top:77px">Data Dictionary</div>
  <div class="abs lnk" style="left:33px;top:107px">Cite</div>
</div>
<svg style="position:absolute;left:1020px;top:205px" width="24" height="80" viewBox="1020 205 24 80">
  <path d="M1028.8,210.6Q1028.8,210 1029.4,210H1035.2L1038.1,212.9V218.8Q1038.1,219.4 1037.5,219.4H1029.4Q1028.8,219.4 1028.8,218.8Z" fill="#707070"/>
  <path d="M1035.2,210V212.9H1038.1" fill="#b8b8b8"/>
  <rect x="1030.3" y="214.8" width="6.3" height="1" fill="#bdbdbd"/><rect x="1030.3" y="216.8" width="6.3" height="1" fill="#bdbdbd"/>
  <rect x="1027" y="240" width="10.6" height="8.9" rx="1.2" fill="#707070"/>
  <rect x="1028.2" y="243.2" width="3.9" height="1.9" fill="#e8e8e8"/><rect x="1033" y="243.2" width="3.4" height="1.9" fill="#e8e8e8"/>
  <rect x="1028.2" y="245.9" width="3.9" height="1.9" fill="#e8e8e8"/><rect x="1033" y="245.9" width="3.4" height="1.9" fill="#e8e8e8"/>
  <path d="M1027.2,279.1V275.3Q1027.2,271.6 1031.3,270.8V272.3Q1029.4,272.9 1029.3,274.5H1031.6V279.1Z" fill="#707070"/>
  <path d="M1033.1,279.1V275.3Q1033.1,271.6 1037.2,270.8V272.3Q1035.3,272.9 1035.2,274.5H1037.5V279.1Z" fill="#707070"/>
</svg>
<div class="btn blue med" style="left:1011px;top:312px;width:313px;height:29px;line-height:29px">Web services</div>
<div class="btn blue med" style="left:1011px;top:349px;width:313px;height:29px;line-height:29px">Download<span style="display:inline-block;margin-left:7px;vertical-align:2px;width:0;height:0;border-left:4px solid transparent;border-right:4px solid transparent;border-top:4px solid #fff"></span></div>
</body></html>
